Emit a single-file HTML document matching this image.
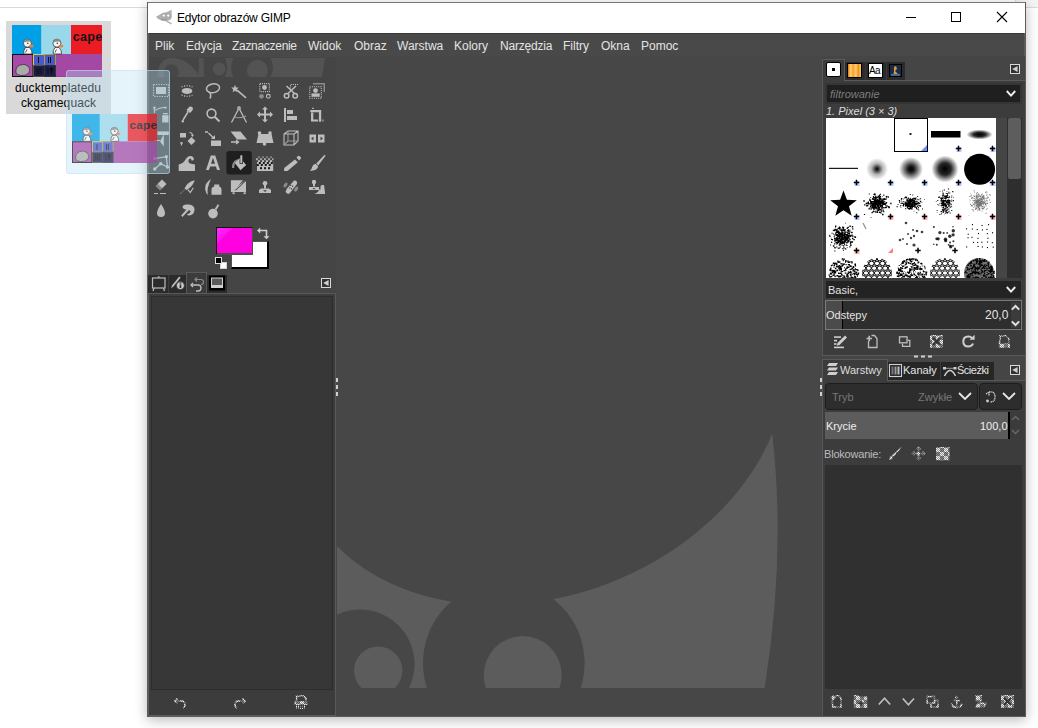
<!DOCTYPE html>
<html><head><meta charset="utf-8">
<style>
*{margin:0;padding:0;box-sizing:border-box}
html,body{width:1038px;height:728px;overflow:hidden;background:#fff;font-family:"Liberation Sans",sans-serif;position:relative}
.a{position:absolute}
.t{position:absolute;white-space:nowrap;line-height:1}
.menu{top:40px;font-size:12px;color:#e4e4e4}
</style></head><body>

<svg width="0" height="0" style="position:absolute">
<defs>
<pattern id="chk" width="8" height="8" patternUnits="userSpaceOnUse"><rect width="8" height="8" fill="#5a5a5a"/><path d="M0 0h1v1h-1zM2 0h1v1h-1zM1 1h1v1h-1zM3 1h1v1h-1zM0 2h1v1h-1zM2 2h1v1h-1zM1 3h1v1h-1zM3 3h1v1h-1zM4 4h1v1h-1zM6 4h1v1h-1zM5 5h1v1h-1zM7 5h1v1h-1zM4 6h1v1h-1zM6 6h1v1h-1zM5 7h1v1h-1zM7 7h1v1h-1z" fill="#ececec"/><path d="M1 0h1v1h-1zM3 0h1v1h-1zM0 1h1v1h-1zM2 1h1v1h-1zM1 2h1v1h-1zM3 2h1v1h-1zM0 3h1v1h-1zM2 3h1v1h-1zM5 4h1v1h-1zM7 4h1v1h-1zM4 5h1v1h-1zM6 5h1v1h-1zM5 6h1v1h-1zM7 6h1v1h-1zM4 7h1v1h-1zM6 7h1v1h-1z" fill="#9a9a9a"/><path d="M4 0h1v1h-1zM6 0h1v1h-1zM5 1h1v1h-1zM7 1h1v1h-1zM4 2h1v1h-1zM6 2h1v1h-1zM5 3h1v1h-1zM7 3h1v1h-1zM0 4h1v1h-1zM2 4h1v1h-1zM1 5h1v1h-1zM3 5h1v1h-1zM0 6h1v1h-1zM2 6h1v1h-1zM1 7h1v1h-1zM3 7h1v1h-1z" fill="#8a8a8a"/></pattern>
<symbol id="thumb" viewBox="0 0 90 52">
<rect x="0" y="0" width="29.5" height="29" fill="#00a0e6"/>
<rect x="29.5" y="0" width="29.5" height="29" fill="#99d8ea"/>
<rect x="59" y="0" width="31" height="29" fill="#ec1c24"/>
<text x="60.8" y="15.8" font-family="Liberation Sans" font-weight="bold" font-size="12.5" letter-spacing="0.3" fill="#141414">cape</text>
<rect x="0" y="29" width="90" height="23" fill="#a349a4"/>
<rect x="0.5" y="29.5" width="20.5" height="22" fill="#a84aa8" stroke="#111" stroke-width="1"/>
<path d="M4,48 Q3,42 8,40 Q12,38 16,41 Q19,44 17,48 Q14,51 9,50.5 Q5,50 4,48 Z" fill="#a9aaa9" stroke="#333" stroke-width=".8"/>
<rect x="21.5" y="29.5" width="11" height="11" fill="#4a58c8" stroke="#d8d040" stroke-width="1"/>
<rect x="32.5" y="29.5" width="11" height="11" fill="#4a58c8" stroke="#a8a040" stroke-width="1"/>
<rect x="21.5" y="40.5" width="11" height="11" fill="#1c1c48" stroke="#555530" stroke-width="1"/>
<rect x="32.5" y="40.5" width="11" height="11" fill="#1c1c48" stroke="#333" stroke-width="1"/>
<path d="M26.5,32 V38 M36.5,32 V38 M38.5,32 V38 M25,43 V49 M27,43 V49 M29,43 V49 M36,43 V49 M38.5,43 L39.5,49 L40.5,43" stroke="#111" stroke-width="1"/>
<g id="duck"><path d="M11.8,29 Q11,25.5 13.5,22.5 L17.5,22.5 Q20.5,25.5 20,29 Z" fill="#f6f6f6" stroke="#222" stroke-width=".7"/><circle cx="15.4" cy="18.2" r="4" fill="#f4f4f4" stroke="#222" stroke-width=".7"/><path d="M11.6,17.5 Q12,14.2 15.4,14.2 Q18.6,14.2 19.2,17 Q16,16 11.6,17.5 Z" fill="#8a8a8a"/><circle cx="15.8" cy="18.3" r=".8" fill="#333"/><ellipse cx="19.4" cy="21" rx="2.4" ry="1.5" fill="#e8823a"/><path d="M13.5,27.5 L15,24.5" stroke="#333" stroke-width=".8"/></g>
<use href="#duck" x="29.5"/>
</symbol>
</defs></svg>
<div class="a" style="left:6px;top:21px;width:105px;height:93px;background:#d9d9d9"></div>
<svg class="a" style="left:12px;top:25px" width="90" height="52" viewBox="0 0 90 52"><use href="#thumb"/></svg>
<div class="a" style="left:12px;top:76px;width:90px;height:1px;background:rgba(0,0,0,.08)"></div>
<div class="t" style="left:15px;top:82px;font-size:12px;color:#000;letter-spacing:0.1px">ducktemplatedu</div>
<div class="t" style="left:21px;top:97px;font-size:12px;color:#000;letter-spacing:0.1px">ckgamequack</div>

<!-- desktop -->
<div class="a" style="left:0;top:7px;width:1038px;height:1px;background:#dadada"></div>
<div class="a" style="left:1015px;top:0;width:1px;height:7px;background:#dadada"></div>
<div class="a" style="left:1016px;top:0;width:22px;height:7px;background:#f4f4f4"></div>
<!-- window -->
<div class="a" style="left:147px;top:2px;width:879px;height:715px;background:#454545;border-style:solid;border-color:#777 #5c5c5c #5c5c5c #5c5c5c;border-width:1px 2px 2px 2px;box-shadow:0 3px 12px rgba(0,0,0,.28)"></div>
<div class="a" style="left:148px;top:3px;width:877px;height:30px;background:#fff"></div>
<div class="t" style="left:177px;top:12px;font-size:12px;letter-spacing:-0.2px;color:#000">Edytor obrazów GIMP</div>
<svg class="a" style="left:150px;top:5px" width="26" height="24" viewBox="150 5 26 24"><path d="M156,16.8 L159.5,14.8 Q162.5,11.8 166.5,12.2 L171.6,9.8 L171.8,17 Q171.5,20.2 167.5,20.8 L172,23.6 L170.8,24.6 L165.8,21.3 Q159.5,21.2 156,16.8 Z" fill="#b0b0b0"/><circle cx="163.8" cy="15.6" r="1.6" fill="#fff" stroke="#888" stroke-width=".6"/><circle cx="168.2" cy="15.6" r="1.6" fill="#fff" stroke="#888" stroke-width=".6"/><path d="M161,19 Q164,20.5 167,19" stroke="#888" stroke-width=".7" fill="none"/></svg>
<div class="a" style="left:906px;top:17px;width:10px;height:1px;background:#000"></div>
<div class="a" style="left:951px;top:12px;width:10px;height:10px;border:1px solid #000"></div>
<svg class="a" style="left:996px;top:11px" width="12" height="12" viewBox="0 0 12 12"><path d="M1,1 L11,11 M11,1 L1,11" stroke="#000" stroke-width="1.1"/></svg>
<!-- menu -->
<div class="a" style="left:149px;top:33px;width:875px;height:1px;background:#3a3a3a"></div>
<div class="a" style="left:149px;top:34px;width:875px;height:23px;background:#494949"></div>
<div class="t menu" style="left:155px">Plik</div>
<div class="t menu" style="left:186px">Edycja</div>
<div class="t menu" style="left:232px;letter-spacing:-0.3px">Zaznaczenie</div>
<div class="t menu" style="left:308px">Widok</div>
<div class="t menu" style="left:354px">Obraz</div>
<div class="t menu" style="left:397px">Warstwa</div>
<div class="t menu" style="left:454px">Kolory</div>
<div class="t menu" style="left:500px;letter-spacing:-0.2px">Narzędzia</div>
<div class="t menu" style="left:563px">Filtry</div>
<div class="t menu" style="left:601px">Okna</div>
<div class="t menu" style="left:641px">Pomoc</div>

<svg class="a" style="left:150px;top:54px" width="180" height="26" viewBox="150 54 180 26">
<defs><clipPath id="cwt"><rect x="150" y="58" width="180" height="19"/></clipPath></defs>
<g clip-path="url(#cwt)" fill="#535353">
<path d="M157.5,77 C157.5,64 163,58 172,58 C182,58 191,64 197.5,73 L199,77 Z"/>
<path d="M198.8,58 L203.5,58 L204,77 L197,77 Q200,68 198.8,58 Z"/>
<path d="M225,58 L233.3,58 Q229,67.5 233.3,77 L225,77 Q229,67.5 225,58 Z"/>
<path d="M270.5,58 L325,58 L322,77 L270.5,77 Q275.5,67.5 270.5,58 Z"/>
</g>
<g clip-path="url(#cwt)">
<circle cx="171.3" cy="72" r="7.5" fill="#474747"/>
<circle cx="219.2" cy="69" r="6.4" fill="#535353"/>
<circle cx="257.4" cy="70.3" r="10.5" fill="#535353"/>
</g>
</svg>

<svg class="a" style="left:0;top:0" width="1038" height="728" viewBox="0 0 1038 728">
<g fill="#bdbdbd" stroke="none">
<!-- row1 -->
<!-- rect select col1 (161,91) -->
<g fill="none" stroke="#bdbdbd" stroke-width="1.2" stroke-dasharray="1.2 1.3"><rect x="153.5" y="84.5" width="15" height="12"/></g>
<rect x="156" y="87" width="10" height="7"/>
<!-- ellipse select 187,91 -->
<ellipse cx="187" cy="90.9" rx="5.3" ry="3"/>
<g fill="none" stroke="#bdbdbd" stroke-width="1.2" stroke-dasharray="1.2 1.4"><path d="M181.5,87 Q187,84.5 192.5,87"/><path d="M181.5,95 Q187,97.5 192.5,95"/></g>
<!-- lasso 213 -->
<g fill="none" stroke="#bdbdbd" stroke-width="1.5"><ellipse cx="213" cy="88.3" rx="6.6" ry="4.4" transform="rotate(-10 213 88.3)"/><path d="M208.5,91.5 Q212,94 210,98.5"/></g>
<!-- wand 239 -->
<polygon points="235,84.8 236,87.4 238.8,87.6 236.7,89.4 237.4,92.2 235,90.7 232.6,92.2 233.3,89.4 231.2,87.6 234,87.4"/>
<path d="M237,90.2 L246,97.8" stroke="#bdbdbd" stroke-width="1.6" fill="none"/>
<!-- by color 265 -->
<g fill="none" stroke="#bdbdbd" stroke-width="1.1" stroke-dasharray="1.1 1"><rect x="259.8" y="83.6" width="9.6" height="8"/></g>
<circle cx="264.5" cy="87.5" r="2.4"/>
<circle cx="261.5" cy="96.3" r="2.4" fill="#8a8a8a"/>
<circle cx="268.3" cy="96.3" r="1.9" fill="none" stroke="#bdbdbd" stroke-width="1.1"/>
<!-- scissors 291 -->
<g fill="none" stroke="#bdbdbd" stroke-width="1.1" stroke-dasharray="1.1 1"><path d="M290.5,88.5 V84.5 H298.8"/></g>
<g fill="none" stroke="#bdbdbd" stroke-width="1.5"><path d="M286.5,86 L294.5,93.5 M296,86 L288,93.5"/><circle cx="286.6" cy="95.8" r="2.3"/><circle cx="295.2" cy="95.8" r="2.3"/></g>
<!-- fg select 317 -->
<path d="M313,83 H325 V92 H323.5 V84.5 H313 Z" fill="#8a8a8a"/>
<g fill="none" stroke="#bdbdbd" stroke-width="1.1" stroke-dasharray="1.1 1"><rect x="309.8" y="86.8" width="11.5" height="11.5"/></g>
<circle cx="315.5" cy="90.6" r="2.4"/>
<rect x="311.5" y="93.4" width="8.2" height="3.4"/>

<!-- row2 -->
<!-- col1 row2 -->
<circle cx="154.4" cy="107.8" r="1.3"/>
<path d="M154.4,108.5 V113 M155.5,110.5 Q159,107.5 165,107.5" fill="none" stroke="#bdbdbd" stroke-width="1.1"/>
<circle cx="165.3" cy="107.6" r="1.2"/>
<rect x="162.2" y="115.2" width="6.3" height="7.3"/><rect x="163" y="113" width="4.8" height="1.3"/>
<!-- color picker 187 -->
<path d="M189.2,106.8 Q192.5,105.8 193,108.5 Q193,110 191.5,111.5 L190,113 L188.2,111.5 L187.3,112.3 L186.5,111.5 L187.5,110.5 L186.5,109.5 L188,108.5 Z"/>
<path d="M188,112 L183,120" stroke="#bdbdbd" stroke-width="1.5" fill="none"/>
<circle cx="182.8" cy="121.2" r="1.2"/>
<!-- zoom 213 -->
<circle cx="211.5" cy="113.5" r="4.4" fill="none" stroke="#bdbdbd" stroke-width="1.6"/>
<path d="M214.7,116.7 L219.5,121.5" stroke="#bdbdbd" stroke-width="2" fill="none"/>
<!-- measure 239 -->
<g fill="none" stroke="#bdbdbd" stroke-width="1.3"><circle cx="239" cy="108.2" r="1.2"/><path d="M238.3,109.5 L231.5,122.5 M239.7,109.5 L246.5,122.5"/><path d="M233.6,117 Q239.5,119 246,116" stroke-width="1.1" stroke="#9a9a9a"/></g>
<!-- move 265 -->
<path d="M265,106.5 L268,109.5 H266 V113.5 H270 V111.5 L273,114.5 L270,117.5 V115.5 H266 V119.5 H268 L265,122.5 L262,119.5 H264 V115.5 H260 V117.5 L257,114.5 L260,111.5 V113.5 H264 V109.5 H262 Z"/>
<!-- align 291 -->
<rect x="284" y="108" width="2" height="14"/>
<rect x="287" y="110" width="6" height="4"/>
<rect x="287" y="116" width="10" height="4"/>
<!-- crop 317 -->
<rect x="312" y="107.8" width="2" height="1"/>
<path d="M310.3,110 H321.2 V121.8 H318.9 V112.2 H310.3 Z"/>
<path d="M311,112.5 H313.3 V119.5 H318 V121.5 H311 Z"/>
<rect x="322.5" y="119.5" width="1" height="2"/>

<!-- row3 -->
<!-- handle transform col1 161 -->
<rect x="157.5" y="131.4" width="11.3" height="3.6"/>
<path d="M163.8,134 L163.8,146.6 L160,141.5 Z"/>
<path d="M154,140.5 H160" stroke="#bdbdbd" stroke-width="1"/>
<!-- rotate 187 -->
<path d="M180,133 L186,133 L186,137.5 L180,137.5 Z"/>
<path d="M187.5,141 L191.5,137 L195.5,141 L191.5,145 Z"/>
<path d="M189.5,132.5 Q192.5,132.5 192.5,135.5" stroke="#bdbdbd" stroke-width="1.1" fill="none"/><path d="M191,135 L192.5,137 L194,135 Z"/>
<path d="M181.5,145.5 V142 M180,143 H183" stroke="#bdbdbd" stroke-width="1.1" fill="none"/>
<!-- scale 213 -->
<path d="M205,132 H208 M206.5,132 V132 M208.5,133 L214,138.5" stroke="#bdbdbd" stroke-width="1.3" fill="none"/>
<path d="M211,139 H215 V135 Z"/>
<rect x="211" y="140.5" width="10" height="5.5"/>
<!-- shear 239 -->
<path d="M230.5,131.5 H240.5 L247,139.5 H237 Z"/>
<path d="M231,142 H238 M236,140 L238.5,142 L236,144" stroke="#bdbdbd" stroke-width="1.3" fill="none"/>
<!-- perspective 265 -->
<path d="M258.5,134 L271.5,134 L273.5,143 L256.5,143 Z"/>
<circle cx="259.5" cy="133" r="1.8"/><circle cx="270" cy="133" r="1.8"/><circle cx="264.5" cy="144" r="1.8"/>
<!-- 3d transform 291 -->
<g fill="none" stroke="#bdbdbd" stroke-width="1.1"><path d="M284,134 L288,131 H298 V141 L294,145 H284 Z M284,134 H294 V145 M294,134 L298,131"/><path d="M288,131 V141 H298 M288,141 L284,145" stroke="#9a9a9a"/></g>
<!-- flip 317 -->
<path d="M309.5,134.5 H316 V142.5 H309.5 Z M318,134.5 H324.5 V142.5 H318 Z"/>
<path d="M311,138.5 L313.5,136.5 V140.5 Z M323,138.5 L320.5,136.5 V140.5 Z" fill="#454545"/>

<!-- row4 -->
<!-- paths col1 -->
<path d="M155,158.5 L166.3,156.7 L167.5,167 L160.7,163.8 L154.8,169" fill="none" stroke="#bdbdbd" stroke-width="1.2"/>
<circle cx="155" cy="158.5" r="1.7"/><circle cx="166.3" cy="156.7" r="1.7"/><circle cx="167.5" cy="167" r="1.7"/><circle cx="160.7" cy="163.8" r="1.7"/><circle cx="154.8" cy="169" r="1.7"/>
<!-- warp 187 -->
<path d="M178.7,171 V164.5 Q183.5,163.5 185.5,159.5 Q187.5,155.8 190.8,156 Q194.2,156.5 193.8,160.2 L191.4,160.6 Q191.6,158.6 190.2,158.6 Q188.6,158.8 188.4,161 Q188.4,164.2 195,164.4 V171 Z"/>
<!-- text 213 -->
<path d="M210.8,155.5 H215.2 L220,170 H217 L215.9,166.5 H210.1 L209,170 H206 Z M211,163.8 H215 L213,157.8 Z"/>
</g>
<!-- bucket selected -->
<rect x="226.4" y="151.1" width="25.4" height="23.5" rx="3" fill="#1f1f1f"/>
<g fill="#bdbdbd">
<path d="M234,162 L240,158 L246.2,165 L240.5,170.2 Z"/>
<path d="M232,168 Q231.5,162 236.5,159.5 L238,160.5 Q234,162.5 234.2,168 Z" fill="#8a8a8a"/>
<rect x="239.6" y="154.8" width="3.4" height="9" fill="#1f1f1f"/>
<rect x="240.3" y="155.3" width="2" height="7.8"/>
<!-- gradient 265 -->
<rect x="257" y="162" width="16.2" height="9"/>
</g>
<g>
<g fill="#bdbdbd" opacity=".45"><rect x="258" y="156.2" width="2" height="2"/><rect x="262" y="156.2" width="2" height="2"/><rect x="266" y="156.2" width="2" height="2"/><rect x="270" y="156.2" width="2" height="2"/></g>
<g fill="#bdbdbd" opacity=".8"><rect x="256" y="158.2" width="2" height="2"/><rect x="260" y="158.2" width="2" height="2"/><rect x="264" y="158.2" width="2" height="2"/><rect x="268" y="158.2" width="2" height="2"/><rect x="272" y="158.2" width="1.5" height="2"/></g>
<g fill="#bdbdbd"><rect x="258" y="160.2" width="2" height="2"/><rect x="262" y="160.2" width="2" height="2"/><rect x="266" y="160.2" width="2" height="2"/><rect x="270" y="160.2" width="2" height="2"/></g>
<g fill="#1a1a1a"><rect x="256.8" y="164" width="2" height="2"/><rect x="260.8" y="164" width="2" height="2"/><rect x="264.8" y="164" width="2" height="2"/><rect x="268.8" y="164" width="2" height="2"/>
<rect x="258.8" y="162" width="2" height="2"/><rect x="262.8" y="162" width="2" height="2"/><rect x="266.8" y="162" width="2" height="2"/><rect x="270.8" y="162" width="2" height="2"/>
<rect x="260" y="167.2" width="2" height="2"/><rect x="264" y="167.2" width="2" height="2"/><rect x="268" y="167.2" width="2" height="2"/></g>
</g>
<g fill="#bdbdbd">
<!-- pencil 291 -->
<path d="M295,159.5 L297.8,162.3 L287.5,171 L284,171 L284.2,168 Z"/><path d="M296.5,157.5 L298,156 Q299,155.5 300,156.5 L300.8,157.3 Q301.3,158.3 300.6,159 L299,160.6 Z"/>
<!-- paintbrush 317 -->
<path d="M324.6,154.8 L325.6,155.8 L318.2,165.4 L316.3,163.6 Z"/>
<path d="M315.6,163.8 L318.2,166.3 Q317.5,170.8 309.8,171 Q311.8,169.3 312,167.3 Q312.6,164.3 315.6,163.8 Z"/>

<!-- row5 -->
<!-- eraser 161 -->
<path d="M162,179.5 L166.5,184 L162,188.5 L157.5,184 Z"/>
<path d="M157.5,184 L162,188.5 L160,190.5 L155.5,186 Z" fill="#8a8a8a"/>
<rect x="154" y="193" width="4" height="1"/><rect x="160" y="193" width="6" height="1"/>
<!-- airbrush 187 -->
<path d="M194.8,180.3 Q187.5,181.5 184.5,188.5 L186.5,190 Q192.5,187 194.8,180.3 Z"/>
<path d="M187.8,189.6 L190.3,192.6 L193.3,187.8" fill="none" stroke="#bdbdbd" stroke-width="1.2"/>
<path d="M184.5,190 L180,194" stroke="#9a9a9a" stroke-width="1" fill="none" stroke-dasharray="1 .6"/>
<!-- ink 213 -->
<path d="M211,179 Q204.5,183 205.2,189.5 Q205.8,193 207.8,195 Q206.5,188 211,179 Z"/>
<path d="M214.2,184.6 H219.2 V186.5 Q221.5,187 221.5,189 V194.8 H211.5 V189 Q211.5,187 214.2,186.5 Z"/>
<!-- mypaint 239 -->
<path d="M230.9,180.2 H243 L234,190.5 L236.5,190 L246,181 V192 H230.9 Z"/>
<path d="M245.5,180.5 L236.5,188.8 L233.8,190.8 L234.8,188 Z"/>
<rect x="232.5" y="192.3" width="2.2" height="1.8"/><rect x="243.6" y="192.3" width="2.2" height="1.8"/>
<!-- clone 265 -->
<circle cx="265" cy="183.2" r="2.3"/>
<rect x="264" y="184.5" width="2" height="4"/>
<path d="M261,188.5 H269 L271,190 V193 H259 V190 Z"/>
<path d="M263,190.2 H267 L265,192 Z" fill="#454545"/>
<!-- heal 291 -->
<ellipse cx="285.5" cy="185" rx="1.6" ry="2.8" fill="#8a8a8a" transform="rotate(35 285.5 185)"/>
<ellipse cx="296.2" cy="189" rx="1.6" ry="2.8" fill="#8a8a8a" transform="rotate(35 296.2 189)"/>
<path d="M294.3,180.3 Q297.8,180.8 297,184 L289.5,193.5 Q286.5,194.5 285.5,191.5 L287,188.6 Z"/>
<g fill="#454545"><rect x="290.2" y="184.8" width="1.2" height="1.2"/><rect x="292" y="185.6" width="1.2" height="1.2"/><rect x="289.2" y="187.4" width="1.2" height="1.2"/><rect x="291" y="188.2" width="1.2" height="1.2"/></g>
<!-- persp clone 317 -->
<circle cx="314" cy="182" r="2.2"/><rect x="313" y="183" width="2" height="3.5"/>
<path d="M309,187 H319 V190 H309 Z"/>
<path d="M312.5,188 H315.5 L314,189.5 Z" fill="#454545"/>
<path d="M319,189.5 H320.5 V186 L322,185 H324 L325.2,194 H314.5 Q318.8,192 319,189.5 Z"/>
<!-- row6 -->
<path d="M161,204 Q157,210 157,213 Q157,217 161,217 Q165,217 165,213 Q165,210 161,204 Z"/>
<path d="M186.5,204.5 Q194,204 194.5,209 Q194.8,214.5 189.5,215.5 Q187.5,215.8 187,214 Q190.5,213.5 190.5,211.2 Q190,209.8 188.5,210.5 L182.5,217 L181.2,215.6 L186.3,209.8 Q182.5,208.8 182.5,207 Q182.8,204.8 186.5,204.5 Z"/>
<circle cx="213" cy="213.6" r="4.8"/>
<path d="M215.5,209.5 L218.5,204.8" stroke="#bdbdbd" stroke-width="1.9"/>
</g>
</svg>

<!-- fg/bg -->
<div class="a" style="left:231px;top:241px;width:38px;height:28px;background:#fff;border-style:solid;border-color:#555 #000 #000 #555;border-width:1.5px 2px 2px 1.5px"></div>
<div class="a" style="left:216px;top:227px;width:37px;height:28px;background:linear-gradient(135deg,#ff30ff 0,#ff10f0 25%,#ff00e0 26%);border-style:solid;border-color:#111 #4d4d4d #4d4d4d #111;border-width:1.5px 1.5px 2px 1.5px"></div>
<svg class="a" style="left:256px;top:226px" width="14" height="14" viewBox="0 0 14 14"><path d="M3,4.5 H10.5 V11" fill="none" stroke="#cfcfcf" stroke-width="1.6"/><path d="M1,4.5 L4.2,1.5 V7.5 Z M7.5,10.2 H13.5 L10.5,13.2 Z" fill="#cfcfcf"/></svg>
<div class="a" style="left:220px;top:261.5px;width:7px;height:7px;background:#fff;border:1px solid #d0d0d0"></div>
<div class="a" style="left:215px;top:257px;width:7px;height:7px;background:#000;border:1px solid #e0e0e0"></div>
<!-- tabs -->
<div class="a" style="left:148px;top:275px;width:79px;height:18px;background:#2b2b2b"></div>
<div class="a" style="left:168px;top:275px;width:1px;height:18px;background:#3d3d3d"></div>
<div class="a" style="left:186px;top:272px;width:21px;height:22px;background:#3c3c3c;border:1px solid #5a5a5a;border-bottom:none"></div>
<svg class="a" style="left:148px;top:272px" width="80" height="22" viewBox="148 272 80 22">
<g fill="none" stroke="#bdbdbd" stroke-width="1.2"><rect x="152.5" y="278" width="12.5" height="10"/><path d="M154,288 L153,291 M163.5,288 L164.5,291"/></g>
<path d="M157,277.5 L158.8,276 L160.5,277.5 Z" fill="#bdbdbd"/>
<path d="M179.2,276.6 L180.6,277.8 L173.6,286.2 L171,288.4 L172.2,285.2 Z" fill="#bdbdbd"/>
<circle cx="180.4" cy="285.6" r="4" fill="#cfcfcf" stroke="#2b2b2b" stroke-width=".8"/><rect x="179.6" y="284.4" width="1.7" height="3.6" fill="#2b2b2b"/><rect x="179.6" y="282.4" width="1.7" height="1.2" fill="#2b2b2b"/>
<g fill="none" stroke="#bdbdbd" stroke-width="1.3"><path d="M191,285 H198 Q201,285 201,288 Q201,291 198,291 H196"/><path d="M193,283 L191,285 L193,287"/></g>
<g fill="none" stroke="#8a8a8a" stroke-width="1.2"><path d="M195,279.5 H201 Q203.5,279.5 203.5,282 Q203.5,284.5 201,284.5"/><path d="M197,277.5 L195,279.5 L197,281.5"/></g>
<rect x="209" y="275.5" width="16" height="15" fill="#000"/>
<rect x="211" y="277.5" width="12" height="10.5" fill="#cfcfcf"/>
<rect x="212" y="278.5" width="10" height="6.5" fill="#5a5a5a"/>
</svg>
<!-- config btn -->
<div class="a" style="left:321px;top:278px;width:10px;height:10px;border:1px solid #d9d9d9;background:#333"></div>
<svg class="a" style="left:321px;top:278px" width="10" height="10" viewBox="0 0 10 10"><path d="M2.2,5 L7.6,2 V8 Z" fill="#cfcfcf"/></svg>
<!-- frame -->
<div class="a" style="left:149px;top:293px;width:187px;height:422px;background:#3c3c3c;border-top:1px solid #595959;border-right:1px solid #595959"></div>
<div class="a" style="left:151px;top:296px;width:182px;height:394px;background:#373737;border:1px solid #2d2d2d"></div>
<svg class="a" style="left:150px;top:690px" width="180" height="24" viewBox="150 690 180 24">
<g fill="none" stroke="url(#chk)" stroke-width="1.7">
<path d="M177.5,698.5 L175,701 L177.5,703.5 M175.5,701 H181.5 Q185,701 185,704.5 Q185,707 183,708"/>
<path d="M242.5,698.5 L245,701 L242.5,703.5 M244.5,701 H238.5 Q235,701 235,704.5 Q235,707 237,708"/>
</g>
<path d="M296.5,702 V696 H303.5 L306,698.5 V702 Z" fill="none" stroke="url(#chk)" stroke-width="1.5"/>
<rect x="294.5" y="701.5" width="13" height="3.5" fill="url(#chk)"/>
<path d="M296.5,705.5 V709 M298.5,705.5 V709 M300.5,705.5 V709 M302.5,705.5 V709 M304.5,705.5 V709" stroke="url(#chk)" stroke-width="1"/>
</svg>

<svg class="a" style="left:336px;top:56px" width="486" height="660" viewBox="336 56 486 660">
<defs><clipPath id="cw"><rect x="337" y="380" width="485" height="308"/></clipPath></defs>
<rect x="336" y="56" width="486" height="660" fill="#474747"/>
<g clip-path="url(#cw)">
<path d="M337,420 L772.3,420 L772.3,434.6 Q786,555 764.6,688 L337,688 Z" fill="#5c5c5c"/>
<ellipse cx="539.6" cy="402.4" rx="253.6" ry="193.6" transform="rotate(-21.2 539.6 402.4)" fill="#474747"/>
<circle cx="360" cy="664" r="54.5" fill="#474747"/>
<circle cx="378.2" cy="670.6" r="24.2" fill="#5c5c5c"/>
<circle cx="503.8" cy="663" r="80.8" fill="#474747"/>
<circle cx="522.7" cy="675" r="39" fill="#5c5c5c"/>
</g>
<!-- left border line & grips -->

<rect x="336" y="378" width="2" height="4" fill="#cfcfcf"/>
<rect x="336" y="385" width="2" height="4" fill="#cfcfcf"/>
<rect x="336" y="392" width="2" height="4" fill="#cfcfcf"/>
</svg>

<!-- right dock -->
<div class="a" style="left:822px;top:56px;width:203px;height:660px;background:#454545"></div>
<div class="a" style="left:822px;top:380px;width:203px;height:336px;background:#3c3c3c"></div>
<!-- brushes tabs -->
<div class="a" style="left:822px;top:80px;width:203px;height:276px;background:#3c3c3c;border-top:1px solid #595959;border-bottom:1px solid #595959"></div>
<div class="a" style="left:822px;top:59px;width:1px;height:297px;background:#575757"></div>
<div class="a" style="left:822px;top:359px;width:1px;height:357px;background:#575757"></div>
<div class="a" style="left:845px;top:62px;width:60px;height:18px;background:#2b2b2b"></div>
<div class="a" style="left:865px;top:62px;width:1px;height:18px;background:#3a3a3a"></div>
<div class="a" style="left:886px;top:62px;width:1px;height:18px;background:#3a3a3a"></div>
<div class="a" style="left:822px;top:59px;width:23px;height:22px;background:#3c3c3c;border:1px solid #5a5a5a;border-bottom:none"></div>
<div class="a" style="left:826px;top:62px;width:15px;height:15px;background:#fff;border:1.5px solid #000;border-radius:2px"></div>
<div class="a" style="left:832px;top:68px;width:3px;height:3px;background:#000"></div>
<div class="a" style="left:847px;top:63px;width:15px;height:15px;border:1.5px solid #000;background:linear-gradient(90deg,#e07a10,#ffd070 20%,#f7a030 40%,#ffd070 60%,#f09020 80%,#ffd070)"></div>
<div class="a" style="left:868px;top:63px;width:15px;height:15px;background:#fff;border:1.5px solid #000"></div>
<div class="t" style="left:869px;top:66px;font-size:10px;color:#000;letter-spacing:-0.6px">Aa</div>
<div class="a" style="left:889px;top:64px;width:13px;height:13px;background:#1c2a44;border:1.5px solid #000"></div>
<svg class="a" style="left:889px;top:64px" width="13" height="13" viewBox="0 0 13 13"><path d="M5,3 L7,2 L8,5 L6,7 L9,10 L4,11 L5,8 Z" fill="#d89a40"/><rect x="2" y="10" width="9" height="2" fill="#3a6aa0"/></svg>
<div class="a" style="left:1010px;top:64px;width:10px;height:10px;border:1px solid #d9d9d9;background:#333"></div>
<svg class="a" style="left:1010px;top:64px" width="10" height="10" viewBox="0 0 10 10"><path d="M2.2,5 L7.6,2 V8 Z" fill="#cfcfcf"/></svg>
<!-- brushes frame -->
<div class="a" style="left:825px;top:83px;width:197px;height:21px;background:#1f1f1f;border:2px solid #353535"></div>
<div class="t" style="left:830px;top:89px;font-size:11px;font-style:italic;color:#7d7d7d">filtrowanie</div>
<svg class="a" style="left:1005px;top:87.5px" width="12" height="10" viewBox="0 0 12 10"><path d="M1.8,3 L6,7.6 L10.2,3" fill="none" stroke="#eeeeee" stroke-width="1.9"/></svg>
<div class="t" style="left:826px;top:106px;font-size:11px;font-style:italic;color:#dedede">1. Pixel (3 × 3)</div>
<div class="a" style="left:996px;top:118px;width:11px;height:160px;background:#454545"></div>
<div class="a" style="left:1007px;top:118px;width:15px;height:160px;background:#2e2e2e"></div>
<div class="a" style="left:1008px;top:118px;width:13px;height:61px;background:#5d5d5d;border-radius:2px"></div>
<svg class="a" style="left:826px;top:118px" width="170" height="160" viewBox="826 118 170 160">
<defs>
<radialGradient id="fzA"><stop offset="0" stop-color="#000"/><stop offset=".25" stop-color="#000" stop-opacity=".9"/><stop offset="1" stop-color="#000" stop-opacity="0"/></radialGradient>
<radialGradient id="fzB"><stop offset="0" stop-color="#000"/><stop offset=".45" stop-color="#000" stop-opacity=".85"/><stop offset="1" stop-color="#000" stop-opacity="0"/></radialGradient>
<radialGradient id="fzS"><stop offset="0" stop-color="#000"/><stop offset=".12" stop-color="#000" stop-opacity=".85"/><stop offset=".5" stop-color="#000" stop-opacity=".3"/><stop offset="1" stop-color="#000" stop-opacity="0"/></radialGradient>
<clipPath id="bgc"><rect x="826" y="118" width="170" height="160"/></clipPath>
</defs>
<rect x="826" y="118" width="170" height="160" fill="#fff"/>
<g clip-path="url(#bgc)">
<rect x="894.5" y="118.5" width="33" height="33" fill="none" stroke="#000" stroke-width="1"/>
<rect x="909.5" y="133" width="2" height="2" fill="#222"/>
<path d="M927,145 L927,151 L921,151 Z" fill="#6f8fff"/>
<rect x="931" y="131" width="29.5" height="6.5" fill="#000"/>
<rect x="956.5" y="147.0" width="5" height="5" fill="#7a9cff" opacity=".55"/><path d="M955.8,148.5 H961.2 M958.5,145.8 V151.2" stroke="#000" stroke-width="1.5"/>
<ellipse cx="979.5" cy="134.5" rx="13" ry="5" fill="url(#fzB)"/>
<rect x="990.5" y="147.0" width="5" height="5" fill="#7a9cff" opacity=".55"/><path d="M989.8,148.5 H995.2 M992.5,145.8 V151.2" stroke="#000" stroke-width="1.5"/>
<rect x="829" y="167.8" width="29" height="1.1" fill="#000"/>
<rect x="854.5" y="181.0" width="5" height="5" fill="#7a9cff" opacity=".55"/><path d="M853.8,182.5 H859.2 M856.5,179.8 V185.2" stroke="#000" stroke-width="1.5"/>
<circle cx="877" cy="169" r="11" fill="url(#fzS)"/>
<rect x="888.5" y="181.0" width="5" height="5" fill="#7a9cff" opacity=".55"/><path d="M887.8,182.5 H893.2 M890.5,179.8 V185.2" stroke="#000" stroke-width="1.5"/>
<circle cx="911" cy="169" r="12" fill="url(#fzA)"/>
<rect x="922.5" y="181.0" width="5" height="5" fill="#7a9cff" opacity=".55"/><path d="M921.8,182.5 H927.2 M924.5,179.8 V185.2" stroke="#000" stroke-width="1.5"/>
<circle cx="945" cy="169" r="13.5" fill="url(#fzB)"/>
<rect x="956.5" y="181.0" width="5" height="5" fill="#7a9cff" opacity=".55"/><path d="M955.8,182.5 H961.2 M958.5,179.8 V185.2" stroke="#000" stroke-width="1.5"/>
<circle cx="979.6" cy="169.2" r="15.5" fill="#000"/>
<rect x="990.5" y="181.0" width="5" height="5" fill="#7a9cff" opacity=".55"/><path d="M989.8,182.5 H995.2 M992.5,179.8 V185.2" stroke="#000" stroke-width="1.5"/>
<polygon points="843.5,190.5 846.9,199.8 856.8,200.2 849.0,206.3 851.7,215.8 843.5,210.3 835.3,215.8 838.0,206.3 830.2,200.2 840.1,199.8" fill="#000"/>
<rect x="854.5" y="215.0" width="5" height="5" fill="#7a9cff" opacity=".55"/><path d="M853.8,216.5 H859.2 M856.5,213.8 V219.2" stroke="#000" stroke-width="1.5"/>
<path fill="#000" opacity="1.0" d="M872.1 204.5h1.4v1.4h-1.4zM872.3 204.0h1.2v1.2h-1.2zM878.9 207.4h1.2v1.2h-1.2zM877.5 201.3h1.0v1.0h-1.0zM883.1 206.9h1.3v1.3h-1.3zM888.0 206.0h1.5v1.5h-1.5zM873.9 198.4h0.9v0.9h-0.9zM881.9 203.5h0.8v0.8h-0.8zM878.1 205.8h0.8v0.8h-0.8zM872.8 204.0h1.4v1.4h-1.4zM871.3 202.3h1.1v1.1h-1.1zM874.7 199.2h1.0v1.0h-1.0zM890.2 202.8h1.4v1.4h-1.4zM876.1 199.6h1.0v1.0h-1.0zM876.6 204.5h1.3v1.3h-1.3zM870.7 207.5h1.1v1.1h-1.1zM884.5 201.0h0.8v0.8h-0.8zM879.2 211.5h1.1v1.1h-1.1zM881.0 202.5h0.9v0.9h-0.9zM872.2 198.0h1.0v1.0h-1.0zM880.1 204.9h1.5v1.5h-1.5zM877.1 201.0h1.0v1.0h-1.0zM878.1 203.8h1.4v1.4h-1.4zM879.2 207.6h1.1v1.1h-1.1zM879.4 209.0h0.9v0.9h-0.9zM875.8 201.4h1.1v1.1h-1.1zM877.7 206.1h1.5v1.5h-1.5zM878.1 199.8h1.4v1.4h-1.4zM878.0 206.9h1.4v1.4h-1.4zM875.8 201.6h1.5v1.5h-1.5zM877.7 206.0h1.3v1.3h-1.3zM875.4 205.9h0.9v0.9h-0.9zM881.5 205.8h1.0v1.0h-1.0zM873.9 200.7h1.1v1.1h-1.1zM881.4 201.8h1.2v1.2h-1.2zM878.7 201.1h0.9v0.9h-0.9zM883.2 199.0h1.0v1.0h-1.0zM879.4 209.1h1.5v1.5h-1.5zM880.2 212.2h1.4v1.4h-1.4zM873.7 200.5h0.9v0.9h-0.9zM887.0 205.5h1.0v1.0h-1.0zM876.1 200.0h1.4v1.4h-1.4zM874.3 201.1h0.9v0.9h-0.9zM876.7 201.5h1.0v1.0h-1.0zM869.7 200.1h1.2v1.2h-1.2zM875.3 211.8h0.9v0.9h-0.9zM880.2 203.3h1.1v1.1h-1.1zM879.3 203.9h1.1v1.1h-1.1zM875.1 202.1h1.1v1.1h-1.1zM885.7 195.9h1.3v1.3h-1.3zM875.1 198.1h0.9v0.9h-0.9zM877.7 203.2h1.4v1.4h-1.4zM873.9 193.2h0.8v0.8h-0.8zM874.0 199.5h1.3v1.3h-1.3zM870.6 216.9h0.9v0.9h-0.9zM870.7 201.1h1.4v1.4h-1.4zM876.5 196.8h1.4v1.4h-1.4zM880.2 201.1h1.3v1.3h-1.3zM883.6 198.3h1.1v1.1h-1.1zM879.0 195.3h1.2v1.2h-1.2zM874.2 200.2h1.2v1.2h-1.2zM875.7 202.0h1.2v1.2h-1.2zM885.2 202.7h1.3v1.3h-1.3zM872.0 207.2h1.2v1.2h-1.2zM869.9 205.8h0.9v0.9h-0.9zM877.0 202.0h1.2v1.2h-1.2zM874.1 203.3h1.3v1.3h-1.3zM871.5 203.1h1.4v1.4h-1.4zM877.0 203.6h1.0v1.0h-1.0zM875.8 200.6h0.9v0.9h-0.9zM881.9 199.7h1.1v1.1h-1.1zM879.8 200.8h1.3v1.3h-1.3zM878.4 207.0h1.4v1.4h-1.4zM884.1 198.8h1.1v1.1h-1.1zM874.0 201.3h0.9v0.9h-0.9zM869.4 203.2h1.4v1.4h-1.4zM874.6 193.5h1.0v1.0h-1.0zM879.1 206.8h1.0v1.0h-1.0zM877.9 207.0h1.2v1.2h-1.2zM873.5 203.1h1.4v1.4h-1.4zM881.4 202.5h0.9v0.9h-0.9zM885.0 204.6h0.8v0.8h-0.8zM875.7 198.0h1.0v1.0h-1.0zM877.2 202.2h0.9v0.9h-0.9zM876.1 203.3h1.4v1.4h-1.4zM877.2 205.2h0.8v0.8h-0.8zM874.0 199.8h1.2v1.2h-1.2zM872.9 197.0h1.5v1.5h-1.5zM875.9 200.6h1.1v1.1h-1.1zM877.3 203.5h1.1v1.1h-1.1zM876.4 200.6h1.0v1.0h-1.0zM873.5 208.1h1.2v1.2h-1.2zM871.9 198.6h1.1v1.1h-1.1zM879.3 194.6h0.9v0.9h-0.9zM882.8 200.4h0.9v0.9h-0.9zM871.6 204.6h1.4v1.4h-1.4zM873.3 206.6h1.4v1.4h-1.4zM879.8 193.8h1.1v1.1h-1.1zM875.4 200.8h1.3v1.3h-1.3zM879.4 197.8h1.3v1.3h-1.3zM879.0 211.4h1.5v1.5h-1.5zM881.9 202.3h1.4v1.4h-1.4zM873.2 210.9h1.4v1.4h-1.4zM876.0 204.4h1.1v1.1h-1.1zM870.5 200.9h1.1v1.1h-1.1zM884.2 204.3h0.8v0.8h-0.8zM877.8 200.7h1.0v1.0h-1.0zM877.5 200.9h0.9v0.9h-0.9zM870.6 202.3h1.4v1.4h-1.4zM873.4 194.0h1.1v1.1h-1.1zM878.6 202.5h1.0v1.0h-1.0zM873.7 202.4h1.3v1.3h-1.3zM873.9 199.3h1.4v1.4h-1.4zM873.8 201.7h1.1v1.1h-1.1zM881.8 195.9h0.9v0.9h-0.9zM883.2 194.5h1.2v1.2h-1.2zM874.6 201.8h1.2v1.2h-1.2zM871.5 202.9h0.8v0.8h-0.8zM881.7 202.1h1.1v1.1h-1.1zM878.6 198.1h1.1v1.1h-1.1zM876.5 201.6h1.2v1.2h-1.2zM868.4 208.2h1.4v1.4h-1.4zM876.5 207.5h0.9v0.9h-0.9zM870.3 206.0h1.4v1.4h-1.4zM873.5 203.5h0.9v0.9h-0.9zM870.3 196.9h0.9v0.9h-0.9zM877.2 202.2h0.9v0.9h-0.9zM877.9 209.0h1.0v1.0h-1.0zM873.6 207.4h0.9v0.9h-0.9zM876.8 201.0h1.2v1.2h-1.2zM877.0 205.7h1.2v1.2h-1.2zM873.4 204.5h1.1v1.1h-1.1zM874.7 202.6h0.9v0.9h-0.9zM873.1 198.8h1.2v1.2h-1.2zM880.3 198.6h1.4v1.4h-1.4zM877.7 209.5h1.4v1.4h-1.4zM879.9 201.0h1.0v1.0h-1.0zM879.5 201.7h1.5v1.5h-1.5zM878.6 201.6h1.0v1.0h-1.0zM876.5 199.9h0.9v0.9h-0.9zM879.1 199.4h1.4v1.4h-1.4zM879.9 205.9h1.3v1.3h-1.3zM879.7 203.3h1.3v1.3h-1.3zM885.9 197.4h0.9v0.9h-0.9zM870.3 202.8h1.2v1.2h-1.2zM876.0 200.6h0.8v0.8h-0.8zM877.9 203.7h1.2v1.2h-1.2zM871.8 202.5h0.9v0.9h-0.9zM878.1 205.5h1.4v1.4h-1.4zM886.1 202.4h0.9v0.9h-0.9zM886.1 206.7h1.1v1.1h-1.1zM877.3 199.5h1.1v1.1h-1.1zM872.8 202.6h1.2v1.2h-1.2zM883.2 203.5h1.4v1.4h-1.4zM878.8 207.0h1.3v1.3h-1.3zM874.8 204.5h0.9v0.9h-0.9zM876.3 202.9h1.4v1.4h-1.4zM879.0 197.1h1.4v1.4h-1.4zM874.2 200.0h1.2v1.2h-1.2zM865.6 202.7h1.4v1.4h-1.4zM876.5 211.8h1.3v1.3h-1.3zM878.3 195.8h1.1v1.1h-1.1zM883.6 198.0h1.3v1.3h-1.3zM877.7 196.2h1.1v1.1h-1.1zM876.7 201.5h1.0v1.0h-1.0zM876.4 203.1h1.0v1.0h-1.0zM873.4 198.7h1.0v1.0h-1.0zM882.6 201.0h1.0v1.0h-1.0zM874.2 198.6h1.2v1.2h-1.2zM863.9 213.9h1.2v1.2h-1.2zM875.0 196.5h1.5v1.5h-1.5zM882.5 203.8h1.3v1.3h-1.3zM876.8 207.0h0.8v0.8h-0.8zM878.3 206.7h0.9v0.9h-0.9zM877.0 211.7h1.2v1.2h-1.2zM866.6 202.5h1.2v1.2h-1.2zM882.7 202.8h1.4v1.4h-1.4zM881.8 205.5h1.3v1.3h-1.3zM885.9 205.6h0.9v0.9h-0.9zM874.6 203.4h1.1v1.1h-1.1zM875.9 202.1h1.5v1.5h-1.5zM872.7 205.3h1.2v1.2h-1.2zM874.8 205.5h1.3v1.3h-1.3zM874.0 201.8h1.3v1.3h-1.3zM876.8 203.6h1.0v1.0h-1.0zM879.3 203.6h1.3v1.3h-1.3zM870.4 208.4h1.3v1.3h-1.3zM888.4 206.7h1.5v1.5h-1.5zM884.8 206.9h1.1v1.1h-1.1zM866.3 204.5h1.0v1.0h-1.0zM867.7 201.6h1.3v1.3h-1.3zM866.1 205.2h1.4v1.4h-1.4zM875.4 201.8h1.2v1.2h-1.2zM874.4 203.7h0.8v0.8h-0.8zM875.0 202.6h1.1v1.1h-1.1zM874.8 199.2h1.0v1.0h-1.0zM873.4 200.9h1.3v1.3h-1.3zM863.3 200.3h1.5v1.5h-1.5zM876.7 200.1h0.9v0.9h-0.9zM882.5 198.6h1.2v1.2h-1.2zM875.0 205.5h1.3v1.3h-1.3zM872.1 200.9h1.2v1.2h-1.2zM877.1 200.4h1.0v1.0h-1.0zM885.8 201.9h1.4v1.4h-1.4zM878.4 203.3h1.0v1.0h-1.0zM872.0 205.5h0.9v0.9h-0.9zM875.5 202.6h0.9v0.9h-0.9zM874.7 198.5h1.2v1.2h-1.2zM873.8 206.3h0.9v0.9h-0.9zM873.3 208.5h1.4v1.4h-1.4zM878.8 203.9h1.4v1.4h-1.4zM872.1 198.2h0.9v0.9h-0.9zM874.3 204.4h1.4v1.4h-1.4zM873.0 207.3h1.5v1.5h-1.5zM874.7 207.5h1.3v1.3h-1.3zM880.7 201.0h1.1v1.1h-1.1zM883.7 207.7h0.9v0.9h-0.9zM881.5 205.6h1.1v1.1h-1.1zM875.7 199.9h1.3v1.3h-1.3zM879.5 204.3h1.3v1.3h-1.3zM880.0 204.7h1.3v1.3h-1.3zM875.9 199.9h0.9v0.9h-0.9zM873.0 208.0h1.1v1.1h-1.1zM881.7 207.2h1.2v1.2h-1.2zM885.3 198.4h1.4v1.4h-1.4zM870.3 205.7h1.0v1.0h-1.0zM875.3 206.7h1.5v1.5h-1.5zM879.4 201.1h1.1v1.1h-1.1zM874.5 205.8h1.1v1.1h-1.1zM875.0 204.7h1.2v1.2h-1.2zM878.5 198.2h1.4v1.4h-1.4zM874.7 202.0h1.3v1.3h-1.3zM879.4 200.8h0.8v0.8h-0.8zM872.0 202.5h1.2v1.2h-1.2zM882.7 201.8h1.4v1.4h-1.4zM881.6 205.0h1.4v1.4h-1.4zM878.4 203.8h1.3v1.3h-1.3zM878.4 202.0h1.2v1.2h-1.2zM881.1 208.2h1.3v1.3h-1.3zM877.1 205.8h1.3v1.3h-1.3zM870.3 202.1h1.1v1.1h-1.1zM871.5 211.9h1.3v1.3h-1.3zM872.0 203.2h1.3v1.3h-1.3zM874.7 194.4h1.1v1.1h-1.1zM879.7 197.7h1.4v1.4h-1.4zM879.6 195.9h1.4v1.4h-1.4zM882.5 201.5h1.2v1.2h-1.2zM875.2 196.0h1.1v1.1h-1.1zM875.0 204.1h1.3v1.3h-1.3zM880.9 202.8h0.9v0.9h-0.9zM878.2 207.0h1.0v1.0h-1.0zM878.4 202.7h1.0v1.0h-1.0zM881.3 206.8h1.3v1.3h-1.3zM877.6 204.3h1.1v1.1h-1.1zM869.4 198.6h0.8v0.8h-0.8zM879.0 204.6h1.0v1.0h-1.0zM877.6 209.3h1.2v1.2h-1.2zM877.4 205.5h1.0v1.0h-1.0zM880.2 209.0h1.0v1.0h-1.0zM870.0 200.8h1.1v1.1h-1.1zM876.5 211.3h1.4v1.4h-1.4zM874.2 207.2h1.5v1.5h-1.5zM874.2 203.3h0.8v0.8h-0.8zM883.8 200.7h1.1v1.1h-1.1zM872.3 202.2h1.0v1.0h-1.0zM882.8 202.6h1.0v1.0h-1.0zM881.5 203.3h1.1v1.1h-1.1zM878.8 196.9h1.2v1.2h-1.2zM878.3 205.0h1.0v1.0h-1.0zM876.5 211.1h1.2v1.2h-1.2zM868.8 193.4h1.0v1.0h-1.0zM874.8 202.5h1.3v1.3h-1.3zM884.4 203.1h1.4v1.4h-1.4zM877.7 201.5h1.0v1.0h-1.0zM876.6 201.2h1.1v1.1h-1.1zM867.2 205.0h1.2v1.2h-1.2zM879.1 200.3h1.4v1.4h-1.4zM869.3 207.4h0.9v0.9h-0.9zM878.3 200.6h1.2v1.2h-1.2zM874.7 202.6h1.4v1.4h-1.4zM875.7 206.2h0.9v0.9h-0.9zM875.5 207.2h1.3v1.3h-1.3zM873.1 207.7h0.9v0.9h-0.9zM873.5 205.7h1.5v1.5h-1.5zM879.8 197.9h0.8v0.8h-0.8zM872.5 207.4h1.0v1.0h-1.0zM872.9 201.3h0.8v0.8h-0.8zM884.2 202.6h0.9v0.9h-0.9zM874.5 200.8h1.1v1.1h-1.1zM873.7 202.2h1.0v1.0h-1.0zM872.4 206.7h1.0v1.0h-1.0zM879.0 209.2h1.0v1.0h-1.0zM881.8 201.3h1.3v1.3h-1.3zM873.3 209.5h0.9v0.9h-0.9zM878.1 204.4h1.3v1.3h-1.3zM876.3 200.6h1.1v1.1h-1.1zM879.8 198.4h0.9v0.9h-0.9zM877.3 205.3h0.9v0.9h-0.9zM875.7 203.9h1.4v1.4h-1.4zM872.7 205.1h1.3v1.3h-1.3zM877.8 195.6h1.1v1.1h-1.1zM875.0 206.6h0.8v0.8h-0.8zM872.0 206.6h1.5v1.5h-1.5zM878.4 197.3h1.2v1.2h-1.2zM880.6 203.4h1.0v1.0h-1.0zM875.9 201.5h1.1v1.1h-1.1zM870.0 202.6h1.4v1.4h-1.4zM875.2 201.5h1.3v1.3h-1.3zM881.1 200.1h1.0v1.0h-1.0zM874.8 203.0h1.3v1.3h-1.3zM881.8 202.6h1.3v1.3h-1.3zM878.4 200.7h1.5v1.5h-1.5zM875.1 201.1h0.9v0.9h-0.9zM877.2 208.2h1.3v1.3h-1.3zM872.6 211.1h1.1v1.1h-1.1zM875.0 203.5h1.5v1.5h-1.5zM882.7 209.5h1.2v1.2h-1.2zM872.2 201.1h1.0v1.0h-1.0zM887.5 196.3h1.4v1.4h-1.4zM875.4 201.8h1.4v1.4h-1.4zM875.0 211.3h1.0v1.0h-1.0zM870.3 199.6h0.9v0.9h-0.9zM875.5 202.5h0.8v0.8h-0.8zM882.0 213.7h1.5v1.5h-1.5zM875.1 200.1h1.3v1.3h-1.3zM876.7 199.1h1.2v1.2h-1.2zM877.2 202.3h0.9v0.9h-0.9zM874.8 203.4h1.1v1.1h-1.1zM874.8 202.0h1.2v1.2h-1.2zM876.6 208.2h1.0v1.0h-1.0zM876.3 202.1h1.3v1.3h-1.3zM883.2 211.0h1.2v1.2h-1.2zM873.0 203.8h1.2v1.2h-1.2zM874.5 196.7h1.3v1.3h-1.3zM864.1 204.2h1.4v1.4h-1.4zM879.5 199.8h1.1v1.1h-1.1zM869.1 199.5h1.2v1.2h-1.2zM872.8 202.3h1.4v1.4h-1.4zM876.4 204.2h1.3v1.3h-1.3zM882.3 199.2h1.2v1.2h-1.2zM877.0 199.6h1.2v1.2h-1.2zM878.9 203.9h1.1v1.1h-1.1zM873.0 202.9h0.8v0.8h-0.8zM875.3 198.4h1.0v1.0h-1.0zM875.6 206.8h1.0v1.0h-1.0zM885.0 206.7h1.5v1.5h-1.5zM872.9 196.1h1.1v1.1h-1.1zM878.0 200.3h1.3v1.3h-1.3zM869.1 199.5h0.9v0.9h-0.9zM877.5 201.0h1.2v1.2h-1.2zM877.1 203.0h1.0v1.0h-1.0zM875.9 206.4h0.8v0.8h-0.8zM882.8 198.5h1.1v1.1h-1.1zM873.7 207.2h0.8v0.8h-0.8zM885.4 204.7h1.0v1.0h-1.0zM867.7 203.1h1.5v1.5h-1.5zM874.3 203.5h1.0v1.0h-1.0zM884.5 199.0h0.9v0.9h-0.9zM879.0 199.8h1.1v1.1h-1.1zM880.9 210.3h1.5v1.5h-1.5zM878.7 208.4h0.9v0.9h-0.9zM877.9 202.1h0.9v0.9h-0.9zM876.5 199.6h1.4v1.4h-1.4zM881.3 198.4h0.9v0.9h-0.9zM873.9 194.1h1.1v1.1h-1.1zM879.5 204.4h1.0v1.0h-1.0zM876.4 200.4h0.9v0.9h-0.9zM877.5 208.9h1.4v1.4h-1.4zM872.9 207.2h1.4v1.4h-1.4zM874.6 201.5h1.0v1.0h-1.0zM882.3 200.4h1.0v1.0h-1.0zM875.9 201.7h1.5v1.5h-1.5zM872.4 204.8h1.2v1.2h-1.2zM882.2 204.5h1.0v1.0h-1.0zM877.0 210.2h0.9v0.9h-0.9zM875.5 209.6h1.0v1.0h-1.0zM876.1 208.0h0.9v0.9h-0.9zM886.5 195.8h0.8v0.8h-0.8zM870.5 204.6h1.1v1.1h-1.1zM881.3 201.0h0.9v0.9h-0.9z"/>
<rect x="888.5" y="215.0" width="5" height="5" fill="#ff7a7a" opacity=".55"/><path d="M887.8,216.5 H893.2 M890.5,213.8 V219.2" stroke="#000" stroke-width="1.5"/>
<path fill="#000" opacity="1.0" d="M904.5 201.5h0.9v0.9h-0.9zM906.4 198.6h1.0v1.0h-1.0zM901.7 202.8h1.1v1.1h-1.1zM899.3 202.1h0.8v0.8h-0.8zM911.5 201.2h1.1v1.1h-1.1zM911.5 206.2h1.2v1.2h-1.2zM912.9 197.8h0.8v0.8h-0.8zM907.6 203.1h1.0v1.0h-1.0zM909.7 203.0h1.1v1.1h-1.1zM909.6 199.2h1.2v1.2h-1.2zM912.2 204.6h0.7v0.7h-0.7zM905.9 203.1h1.0v1.0h-1.0zM910.3 208.4h0.7v0.7h-0.7zM916.2 200.9h1.0v1.0h-1.0zM911.9 200.9h0.8v0.8h-0.8zM910.5 203.8h0.9v0.9h-0.9zM906.8 200.5h0.9v0.9h-0.9zM909.2 202.3h1.2v1.2h-1.2zM912.7 205.0h0.8v0.8h-0.8zM907.7 197.7h1.2v1.2h-1.2zM915.6 204.2h0.9v0.9h-0.9zM913.7 210.8h0.7v0.7h-0.7zM902.9 203.3h1.3v1.3h-1.3zM914.3 205.6h1.1v1.1h-1.1zM914.5 203.5h1.2v1.2h-1.2zM914.0 205.3h0.9v0.9h-0.9zM909.3 203.5h0.7v0.7h-0.7zM919.1 202.9h1.1v1.1h-1.1zM911.5 205.3h1.0v1.0h-1.0zM911.3 206.3h1.3v1.3h-1.3zM908.1 205.1h1.3v1.3h-1.3zM910.0 202.5h0.9v0.9h-0.9zM910.0 202.2h0.9v0.9h-0.9zM907.7 197.4h1.1v1.1h-1.1zM915.0 200.8h0.9v0.9h-0.9zM913.6 200.5h1.2v1.2h-1.2zM912.0 205.7h0.8v0.8h-0.8zM908.3 202.5h0.8v0.8h-0.8zM912.2 206.3h0.9v0.9h-0.9zM896.6 206.1h1.1v1.1h-1.1zM913.1 201.5h0.9v0.9h-0.9zM917.6 205.0h0.9v0.9h-0.9zM910.9 203.6h0.8v0.8h-0.8zM910.6 206.0h1.3v1.3h-1.3zM910.2 200.7h0.9v0.9h-0.9zM917.4 208.8h0.9v0.9h-0.9zM911.8 198.2h1.2v1.2h-1.2zM915.2 203.3h0.9v0.9h-0.9zM919.6 206.1h0.9v0.9h-0.9zM911.8 199.4h0.7v0.7h-0.7zM908.2 204.4h0.7v0.7h-0.7zM914.8 206.3h0.7v0.7h-0.7zM909.1 205.9h1.0v1.0h-1.0zM915.9 206.5h0.9v0.9h-0.9zM909.9 198.6h0.8v0.8h-0.8zM912.1 205.3h1.1v1.1h-1.1zM907.1 204.7h1.2v1.2h-1.2zM911.6 205.5h0.9v0.9h-0.9zM911.3 203.8h0.7v0.7h-0.7zM906.8 200.2h1.2v1.2h-1.2zM915.0 202.6h1.1v1.1h-1.1zM913.9 202.0h1.1v1.1h-1.1zM905.0 196.5h1.2v1.2h-1.2zM911.7 207.2h0.8v0.8h-0.8zM906.7 204.3h0.7v0.7h-0.7zM907.8 204.8h1.0v1.0h-1.0zM910.5 204.7h0.9v0.9h-0.9zM908.1 203.3h1.1v1.1h-1.1zM911.1 204.3h0.9v0.9h-0.9zM908.6 203.8h1.0v1.0h-1.0zM909.2 199.4h1.1v1.1h-1.1zM915.7 203.4h0.9v0.9h-0.9zM915.5 204.2h0.7v0.7h-0.7zM904.6 203.1h1.0v1.0h-1.0zM909.3 205.0h0.7v0.7h-0.7zM905.2 208.2h1.0v1.0h-1.0zM910.5 207.4h0.8v0.8h-0.8zM904.5 203.8h1.3v1.3h-1.3zM906.9 206.0h1.3v1.3h-1.3zM911.9 198.8h1.1v1.1h-1.1zM906.8 204.7h0.9v0.9h-0.9zM915.7 197.6h0.9v0.9h-0.9zM912.1 202.6h0.8v0.8h-0.8zM906.9 202.9h0.9v0.9h-0.9zM913.7 202.8h0.8v0.8h-0.8zM912.0 207.5h0.8v0.8h-0.8zM917.0 203.0h0.9v0.9h-0.9zM911.4 206.5h1.1v1.1h-1.1zM904.6 201.7h1.0v1.0h-1.0zM917.2 196.1h0.9v0.9h-0.9zM905.3 208.1h0.9v0.9h-0.9zM909.4 198.5h1.1v1.1h-1.1zM919.7 201.7h0.8v0.8h-0.8zM907.0 200.6h1.0v1.0h-1.0zM908.3 204.8h1.1v1.1h-1.1zM907.5 202.5h0.8v0.8h-0.8zM909.6 204.7h1.0v1.0h-1.0zM912.2 203.8h0.7v0.7h-0.7zM917.0 205.8h0.8v0.8h-0.8zM903.1 204.5h1.0v1.0h-1.0zM916.0 208.1h1.2v1.2h-1.2zM914.5 203.8h1.0v1.0h-1.0zM912.4 200.1h1.1v1.1h-1.1zM910.9 207.8h0.9v0.9h-0.9zM906.9 207.4h1.2v1.2h-1.2zM913.9 199.6h1.0v1.0h-1.0zM909.2 199.0h1.2v1.2h-1.2zM911.8 201.5h0.9v0.9h-0.9zM909.3 201.1h0.8v0.8h-0.8zM917.3 203.3h1.3v1.3h-1.3zM913.5 202.7h1.1v1.1h-1.1zM905.1 205.1h0.9v0.9h-0.9zM924.1 199.3h0.7v0.7h-0.7zM910.4 201.5h0.7v0.7h-0.7zM909.3 207.7h1.3v1.3h-1.3zM914.1 204.8h0.7v0.7h-0.7zM905.7 202.1h0.9v0.9h-0.9zM907.9 208.0h1.2v1.2h-1.2zM910.0 205.9h1.1v1.1h-1.1zM912.3 194.6h0.9v0.9h-0.9zM908.9 199.5h1.2v1.2h-1.2zM912.8 204.5h0.8v0.8h-0.8zM914.3 202.1h1.0v1.0h-1.0zM914.1 204.8h0.7v0.7h-0.7zM908.6 202.3h1.1v1.1h-1.1zM910.5 205.1h1.0v1.0h-1.0zM908.5 204.7h0.7v0.7h-0.7zM920.3 205.5h0.9v0.9h-0.9zM913.7 203.9h1.0v1.0h-1.0zM914.2 203.0h1.2v1.2h-1.2zM906.1 203.3h1.2v1.2h-1.2zM909.7 203.6h1.0v1.0h-1.0zM907.3 199.5h0.9v0.9h-0.9zM919.9 200.8h1.3v1.3h-1.3zM902.5 205.0h1.1v1.1h-1.1zM911.5 203.6h0.8v0.8h-0.8zM912.4 203.8h0.9v0.9h-0.9zM911.1 200.4h1.0v1.0h-1.0zM914.3 203.1h1.3v1.3h-1.3zM916.9 203.3h1.2v1.2h-1.2zM913.1 198.3h0.9v0.9h-0.9zM913.9 197.7h1.2v1.2h-1.2zM913.2 202.9h1.3v1.3h-1.3zM904.9 205.7h0.9v0.9h-0.9zM911.9 202.6h1.0v1.0h-1.0zM911.7 205.9h0.9v0.9h-0.9zM906.2 198.4h0.9v0.9h-0.9zM908.1 200.9h0.9v0.9h-0.9zM914.5 201.5h0.8v0.8h-0.8zM907.0 207.3h0.8v0.8h-0.8zM910.7 199.2h1.1v1.1h-1.1zM912.0 204.3h0.8v0.8h-0.8zM908.0 205.6h0.7v0.7h-0.7zM906.1 203.0h0.9v0.9h-0.9zM899.5 201.3h0.8v0.8h-0.8zM914.1 201.2h1.2v1.2h-1.2zM922.0 208.6h1.0v1.0h-1.0zM914.3 202.5h0.9v0.9h-0.9zM910.2 201.2h0.9v0.9h-0.9zM905.9 196.5h0.9v0.9h-0.9zM912.8 205.6h1.3v1.3h-1.3zM915.1 206.4h0.9v0.9h-0.9zM908.9 201.4h1.1v1.1h-1.1zM918.2 199.2h1.1v1.1h-1.1zM904.8 202.9h0.8v0.8h-0.8zM914.8 199.1h1.0v1.0h-1.0zM908.5 200.3h0.9v0.9h-0.9zM911.8 207.0h1.0v1.0h-1.0zM909.8 202.9h1.1v1.1h-1.1zM904.9 204.3h1.1v1.1h-1.1zM913.5 202.3h1.0v1.0h-1.0zM918.8 202.8h0.9v0.9h-0.9zM909.8 194.0h0.9v0.9h-0.9zM912.7 201.8h1.3v1.3h-1.3zM907.5 203.1h1.2v1.2h-1.2zM904.3 197.3h1.2v1.2h-1.2zM912.7 199.6h1.3v1.3h-1.3zM919.9 205.4h1.1v1.1h-1.1zM911.0 208.4h1.0v1.0h-1.0zM901.6 201.6h0.8v0.8h-0.8zM909.7 207.2h0.7v0.7h-0.7zM903.1 201.2h1.0v1.0h-1.0zM911.4 208.4h1.2v1.2h-1.2zM911.8 199.2h1.2v1.2h-1.2zM911.8 201.4h0.9v0.9h-0.9zM912.1 203.5h0.9v0.9h-0.9zM917.0 198.7h0.8v0.8h-0.8zM913.0 205.7h1.2v1.2h-1.2zM903.3 198.7h0.7v0.7h-0.7zM914.3 202.8h1.1v1.1h-1.1zM916.5 199.6h0.8v0.8h-0.8zM908.5 200.2h0.7v0.7h-0.7zM908.8 205.2h1.1v1.1h-1.1zM909.8 207.0h1.1v1.1h-1.1zM912.1 204.4h1.1v1.1h-1.1zM908.5 203.3h0.8v0.8h-0.8zM917.1 201.5h0.9v0.9h-0.9zM916.2 212.2h1.1v1.1h-1.1zM910.6 200.2h0.9v0.9h-0.9zM908.7 203.9h1.1v1.1h-1.1zM903.1 205.5h0.9v0.9h-0.9zM905.5 204.0h1.3v1.3h-1.3zM906.7 206.8h0.8v0.8h-0.8zM907.5 201.8h1.2v1.2h-1.2zM908.9 208.7h1.1v1.1h-1.1zM900.3 205.0h0.9v0.9h-0.9zM910.7 198.9h1.0v1.0h-1.0zM915.6 204.2h0.9v0.9h-0.9zM899.9 205.7h0.9v0.9h-0.9zM908.6 198.8h0.8v0.8h-0.8zM908.8 203.8h1.2v1.2h-1.2zM910.9 206.1h0.9v0.9h-0.9zM915.0 197.7h1.1v1.1h-1.1zM908.9 202.6h1.2v1.2h-1.2zM914.9 204.5h0.9v0.9h-0.9zM909.8 198.6h0.9v0.9h-0.9zM920.4 198.6h0.7v0.7h-0.7zM907.4 200.5h0.9v0.9h-0.9zM906.9 203.6h1.1v1.1h-1.1zM901.0 198.1h1.3v1.3h-1.3zM915.8 202.9h1.2v1.2h-1.2zM906.6 199.2h1.3v1.3h-1.3zM915.9 204.4h0.9v0.9h-0.9zM909.1 201.3h1.3v1.3h-1.3zM912.2 205.8h0.8v0.8h-0.8zM904.8 206.0h0.8v0.8h-0.8zM914.5 206.8h1.1v1.1h-1.1zM910.8 200.7h1.2v1.2h-1.2zM910.0 197.8h0.8v0.8h-0.8zM910.2 203.1h1.2v1.2h-1.2zM920.6 200.8h0.7v0.7h-0.7zM907.5 206.0h1.0v1.0h-1.0zM917.5 206.4h0.9v0.9h-0.9zM908.5 202.9h1.0v1.0h-1.0zM912.4 203.9h1.0v1.0h-1.0zM908.7 208.0h0.8v0.8h-0.8zM909.6 203.5h0.8v0.8h-0.8zM905.1 204.1h1.0v1.0h-1.0zM912.3 201.9h1.2v1.2h-1.2zM918.2 209.6h1.0v1.0h-1.0zM905.5 205.3h1.2v1.2h-1.2zM915.8 202.3h0.7v0.7h-0.7zM916.0 207.6h1.1v1.1h-1.1zM910.3 201.3h1.0v1.0h-1.0zM913.3 203.3h0.9v0.9h-0.9zM917.7 202.1h1.2v1.2h-1.2zM915.8 203.9h0.7v0.7h-0.7zM910.8 204.5h1.3v1.3h-1.3zM908.4 206.1h1.1v1.1h-1.1zM919.8 198.3h1.0v1.0h-1.0zM900.6 203.0h0.9v0.9h-0.9zM908.6 207.7h0.9v0.9h-0.9zM907.6 205.3h1.0v1.0h-1.0zM907.8 205.5h1.0v1.0h-1.0zM919.7 204.7h0.7v0.7h-0.7zM905.0 202.3h0.9v0.9h-0.9zM911.4 204.4h0.9v0.9h-0.9zM908.8 206.2h0.8v0.8h-0.8zM911.0 199.5h0.7v0.7h-0.7zM900.6 207.3h0.7v0.7h-0.7zM900.8 198.8h0.9v0.9h-0.9zM907.2 201.3h0.9v0.9h-0.9zM906.0 200.5h0.9v0.9h-0.9zM905.2 203.1h1.2v1.2h-1.2zM913.0 203.4h0.9v0.9h-0.9zM909.9 208.3h1.0v1.0h-1.0zM914.1 200.7h0.9v0.9h-0.9zM910.1 201.9h1.3v1.3h-1.3zM913.1 200.7h0.9v0.9h-0.9zM914.6 198.2h1.1v1.1h-1.1zM918.6 204.8h0.7v0.7h-0.7zM906.7 200.3h1.3v1.3h-1.3zM910.3 202.5h1.3v1.3h-1.3zM911.1 199.0h0.7v0.7h-0.7zM910.6 199.9h1.1v1.1h-1.1zM921.6 202.3h0.7v0.7h-0.7zM912.0 199.8h1.2v1.2h-1.2zM907.2 205.3h1.0v1.0h-1.0zM914.1 204.8h1.1v1.1h-1.1zM913.1 203.6h1.2v1.2h-1.2zM908.0 199.7h0.8v0.8h-0.8zM914.0 204.8h1.3v1.3h-1.3zM900.9 200.5h0.8v0.8h-0.8zM905.9 204.9h1.2v1.2h-1.2zM918.0 207.3h1.0v1.0h-1.0zM916.0 203.6h0.9v0.9h-0.9zM906.0 196.9h1.0v1.0h-1.0zM909.2 200.2h1.2v1.2h-1.2zM917.2 206.0h0.8v0.8h-0.8zM908.2 202.0h0.9v0.9h-0.9zM913.3 205.4h1.1v1.1h-1.1zM906.3 202.6h1.0v1.0h-1.0zM913.5 200.6h1.1v1.1h-1.1zM897.6 204.0h0.9v0.9h-0.9zM909.9 200.9h0.9v0.9h-0.9zM910.2 199.1h0.9v0.9h-0.9zM919.2 205.2h0.9v0.9h-0.9zM909.9 199.9h1.1v1.1h-1.1zM898.8 200.0h1.2v1.2h-1.2zM905.7 204.0h0.8v0.8h-0.8z"/>
<rect x="922.5" y="215.0" width="5" height="5" fill="#ff7a7a" opacity=".55"/><path d="M921.8,216.5 H927.2 M924.5,213.8 V219.2" stroke="#000" stroke-width="1.5"/>
<path fill="#000" opacity="1.0" d="M945.0 199.6h0.8v0.8h-0.8zM945.5 200.9h1.0v1.0h-1.0zM941.3 199.3h0.8v0.8h-0.8zM949.6 212.4h1.1v1.1h-1.1zM945.5 199.8h1.1v1.1h-1.1zM945.4 205.4h0.9v0.9h-0.9zM943.7 200.3h1.1v1.1h-1.1zM939.0 196.5h1.2v1.2h-1.2zM943.9 197.4h1.2v1.2h-1.2zM944.5 197.8h1.1v1.1h-1.1zM944.6 198.0h0.7v0.7h-0.7zM948.9 202.8h0.8v0.8h-0.8zM944.3 205.8h0.7v0.7h-0.7zM942.5 202.4h0.8v0.8h-0.8zM944.3 208.1h1.1v1.1h-1.1zM948.4 210.7h1.1v1.1h-1.1zM941.9 197.9h1.0v1.0h-1.0zM940.4 200.4h1.2v1.2h-1.2zM945.4 198.0h0.6v0.6h-0.6zM947.8 200.1h1.1v1.1h-1.1zM945.4 207.7h0.8v0.8h-0.8zM944.0 189.6h0.9v0.9h-0.9zM942.3 200.1h0.7v0.7h-0.7zM946.5 201.2h1.2v1.2h-1.2zM944.3 200.3h1.1v1.1h-1.1zM948.3 206.0h0.7v0.7h-0.7zM947.7 201.7h1.1v1.1h-1.1zM949.4 204.9h0.6v0.6h-0.6zM949.1 203.3h1.2v1.2h-1.2zM942.5 192.6h1.1v1.1h-1.1zM943.7 201.7h0.9v0.9h-0.9zM946.6 207.8h0.8v0.8h-0.8zM942.9 202.0h1.0v1.0h-1.0zM941.8 205.0h0.6v0.6h-0.6zM940.9 202.5h1.2v1.2h-1.2zM943.4 200.9h0.8v0.8h-0.8zM942.4 208.9h1.2v1.2h-1.2zM952.7 200.1h1.2v1.2h-1.2zM949.7 192.6h0.6v0.6h-0.6zM940.7 202.4h1.0v1.0h-1.0zM941.7 197.3h1.2v1.2h-1.2zM948.3 205.3h1.2v1.2h-1.2zM946.5 202.5h1.1v1.1h-1.1zM945.7 201.7h0.6v0.6h-0.6zM947.3 195.0h0.9v0.9h-0.9zM940.3 197.8h1.1v1.1h-1.1zM946.2 202.0h1.1v1.1h-1.1zM951.0 200.5h0.8v0.8h-0.8zM943.5 206.1h0.6v0.6h-0.6zM945.3 198.0h1.0v1.0h-1.0zM942.1 201.2h1.0v1.0h-1.0zM942.8 203.1h1.1v1.1h-1.1zM945.8 204.6h0.8v0.8h-0.8zM939.4 203.2h0.8v0.8h-0.8zM945.3 209.6h0.8v0.8h-0.8zM942.6 201.4h1.1v1.1h-1.1zM945.9 205.5h0.8v0.8h-0.8zM942.5 209.3h1.0v1.0h-1.0zM946.0 195.7h0.6v0.6h-0.6zM945.2 198.1h0.7v0.7h-0.7zM936.7 210.1h0.8v0.8h-0.8zM940.6 211.0h1.2v1.2h-1.2zM943.7 203.8h1.1v1.1h-1.1zM945.6 197.4h1.1v1.1h-1.1zM943.1 204.9h1.0v1.0h-1.0zM944.8 196.1h1.1v1.1h-1.1zM948.7 202.5h0.8v0.8h-0.8zM951.5 206.6h0.7v0.7h-0.7zM946.8 212.3h1.2v1.2h-1.2zM947.7 200.0h1.2v1.2h-1.2zM948.2 208.4h1.2v1.2h-1.2zM945.6 204.6h1.0v1.0h-1.0zM948.8 196.4h1.2v1.2h-1.2zM942.0 203.4h0.7v0.7h-0.7zM943.9 214.2h0.6v0.6h-0.6zM946.2 206.4h0.6v0.6h-0.6zM944.3 205.1h0.7v0.7h-0.7zM941.1 200.9h0.9v0.9h-0.9zM945.3 195.7h1.2v1.2h-1.2zM947.0 203.8h0.6v0.6h-0.6zM943.0 210.2h1.2v1.2h-1.2zM943.1 201.9h0.8v0.8h-0.8zM942.6 200.2h1.1v1.1h-1.1zM948.5 201.0h1.0v1.0h-1.0zM947.0 197.2h0.7v0.7h-0.7zM953.3 197.1h0.6v0.6h-0.6zM945.3 196.8h0.6v0.6h-0.6zM946.0 204.7h1.0v1.0h-1.0zM945.2 203.0h0.7v0.7h-0.7zM946.1 196.2h1.0v1.0h-1.0zM943.0 202.7h0.6v0.6h-0.6zM944.7 203.4h0.8v0.8h-0.8zM942.7 198.6h0.9v0.9h-0.9zM943.0 198.8h0.8v0.8h-0.8zM948.1 197.4h0.9v0.9h-0.9zM941.6 200.6h0.8v0.8h-0.8zM947.0 200.0h1.2v1.2h-1.2zM949.0 193.4h0.7v0.7h-0.7zM935.8 201.2h0.8v0.8h-0.8zM947.4 209.3h0.7v0.7h-0.7zM943.4 200.5h1.2v1.2h-1.2zM944.7 204.3h1.0v1.0h-1.0zM942.7 207.5h0.9v0.9h-0.9zM948.4 199.1h0.8v0.8h-0.8zM948.7 202.1h0.8v0.8h-0.8zM941.0 198.7h0.9v0.9h-0.9zM948.2 205.3h0.9v0.9h-0.9zM939.6 191.3h0.8v0.8h-0.8zM943.7 202.8h1.1v1.1h-1.1zM945.6 211.7h1.1v1.1h-1.1zM944.8 213.2h0.9v0.9h-0.9zM941.4 205.0h1.2v1.2h-1.2zM941.3 202.4h0.8v0.8h-0.8zM947.1 196.8h0.8v0.8h-0.8zM945.7 205.4h1.1v1.1h-1.1zM947.9 188.4h1.2v1.2h-1.2zM942.7 193.5h1.0v1.0h-1.0zM947.1 193.3h0.7v0.7h-0.7zM946.1 197.9h0.7v0.7h-0.7zM945.6 201.5h0.9v0.9h-0.9zM941.9 209.7h1.0v1.0h-1.0zM951.3 195.6h1.0v1.0h-1.0zM949.4 205.0h0.7v0.7h-0.7zM951.4 200.8h0.8v0.8h-0.8zM946.9 209.4h1.1v1.1h-1.1zM949.4 201.3h0.7v0.7h-0.7zM944.8 200.2h1.1v1.1h-1.1zM945.7 192.9h1.1v1.1h-1.1zM938.0 196.8h1.0v1.0h-1.0zM941.9 202.3h0.8v0.8h-0.8zM946.9 202.4h1.1v1.1h-1.1zM945.6 209.5h1.1v1.1h-1.1zM943.7 196.1h0.8v0.8h-0.8zM944.7 205.3h1.0v1.0h-1.0zM942.0 190.6h0.8v0.8h-0.8zM951.3 196.9h0.8v0.8h-0.8zM949.2 199.9h1.2v1.2h-1.2zM945.4 197.4h0.8v0.8h-0.8zM941.3 201.2h0.6v0.6h-0.6zM947.6 197.1h0.9v0.9h-0.9zM944.9 198.1h0.7v0.7h-0.7zM942.9 200.1h0.8v0.8h-0.8zM945.9 202.7h0.8v0.8h-0.8zM937.3 199.9h1.0v1.0h-1.0zM942.2 204.7h0.7v0.7h-0.7zM937.0 204.1h0.7v0.7h-0.7zM940.6 205.2h1.1v1.1h-1.1zM940.7 199.5h1.2v1.2h-1.2zM947.0 199.7h0.9v0.9h-0.9zM948.9 201.9h0.7v0.7h-0.7zM945.1 200.2h0.7v0.7h-0.7zM942.6 200.7h1.0v1.0h-1.0zM944.6 197.5h1.1v1.1h-1.1zM942.0 195.5h0.9v0.9h-0.9zM943.6 203.0h0.9v0.9h-0.9zM951.4 198.9h0.6v0.6h-0.6zM947.3 203.8h1.0v1.0h-1.0zM943.5 203.0h0.9v0.9h-0.9zM940.3 198.2h0.8v0.8h-0.8zM942.1 195.6h1.0v1.0h-1.0zM949.8 204.4h0.7v0.7h-0.7zM948.4 204.0h0.6v0.6h-0.6zM947.9 204.3h0.9v0.9h-0.9zM951.2 209.9h1.1v1.1h-1.1zM940.8 202.6h0.8v0.8h-0.8zM946.6 201.7h0.8v0.8h-0.8zM946.2 212.2h0.9v0.9h-0.9zM942.3 204.8h1.1v1.1h-1.1zM944.7 211.2h1.0v1.0h-1.0zM942.1 203.6h0.9v0.9h-0.9zM942.3 203.3h1.0v1.0h-1.0zM942.7 204.3h1.1v1.1h-1.1zM941.5 203.6h1.1v1.1h-1.1zM942.0 203.4h1.1v1.1h-1.1zM950.6 200.7h0.8v0.8h-0.8zM942.5 194.5h0.8v0.8h-0.8zM943.7 189.5h1.0v1.0h-1.0zM943.3 197.2h1.0v1.0h-1.0zM945.8 210.8h0.9v0.9h-0.9zM947.9 201.4h1.0v1.0h-1.0zM948.3 202.6h1.1v1.1h-1.1zM944.7 209.2h0.7v0.7h-0.7zM936.8 211.9h0.7v0.7h-0.7zM946.0 201.0h0.9v0.9h-0.9zM947.6 193.1h0.8v0.8h-0.8zM940.7 197.6h1.1v1.1h-1.1zM944.9 195.2h0.8v0.8h-0.8zM943.9 195.6h0.9v0.9h-0.9zM946.7 201.8h1.1v1.1h-1.1zM942.7 209.5h1.2v1.2h-1.2zM944.4 208.7h0.9v0.9h-0.9zM943.1 202.1h1.0v1.0h-1.0zM948.7 197.2h0.8v0.8h-0.8zM946.2 196.9h0.7v0.7h-0.7zM942.2 198.4h0.9v0.9h-0.9zM949.1 201.6h1.2v1.2h-1.2zM941.8 209.0h0.6v0.6h-0.6zM943.5 209.6h1.0v1.0h-1.0zM946.5 197.5h0.8v0.8h-0.8zM942.5 207.0h0.6v0.6h-0.6zM941.7 207.4h0.7v0.7h-0.7zM942.6 211.8h1.2v1.2h-1.2zM945.0 205.3h0.7v0.7h-0.7zM949.9 206.7h1.0v1.0h-1.0zM944.7 208.0h1.0v1.0h-1.0zM950.8 203.7h1.1v1.1h-1.1zM946.2 209.9h1.0v1.0h-1.0zM941.6 211.1h0.7v0.7h-0.7zM942.3 202.7h0.9v0.9h-0.9zM946.6 195.8h1.0v1.0h-1.0zM947.3 201.7h0.7v0.7h-0.7zM943.7 200.0h1.2v1.2h-1.2zM943.1 206.7h0.9v0.9h-0.9zM948.3 191.8h1.0v1.0h-1.0zM946.4 206.3h1.0v1.0h-1.0zM946.4 212.5h1.1v1.1h-1.1zM945.4 206.9h0.7v0.7h-0.7zM944.8 200.4h1.0v1.0h-1.0zM950.7 205.8h0.9v0.9h-0.9zM943.8 200.8h0.6v0.6h-0.6zM939.4 214.0h1.0v1.0h-1.0zM945.7 200.6h0.7v0.7h-0.7zM949.9 203.1h0.7v0.7h-0.7zM944.3 209.6h1.0v1.0h-1.0zM943.4 207.2h0.8v0.8h-0.8zM942.2 200.2h0.8v0.8h-0.8zM945.0 206.3h0.8v0.8h-0.8zM947.7 202.5h1.0v1.0h-1.0zM944.8 204.5h1.1v1.1h-1.1zM941.2 203.2h0.8v0.8h-0.8zM949.1 196.3h1.0v1.0h-1.0zM942.4 195.3h0.9v0.9h-0.9zM942.3 204.7h0.9v0.9h-0.9zM941.1 203.3h0.9v0.9h-0.9zM946.6 191.3h0.7v0.7h-0.7zM947.7 202.6h0.6v0.6h-0.6zM946.3 195.1h0.8v0.8h-0.8zM947.3 211.8h1.1v1.1h-1.1zM943.0 194.7h1.0v1.0h-1.0zM941.9 203.5h0.9v0.9h-0.9zM952.2 191.1h1.2v1.2h-1.2zM945.6 200.2h0.7v0.7h-0.7zM948.9 200.8h0.9v0.9h-0.9zM942.7 211.6h0.9v0.9h-0.9zM946.3 201.9h1.2v1.2h-1.2zM946.8 202.2h0.8v0.8h-0.8zM944.0 200.1h0.9v0.9h-0.9zM948.2 199.9h1.1v1.1h-1.1zM941.5 198.2h0.7v0.7h-0.7zM938.3 204.5h1.0v1.0h-1.0zM945.7 207.5h0.9v0.9h-0.9zM942.8 207.8h1.0v1.0h-1.0zM947.2 202.4h1.0v1.0h-1.0zM945.3 204.0h1.1v1.1h-1.1zM941.0 213.3h0.9v0.9h-0.9zM948.7 206.4h0.8v0.8h-0.8zM947.0 194.3h1.1v1.1h-1.1zM945.8 202.5h1.1v1.1h-1.1zM946.4 204.7h0.6v0.6h-0.6zM946.9 207.0h1.2v1.2h-1.2z"/>
<rect x="956.5" y="215.0" width="5" height="5" fill="#ff7a7a" opacity=".55"/><path d="M955.8,216.5 H961.2 M958.5,213.8 V219.2" stroke="#000" stroke-width="1.5"/>
<path fill="#000" opacity="0.55" d="M977.6 204.9h0.9v0.9h-0.9zM981.4 207.5h0.8v0.8h-0.8zM980.2 201.5h0.8v0.8h-0.8zM973.2 207.3h0.7v0.7h-0.7zM978.4 199.4h0.8v0.8h-0.8zM982.0 201.4h0.7v0.7h-0.7zM984.5 198.9h0.6v0.6h-0.6zM980.2 204.8h0.7v0.7h-0.7zM982.7 196.6h1.0v1.0h-1.0zM976.1 196.8h0.8v0.8h-0.8zM978.0 197.2h0.6v0.6h-0.6zM974.9 202.2h0.8v0.8h-0.8zM980.0 202.3h1.0v1.0h-1.0zM976.4 204.7h0.7v0.7h-0.7zM971.2 196.9h0.7v0.7h-0.7zM974.1 202.0h0.9v0.9h-0.9zM976.2 200.8h0.7v0.7h-0.7zM978.7 200.3h0.9v0.9h-0.9zM981.7 202.6h0.8v0.8h-0.8zM982.3 197.1h0.9v0.9h-0.9zM979.5 195.3h0.6v0.6h-0.6zM980.1 199.9h0.7v0.7h-0.7zM980.0 202.2h1.0v1.0h-1.0zM977.7 203.2h0.6v0.6h-0.6zM982.2 197.3h1.0v1.0h-1.0zM981.0 202.5h0.7v0.7h-0.7zM979.7 203.9h0.7v0.7h-0.7zM977.4 200.0h0.7v0.7h-0.7zM975.0 201.1h0.7v0.7h-0.7zM974.4 199.9h0.8v0.8h-0.8zM977.8 202.2h0.8v0.8h-0.8zM980.3 205.6h0.6v0.6h-0.6zM983.3 198.4h0.8v0.8h-0.8zM969.4 199.4h0.7v0.7h-0.7zM974.1 206.4h0.7v0.7h-0.7zM976.5 193.2h0.6v0.6h-0.6zM978.2 205.4h0.9v0.9h-0.9zM980.4 195.6h1.0v1.0h-1.0zM980.7 205.9h0.9v0.9h-0.9zM979.2 200.0h1.0v1.0h-1.0zM978.5 193.6h0.7v0.7h-0.7zM970.6 195.5h1.0v1.0h-1.0zM971.2 197.9h1.0v1.0h-1.0zM982.3 196.8h1.0v1.0h-1.0zM981.6 205.4h0.8v0.8h-0.8zM984.0 207.4h0.6v0.6h-0.6zM976.7 199.5h0.7v0.7h-0.7zM976.9 200.3h0.8v0.8h-0.8zM986.7 192.3h0.7v0.7h-0.7zM974.7 206.8h0.7v0.7h-0.7zM980.6 199.7h0.8v0.8h-0.8zM978.9 202.2h0.6v0.6h-0.6zM982.7 202.0h0.7v0.7h-0.7zM985.0 201.7h0.6v0.6h-0.6zM978.4 199.0h0.8v0.8h-0.8zM977.6 193.8h1.0v1.0h-1.0zM975.8 203.8h0.8v0.8h-0.8zM976.3 208.4h0.8v0.8h-0.8zM978.0 199.8h0.9v0.9h-0.9zM981.8 201.4h0.8v0.8h-0.8zM979.6 203.0h0.8v0.8h-0.8zM981.8 208.2h0.8v0.8h-0.8zM974.0 192.2h0.6v0.6h-0.6zM979.9 202.7h0.8v0.8h-0.8zM981.9 196.3h0.8v0.8h-0.8zM981.5 198.8h0.6v0.6h-0.6zM978.4 201.3h0.7v0.7h-0.7zM981.5 202.5h0.6v0.6h-0.6zM976.8 201.6h0.8v0.8h-0.8zM980.7 198.6h0.6v0.6h-0.6zM975.8 196.0h1.0v1.0h-1.0zM973.8 200.2h0.9v0.9h-0.9zM974.0 191.8h0.7v0.7h-0.7zM979.9 196.1h0.8v0.8h-0.8zM983.8 202.3h0.7v0.7h-0.7zM975.0 199.0h0.8v0.8h-0.8zM981.1 202.8h0.8v0.8h-0.8zM973.7 190.3h0.9v0.9h-0.9zM977.8 206.5h0.8v0.8h-0.8zM980.4 198.0h1.0v1.0h-1.0zM974.8 202.4h0.8v0.8h-0.8zM968.6 215.0h0.6v0.6h-0.6zM977.6 203.0h0.9v0.9h-0.9zM980.4 203.9h0.8v0.8h-0.8zM973.3 197.7h0.8v0.8h-0.8zM977.9 205.9h1.0v1.0h-1.0zM979.1 202.6h1.0v1.0h-1.0zM976.8 202.2h0.7v0.7h-0.7zM984.4 197.6h0.6v0.6h-0.6zM977.7 199.4h0.8v0.8h-0.8zM977.9 201.2h1.0v1.0h-1.0zM977.8 204.0h0.9v0.9h-0.9zM979.9 202.7h0.9v0.9h-0.9zM970.1 203.7h0.9v0.9h-0.9zM979.3 203.2h0.8v0.8h-0.8zM975.5 202.7h1.0v1.0h-1.0zM980.6 207.8h0.6v0.6h-0.6zM988.1 197.3h0.8v0.8h-0.8zM976.1 208.1h1.0v1.0h-1.0zM979.3 200.8h0.8v0.8h-0.8zM982.4 206.1h1.0v1.0h-1.0zM981.1 199.6h0.8v0.8h-0.8zM978.0 204.3h0.9v0.9h-0.9zM979.2 198.2h0.8v0.8h-0.8zM976.8 195.6h0.8v0.8h-0.8zM980.4 203.3h0.7v0.7h-0.7zM981.3 197.6h0.9v0.9h-0.9zM976.3 205.0h0.7v0.7h-0.7zM984.7 201.1h0.7v0.7h-0.7zM977.3 196.6h0.8v0.8h-0.8zM979.7 196.3h1.0v1.0h-1.0zM983.2 201.2h0.9v0.9h-0.9zM976.0 205.1h0.7v0.7h-0.7zM976.6 198.9h0.7v0.7h-0.7zM983.3 195.8h0.9v0.9h-0.9zM981.3 198.5h0.9v0.9h-0.9zM979.0 205.7h0.6v0.6h-0.6zM981.8 193.0h0.7v0.7h-0.7zM977.5 203.5h0.7v0.7h-0.7zM973.3 195.2h0.6v0.6h-0.6zM978.8 209.1h0.7v0.7h-0.7zM981.8 199.3h0.8v0.8h-0.8zM980.0 205.3h0.8v0.8h-0.8zM977.8 208.7h0.6v0.6h-0.6zM974.1 196.2h0.7v0.7h-0.7zM979.8 204.0h0.6v0.6h-0.6zM980.5 196.5h0.6v0.6h-0.6zM973.6 203.6h0.7v0.7h-0.7zM983.3 203.0h0.7v0.7h-0.7zM982.9 201.3h1.0v1.0h-1.0zM982.7 198.0h0.7v0.7h-0.7zM979.6 200.3h0.8v0.8h-0.8zM980.5 203.1h0.8v0.8h-0.8zM986.2 212.8h0.8v0.8h-0.8zM987.4 195.7h0.9v0.9h-0.9zM976.1 198.2h0.9v0.9h-0.9zM977.8 199.8h0.8v0.8h-0.8zM974.7 204.6h0.9v0.9h-0.9zM977.0 196.9h0.9v0.9h-0.9zM979.8 200.4h0.7v0.7h-0.7zM981.4 202.7h1.0v1.0h-1.0zM977.3 206.2h0.8v0.8h-0.8zM975.9 200.7h0.9v0.9h-0.9zM975.0 209.1h0.9v0.9h-0.9zM984.3 202.0h0.6v0.6h-0.6zM980.2 200.9h0.7v0.7h-0.7zM979.7 196.4h0.9v0.9h-0.9zM974.6 204.6h0.7v0.7h-0.7zM975.9 202.8h0.9v0.9h-0.9zM980.8 203.4h0.7v0.7h-0.7zM973.6 200.9h0.6v0.6h-0.6zM987.0 201.4h0.8v0.8h-0.8zM983.3 208.6h1.0v1.0h-1.0zM982.1 208.3h0.9v0.9h-0.9zM981.7 200.9h0.6v0.6h-0.6zM980.6 204.6h1.0v1.0h-1.0zM983.0 199.4h0.7v0.7h-0.7zM977.1 204.5h0.9v0.9h-0.9zM977.6 194.9h0.8v0.8h-0.8zM974.5 203.3h0.7v0.7h-0.7zM972.9 203.8h0.9v0.9h-0.9zM976.5 206.8h0.7v0.7h-0.7zM983.0 203.2h0.7v0.7h-0.7zM980.7 202.3h0.8v0.8h-0.8zM986.5 199.2h0.6v0.6h-0.6zM977.4 205.7h0.7v0.7h-0.7zM982.7 206.3h0.9v0.9h-0.9zM977.1 203.8h0.6v0.6h-0.6zM986.1 202.7h0.7v0.7h-0.7zM977.8 194.7h0.6v0.6h-0.6zM980.4 205.4h0.9v0.9h-0.9zM978.7 198.4h0.8v0.8h-0.8zM976.1 205.7h0.9v0.9h-0.9zM978.4 209.6h1.0v1.0h-1.0zM970.4 195.7h1.0v1.0h-1.0zM985.2 213.4h0.7v0.7h-0.7zM979.7 200.0h0.7v0.7h-0.7zM971.5 204.9h0.9v0.9h-0.9zM981.6 210.6h0.9v0.9h-0.9zM977.6 201.9h0.7v0.7h-0.7zM977.8 206.2h1.0v1.0h-1.0zM972.6 197.6h0.6v0.6h-0.6zM979.2 208.8h0.7v0.7h-0.7zM979.2 203.5h0.6v0.6h-0.6zM974.5 204.8h0.8v0.8h-0.8zM975.8 200.6h0.6v0.6h-0.6zM977.3 198.6h0.8v0.8h-0.8zM976.6 204.3h0.6v0.6h-0.6zM978.0 205.4h0.6v0.6h-0.6zM983.7 202.9h0.6v0.6h-0.6zM981.9 199.3h0.8v0.8h-0.8zM978.1 201.9h0.6v0.6h-0.6zM980.2 196.8h0.8v0.8h-0.8zM975.1 207.8h0.8v0.8h-0.8zM981.1 194.3h1.0v1.0h-1.0zM978.1 195.8h0.8v0.8h-0.8zM973.6 200.8h0.8v0.8h-0.8zM982.5 194.5h0.6v0.6h-0.6zM979.1 196.2h0.8v0.8h-0.8zM980.1 201.3h0.8v0.8h-0.8zM971.8 209.2h0.7v0.7h-0.7zM976.8 201.1h0.9v0.9h-0.9zM972.2 202.5h0.7v0.7h-0.7zM979.4 201.7h0.7v0.7h-0.7zM978.1 193.4h0.9v0.9h-0.9zM978.7 203.7h0.9v0.9h-0.9zM978.8 200.5h1.0v1.0h-1.0zM977.9 201.8h0.8v0.8h-0.8zM978.0 203.7h1.0v1.0h-1.0zM981.0 201.1h0.8v0.8h-0.8zM978.1 208.2h0.6v0.6h-0.6zM976.8 205.7h0.8v0.8h-0.8zM973.8 204.2h1.0v1.0h-1.0zM987.3 198.2h0.9v0.9h-0.9zM979.4 205.1h0.8v0.8h-0.8zM975.4 197.5h0.7v0.7h-0.7zM982.6 201.8h0.6v0.6h-0.6zM981.4 203.6h0.9v0.9h-0.9zM979.7 201.0h0.7v0.7h-0.7zM979.4 209.4h1.0v1.0h-1.0zM978.8 203.9h1.0v1.0h-1.0zM985.6 200.8h0.8v0.8h-0.8zM978.9 194.8h0.8v0.8h-0.8zM978.3 207.1h0.9v0.9h-0.9zM976.3 207.4h0.7v0.7h-0.7zM981.8 201.5h0.7v0.7h-0.7zM989.0 199.5h1.0v1.0h-1.0zM983.4 195.1h0.9v0.9h-0.9zM977.5 201.3h0.9v0.9h-0.9zM983.1 195.1h0.6v0.6h-0.6zM985.3 204.6h0.8v0.8h-0.8zM989.1 194.0h0.8v0.8h-0.8zM976.2 196.5h0.9v0.9h-0.9zM975.0 206.4h0.6v0.6h-0.6zM984.5 198.0h0.9v0.9h-0.9zM976.2 202.7h0.8v0.8h-0.8zM976.8 197.2h0.6v0.6h-0.6zM983.2 202.1h0.7v0.7h-0.7zM979.4 204.9h0.8v0.8h-0.8zM975.9 193.3h0.9v0.9h-0.9zM987.4 203.1h0.8v0.8h-0.8zM978.3 196.2h0.7v0.7h-0.7zM978.1 203.4h0.9v0.9h-0.9zM985.0 204.1h1.0v1.0h-1.0zM976.2 197.0h0.9v0.9h-0.9zM986.4 200.1h1.0v1.0h-1.0zM978.3 202.2h0.8v0.8h-0.8zM973.6 195.6h0.8v0.8h-0.8zM978.7 202.3h0.9v0.9h-0.9zM970.4 193.4h0.8v0.8h-0.8zM983.3 196.2h1.0v1.0h-1.0zM970.3 204.1h0.8v0.8h-0.8zM982.7 202.3h0.7v0.7h-0.7zM983.2 201.8h0.7v0.7h-0.7zM978.3 200.2h0.7v0.7h-0.7zM977.3 203.3h0.8v0.8h-0.8zM972.3 205.5h0.7v0.7h-0.7zM981.7 201.6h0.8v0.8h-0.8zM979.1 202.7h0.7v0.7h-0.7zM981.8 199.9h0.8v0.8h-0.8zM975.7 201.5h0.8v0.8h-0.8zM982.6 203.6h0.7v0.7h-0.7zM981.9 195.4h0.9v0.9h-0.9zM972.0 197.3h0.9v0.9h-0.9zM981.1 202.8h0.9v0.9h-0.9zM985.8 191.3h0.9v0.9h-0.9zM982.0 206.5h0.8v0.8h-0.8zM977.2 200.6h1.0v1.0h-1.0zM975.7 201.8h1.0v1.0h-1.0zM977.8 203.1h0.9v0.9h-0.9zM978.8 204.9h0.7v0.7h-0.7zM976.1 199.7h0.9v0.9h-0.9zM989.7 194.8h1.0v1.0h-1.0zM981.8 200.5h0.9v0.9h-0.9zM983.7 205.0h0.6v0.6h-0.6zM987.3 208.0h0.7v0.7h-0.7zM977.9 197.0h0.6v0.6h-0.6zM979.4 200.6h1.0v1.0h-1.0zM981.1 197.5h0.8v0.8h-0.8zM985.4 203.1h0.6v0.6h-0.6zM969.6 200.4h0.9v0.9h-0.9zM984.0 206.5h0.9v0.9h-0.9zM975.6 208.3h0.8v0.8h-0.8zM974.6 204.7h0.7v0.7h-0.7zM977.0 210.6h0.7v0.7h-0.7zM979.5 198.0h0.7v0.7h-0.7zM989.8 202.1h0.9v0.9h-0.9zM984.6 201.4h0.6v0.6h-0.6zM979.7 203.1h0.8v0.8h-0.8zM971.5 194.7h0.7v0.7h-0.7zM979.3 205.0h0.7v0.7h-0.7zM983.8 202.9h0.8v0.8h-0.8zM972.0 209.6h0.7v0.7h-0.7zM981.4 197.4h0.6v0.6h-0.6zM984.7 203.1h0.9v0.9h-0.9zM985.2 204.0h0.7v0.7h-0.7zM975.9 194.7h0.9v0.9h-0.9zM979.1 204.4h1.0v1.0h-1.0zM987.2 197.2h0.8v0.8h-0.8zM982.8 203.3h1.0v1.0h-1.0zM982.2 203.4h0.6v0.6h-0.6zM981.9 199.3h0.6v0.6h-0.6zM977.2 204.2h0.8v0.8h-0.8zM974.4 197.9h0.6v0.6h-0.6zM977.6 201.7h0.8v0.8h-0.8zM980.2 198.9h0.9v0.9h-0.9zM979.2 206.2h0.9v0.9h-0.9zM984.3 202.1h0.8v0.8h-0.8zM976.8 192.0h0.9v0.9h-0.9zM979.5 204.8h0.8v0.8h-0.8zM978.0 207.2h0.6v0.6h-0.6zM977.5 197.9h0.6v0.6h-0.6zM986.1 208.8h0.9v0.9h-0.9zM982.1 199.2h1.0v1.0h-1.0zM982.3 207.9h1.0v1.0h-1.0zM979.1 202.4h0.7v0.7h-0.7zM985.6 205.8h0.8v0.8h-0.8zM977.0 202.3h0.9v0.9h-0.9zM980.5 203.7h0.8v0.8h-0.8zM974.3 196.1h0.9v0.9h-0.9zM981.3 204.7h0.7v0.7h-0.7zM978.0 202.1h0.9v0.9h-0.9zM975.8 195.1h0.8v0.8h-0.8zM985.8 197.8h0.9v0.9h-0.9zM980.0 199.2h0.7v0.7h-0.7zM985.7 204.5h0.8v0.8h-0.8zM982.5 201.7h0.8v0.8h-0.8zM986.4 193.8h0.9v0.9h-0.9zM986.0 195.6h0.7v0.7h-0.7zM977.9 201.0h0.9v0.9h-0.9zM983.8 200.5h0.7v0.7h-0.7zM977.6 201.3h0.8v0.8h-0.8zM982.8 204.1h0.9v0.9h-0.9zM978.5 193.8h0.8v0.8h-0.8zM977.7 202.5h0.9v0.9h-0.9zM975.1 200.2h0.7v0.7h-0.7zM977.5 202.4h0.6v0.6h-0.6zM982.9 204.1h0.7v0.7h-0.7zM981.7 196.9h0.9v0.9h-0.9zM976.7 201.2h0.7v0.7h-0.7zM982.0 197.3h0.9v0.9h-0.9zM978.1 201.0h0.7v0.7h-0.7zM971.6 205.4h1.0v1.0h-1.0zM976.3 200.2h0.6v0.6h-0.6zM975.0 200.4h1.0v1.0h-1.0zM979.8 204.7h0.6v0.6h-0.6zM986.5 203.4h0.9v0.9h-0.9zM979.4 202.6h0.8v0.8h-0.8zM979.1 207.8h1.0v1.0h-1.0zM978.9 198.6h0.8v0.8h-0.8zM977.3 208.9h0.7v0.7h-0.7zM983.3 197.4h1.0v1.0h-1.0zM973.1 210.6h0.8v0.8h-0.8zM978.7 208.1h0.7v0.7h-0.7zM979.9 202.8h0.8v0.8h-0.8zM979.1 203.9h0.9v0.9h-0.9zM983.4 207.5h0.7v0.7h-0.7zM972.6 209.4h0.9v0.9h-0.9zM985.0 191.9h0.8v0.8h-0.8zM984.4 199.7h0.8v0.8h-0.8zM977.2 205.7h0.8v0.8h-0.8zM979.1 208.0h0.9v0.9h-0.9zM978.4 199.1h0.6v0.6h-0.6zM976.0 205.3h0.9v0.9h-0.9zM974.1 200.5h0.8v0.8h-0.8zM973.0 199.9h0.8v0.8h-0.8zM976.1 201.0h0.6v0.6h-0.6zM970.9 205.2h1.0v1.0h-1.0zM977.5 207.3h0.8v0.8h-0.8zM976.5 202.7h0.9v0.9h-0.9zM981.6 203.5h0.7v0.7h-0.7zM979.8 204.6h0.6v0.6h-0.6zM976.4 201.6h0.9v0.9h-0.9zM974.2 198.5h0.8v0.8h-0.8zM976.3 199.7h0.8v0.8h-0.8zM977.9 199.3h0.9v0.9h-0.9zM969.2 196.2h0.8v0.8h-0.8zM972.2 199.8h0.7v0.7h-0.7zM975.9 205.2h0.9v0.9h-0.9zM978.5 199.4h1.0v1.0h-1.0z"/>
<rect x="990.5" y="215.0" width="5" height="5" fill="#ff7a7a" opacity=".55"/><path d="M989.8,216.5 H995.2 M992.5,213.8 V219.2" stroke="#000" stroke-width="1.5"/>
<path fill="#000" opacity="1.0" d="M847.3 235.3h1.5v1.5h-1.5zM838.7 232.6h0.8v0.8h-0.8zM848.1 236.7h1.3v1.3h-1.3zM836.0 230.2h1.0v1.0h-1.0zM841.7 229.2h1.2v1.2h-1.2zM835.5 233.8h1.1v1.1h-1.1zM847.8 240.0h1.3v1.3h-1.3zM831.1 241.8h1.1v1.1h-1.1zM844.8 241.2h1.0v1.0h-1.0zM846.9 245.0h0.8v0.8h-0.8zM841.3 233.0h1.1v1.1h-1.1zM844.0 236.0h1.4v1.4h-1.4zM854.7 236.5h1.4v1.4h-1.4zM835.8 238.3h1.1v1.1h-1.1zM844.2 240.0h1.1v1.1h-1.1zM843.5 234.2h1.1v1.1h-1.1zM836.3 237.1h1.3v1.3h-1.3zM838.7 233.4h1.5v1.5h-1.5zM839.0 233.7h1.1v1.1h-1.1zM843.0 234.9h1.2v1.2h-1.2zM838.2 236.3h0.8v0.8h-0.8zM842.6 241.3h1.0v1.0h-1.0zM839.1 233.6h1.2v1.2h-1.2zM833.9 237.5h1.3v1.3h-1.3zM843.0 249.7h1.1v1.1h-1.1zM840.2 239.3h1.3v1.3h-1.3zM835.6 238.9h0.9v0.9h-0.9zM844.3 233.0h1.4v1.4h-1.4zM837.7 237.9h1.2v1.2h-1.2zM836.3 235.1h1.1v1.1h-1.1zM849.2 233.5h0.8v0.8h-0.8zM842.8 235.9h0.7v0.7h-0.7zM843.5 232.4h0.7v0.7h-0.7zM844.4 241.2h1.4v1.4h-1.4zM844.7 236.4h0.7v0.7h-0.7zM845.8 237.4h1.1v1.1h-1.1zM848.5 234.6h1.4v1.4h-1.4zM833.5 230.1h1.2v1.2h-1.2zM842.3 240.8h1.1v1.1h-1.1zM850.1 243.2h1.1v1.1h-1.1zM843.6 241.5h1.3v1.3h-1.3zM841.1 242.6h0.8v0.8h-0.8zM842.2 239.2h1.1v1.1h-1.1zM840.7 232.7h1.3v1.3h-1.3zM835.4 231.7h1.5v1.5h-1.5zM834.3 250.5h1.1v1.1h-1.1zM839.1 235.8h0.8v0.8h-0.8zM840.7 234.2h0.7v0.7h-0.7zM847.0 239.2h0.9v0.9h-0.9zM841.3 244.5h1.1v1.1h-1.1zM846.2 242.0h1.5v1.5h-1.5zM838.4 232.2h1.1v1.1h-1.1zM839.4 226.9h1.3v1.3h-1.3zM842.1 244.7h0.8v0.8h-0.8zM845.8 240.3h0.8v0.8h-0.8zM838.5 234.5h1.5v1.5h-1.5zM834.3 239.7h1.5v1.5h-1.5zM834.5 238.5h1.1v1.1h-1.1zM840.1 237.5h1.2v1.2h-1.2zM848.2 232.4h1.0v1.0h-1.0zM837.7 235.3h1.0v1.0h-1.0zM842.1 235.4h1.1v1.1h-1.1zM839.4 235.8h1.3v1.3h-1.3zM841.9 241.1h0.9v0.9h-0.9zM838.0 233.0h1.2v1.2h-1.2zM834.8 240.0h1.1v1.1h-1.1zM846.2 239.6h0.9v0.9h-0.9zM838.7 247.6h1.1v1.1h-1.1zM841.8 233.1h1.2v1.2h-1.2zM844.4 238.4h0.8v0.8h-0.8zM851.9 237.7h1.5v1.5h-1.5zM841.5 236.6h1.3v1.3h-1.3zM841.3 234.7h1.3v1.3h-1.3zM845.1 237.5h1.3v1.3h-1.3zM842.4 232.4h1.1v1.1h-1.1zM843.9 229.5h1.1v1.1h-1.1zM842.7 237.7h0.9v0.9h-0.9zM835.9 235.0h1.1v1.1h-1.1zM838.1 231.1h1.2v1.2h-1.2zM834.5 241.1h1.1v1.1h-1.1zM851.8 226.0h1.4v1.4h-1.4zM843.0 228.4h1.1v1.1h-1.1zM842.0 238.3h1.2v1.2h-1.2zM842.1 242.9h1.1v1.1h-1.1zM838.2 232.7h0.9v0.9h-0.9zM839.6 243.3h1.4v1.4h-1.4zM840.3 239.9h1.1v1.1h-1.1zM836.1 239.0h1.3v1.3h-1.3zM842.9 227.0h1.3v1.3h-1.3zM846.9 235.0h1.1v1.1h-1.1zM839.7 232.5h1.4v1.4h-1.4zM836.9 239.1h1.1v1.1h-1.1zM841.6 236.5h0.9v0.9h-0.9zM830.8 237.8h0.8v0.8h-0.8zM852.1 228.3h1.3v1.3h-1.3zM841.8 237.0h1.4v1.4h-1.4zM845.5 237.8h1.5v1.5h-1.5zM838.0 227.7h1.4v1.4h-1.4zM844.4 241.3h0.8v0.8h-0.8zM838.1 240.0h1.4v1.4h-1.4zM840.3 243.2h0.8v0.8h-0.8zM841.9 237.7h1.2v1.2h-1.2zM835.8 231.9h1.0v1.0h-1.0zM848.8 232.9h1.2v1.2h-1.2zM844.0 233.8h0.9v0.9h-0.9zM836.1 233.9h1.5v1.5h-1.5zM841.4 234.6h1.5v1.5h-1.5zM838.9 236.7h1.3v1.3h-1.3zM835.7 228.9h1.1v1.1h-1.1zM841.8 241.6h1.1v1.1h-1.1zM838.4 241.3h0.8v0.8h-0.8zM842.0 238.5h0.7v0.7h-0.7zM834.6 234.7h1.0v1.0h-1.0zM847.1 232.1h1.2v1.2h-1.2zM839.8 246.4h1.0v1.0h-1.0zM843.9 232.9h1.5v1.5h-1.5zM840.8 233.1h1.3v1.3h-1.3zM844.5 240.1h1.0v1.0h-1.0zM839.8 240.1h0.8v0.8h-0.8zM840.4 237.3h1.3v1.3h-1.3zM837.6 242.3h1.0v1.0h-1.0zM851.3 234.4h1.3v1.3h-1.3zM847.5 226.7h1.4v1.4h-1.4zM836.7 239.5h0.8v0.8h-0.8zM839.3 239.4h1.2v1.2h-1.2zM849.7 236.4h0.8v0.8h-0.8zM837.3 238.7h1.4v1.4h-1.4zM840.2 233.9h1.2v1.2h-1.2zM842.6 242.9h1.0v1.0h-1.0zM846.8 234.5h0.9v0.9h-0.9zM837.7 247.7h1.0v1.0h-1.0zM842.3 242.2h1.2v1.2h-1.2zM843.7 235.3h1.0v1.0h-1.0zM841.1 230.2h1.3v1.3h-1.3zM841.1 234.0h0.7v0.7h-0.7zM843.7 239.8h0.8v0.8h-0.8zM841.5 238.4h0.7v0.7h-0.7zM834.3 234.7h0.8v0.8h-0.8zM848.2 240.5h0.8v0.8h-0.8zM845.4 240.5h0.9v0.9h-0.9zM843.2 230.2h1.1v1.1h-1.1zM841.2 236.8h1.4v1.4h-1.4zM835.4 242.0h0.8v0.8h-0.8zM836.8 238.6h0.8v0.8h-0.8zM851.6 241.3h1.5v1.5h-1.5zM847.8 236.0h1.3v1.3h-1.3zM837.8 232.6h0.8v0.8h-0.8zM838.9 231.8h1.2v1.2h-1.2zM845.7 237.1h0.8v0.8h-0.8zM842.4 230.3h0.9v0.9h-0.9zM843.1 230.1h0.9v0.9h-0.9zM841.8 236.2h0.7v0.7h-0.7zM853.4 238.9h1.4v1.4h-1.4zM831.5 232.7h1.1v1.1h-1.1zM841.1 233.9h1.0v1.0h-1.0zM838.4 232.7h1.2v1.2h-1.2zM838.3 242.1h0.9v0.9h-0.9zM837.1 236.3h1.1v1.1h-1.1zM845.2 237.3h1.3v1.3h-1.3zM844.6 240.9h1.5v1.5h-1.5zM836.2 230.8h1.3v1.3h-1.3zM846.5 235.0h1.0v1.0h-1.0zM842.0 234.9h1.1v1.1h-1.1zM841.2 242.3h1.3v1.3h-1.3zM845.5 231.4h1.3v1.3h-1.3zM847.9 239.5h1.4v1.4h-1.4zM838.0 232.2h1.1v1.1h-1.1zM839.5 237.7h0.9v0.9h-0.9zM843.5 230.2h0.7v0.7h-0.7zM835.5 229.8h1.2v1.2h-1.2zM846.8 247.2h0.8v0.8h-0.8zM836.9 235.7h0.8v0.8h-0.8zM841.7 239.2h0.8v0.8h-0.8zM848.4 237.8h1.2v1.2h-1.2zM841.9 248.3h1.0v1.0h-1.0zM831.9 239.1h1.2v1.2h-1.2zM834.5 237.8h1.3v1.3h-1.3zM841.4 237.8h1.3v1.3h-1.3zM841.9 229.2h0.8v0.8h-0.8zM841.9 232.9h1.3v1.3h-1.3zM837.3 231.1h0.8v0.8h-0.8zM837.1 242.1h0.8v0.8h-0.8zM846.6 237.2h1.4v1.4h-1.4zM839.7 233.4h0.8v0.8h-0.8zM846.6 227.8h1.3v1.3h-1.3zM844.1 244.0h0.7v0.7h-0.7zM843.9 239.9h1.5v1.5h-1.5zM844.7 236.7h1.3v1.3h-1.3zM842.3 232.1h0.8v0.8h-0.8zM849.4 225.5h1.4v1.4h-1.4zM840.2 235.2h1.3v1.3h-1.3zM836.9 228.4h1.3v1.3h-1.3zM829.4 235.8h1.1v1.1h-1.1zM835.8 238.4h1.3v1.3h-1.3zM832.7 229.8h0.9v0.9h-0.9zM849.5 229.8h1.0v1.0h-1.0zM848.1 237.2h1.2v1.2h-1.2zM847.7 234.4h1.3v1.3h-1.3zM842.2 233.0h1.2v1.2h-1.2zM839.0 237.3h0.9v0.9h-0.9zM837.1 242.2h1.1v1.1h-1.1zM841.3 237.5h1.3v1.3h-1.3zM842.2 226.5h1.3v1.3h-1.3zM845.4 237.6h1.1v1.1h-1.1zM839.5 244.9h0.9v0.9h-0.9zM847.0 236.5h0.7v0.7h-0.7zM848.2 237.2h1.2v1.2h-1.2zM840.3 235.5h1.1v1.1h-1.1zM838.1 235.4h0.9v0.9h-0.9zM844.9 240.8h1.0v1.0h-1.0zM836.1 232.2h0.9v0.9h-0.9zM839.2 233.6h1.3v1.3h-1.3zM843.8 242.4h1.3v1.3h-1.3zM843.7 230.1h1.4v1.4h-1.4zM850.1 235.2h1.0v1.0h-1.0zM841.3 243.0h0.8v0.8h-0.8zM842.9 238.0h1.2v1.2h-1.2zM834.1 243.3h1.3v1.3h-1.3zM837.9 235.1h1.0v1.0h-1.0zM844.1 236.8h1.4v1.4h-1.4zM841.8 236.6h1.5v1.5h-1.5zM836.2 241.9h1.1v1.1h-1.1zM843.8 235.6h1.1v1.1h-1.1zM841.4 235.1h1.4v1.4h-1.4zM838.4 242.4h0.8v0.8h-0.8zM843.7 237.0h1.3v1.3h-1.3zM851.6 232.0h1.1v1.1h-1.1zM848.7 240.7h1.1v1.1h-1.1zM843.3 229.1h1.2v1.2h-1.2zM843.2 238.4h0.8v0.8h-0.8zM838.5 237.7h1.5v1.5h-1.5zM849.4 238.5h0.8v0.8h-0.8zM850.3 242.8h0.9v0.9h-0.9zM837.0 232.3h1.0v1.0h-1.0zM840.5 238.2h1.3v1.3h-1.3zM837.7 240.9h1.4v1.4h-1.4zM846.3 238.4h1.0v1.0h-1.0zM847.8 233.1h0.9v0.9h-0.9zM841.2 236.2h1.1v1.1h-1.1zM844.3 237.2h1.1v1.1h-1.1zM838.9 235.2h1.2v1.2h-1.2zM839.3 243.2h0.7v0.7h-0.7zM844.7 231.4h0.8v0.8h-0.8zM840.4 242.8h0.8v0.8h-0.8zM844.8 234.1h1.0v1.0h-1.0zM846.6 238.4h1.5v1.5h-1.5zM843.1 238.9h1.1v1.1h-1.1zM840.4 233.9h0.9v0.9h-0.9zM839.3 233.7h0.7v0.7h-0.7zM838.8 226.5h1.3v1.3h-1.3zM844.0 233.3h0.9v0.9h-0.9zM836.9 231.9h1.2v1.2h-1.2zM838.8 234.8h0.9v0.9h-0.9zM843.4 236.9h1.2v1.2h-1.2zM850.1 241.3h1.5v1.5h-1.5zM849.3 246.3h1.2v1.2h-1.2zM846.5 236.2h1.0v1.0h-1.0zM841.4 237.7h0.9v0.9h-0.9zM847.0 236.6h1.1v1.1h-1.1zM843.2 247.3h1.4v1.4h-1.4zM833.7 236.0h1.0v1.0h-1.0zM842.1 227.3h1.0v1.0h-1.0zM841.7 231.4h0.8v0.8h-0.8zM840.0 237.2h1.3v1.3h-1.3zM841.9 241.9h1.3v1.3h-1.3zM833.8 229.7h1.3v1.3h-1.3zM839.3 228.3h1.3v1.3h-1.3zM847.4 232.7h1.2v1.2h-1.2zM836.6 234.1h1.5v1.5h-1.5zM841.1 239.1h1.1v1.1h-1.1zM839.2 243.3h1.2v1.2h-1.2zM845.1 236.0h1.2v1.2h-1.2zM836.5 240.6h1.1v1.1h-1.1zM847.4 240.9h1.5v1.5h-1.5zM847.3 239.8h1.2v1.2h-1.2zM837.9 232.1h1.1v1.1h-1.1zM851.3 235.3h1.0v1.0h-1.0zM844.6 229.2h1.3v1.3h-1.3zM843.8 236.0h0.9v0.9h-0.9zM843.0 245.2h1.4v1.4h-1.4zM842.8 241.7h1.4v1.4h-1.4zM840.9 229.5h1.4v1.4h-1.4zM843.8 235.0h1.5v1.5h-1.5zM840.4 242.7h1.3v1.3h-1.3zM840.9 240.1h1.4v1.4h-1.4zM845.2 222.8h0.8v0.8h-0.8zM836.7 230.2h1.5v1.5h-1.5zM841.4 232.0h0.8v0.8h-0.8zM843.7 239.4h1.2v1.2h-1.2zM840.8 238.5h0.8v0.8h-0.8zM838.7 227.6h0.8v0.8h-0.8zM829.2 234.8h1.0v1.0h-1.0zM833.8 234.0h0.7v0.7h-0.7zM847.5 229.8h1.3v1.3h-1.3zM839.0 240.9h1.5v1.5h-1.5zM843.8 236.8h1.2v1.2h-1.2zM844.5 235.2h0.9v0.9h-0.9zM834.1 238.2h1.2v1.2h-1.2zM841.2 234.6h0.9v0.9h-0.9zM835.7 231.9h0.8v0.8h-0.8zM845.4 238.3h1.0v1.0h-1.0zM840.6 238.6h0.8v0.8h-0.8zM835.0 226.2h1.2v1.2h-1.2zM844.1 234.7h1.2v1.2h-1.2zM836.1 243.3h1.2v1.2h-1.2zM834.3 228.7h1.5v1.5h-1.5zM845.2 240.1h0.8v0.8h-0.8zM839.0 234.7h1.3v1.3h-1.3zM841.6 236.5h1.4v1.4h-1.4zM844.6 238.8h1.1v1.1h-1.1zM849.4 239.0h1.3v1.3h-1.3zM846.7 240.7h0.8v0.8h-0.8zM840.0 235.6h0.9v0.9h-0.9zM836.5 237.9h1.2v1.2h-1.2zM845.7 234.0h1.0v1.0h-1.0zM843.9 243.9h1.0v1.0h-1.0zM842.7 239.2h1.0v1.0h-1.0zM844.6 231.4h1.4v1.4h-1.4zM836.0 237.2h0.9v0.9h-0.9zM835.8 240.3h0.8v0.8h-0.8zM838.6 237.1h0.9v0.9h-0.9zM840.4 238.8h1.2v1.2h-1.2zM845.3 236.9h0.9v0.9h-0.9zM845.7 244.6h1.2v1.2h-1.2zM843.9 234.3h0.9v0.9h-0.9zM839.9 241.5h1.4v1.4h-1.4zM846.6 227.5h0.7v0.7h-0.7zM846.1 236.8h1.0v1.0h-1.0zM846.3 236.2h0.8v0.8h-0.8zM844.2 233.6h1.0v1.0h-1.0zM846.1 244.6h0.8v0.8h-0.8zM839.0 237.3h0.9v0.9h-0.9zM849.3 235.7h1.3v1.3h-1.3zM834.2 246.9h1.5v1.5h-1.5zM839.8 233.3h0.7v0.7h-0.7zM836.9 234.4h1.4v1.4h-1.4zM850.5 235.9h0.9v0.9h-0.9zM848.3 235.3h0.7v0.7h-0.7zM845.0 248.2h1.3v1.3h-1.3zM841.6 228.6h0.7v0.7h-0.7zM845.6 234.4h1.3v1.3h-1.3zM836.8 234.6h1.1v1.1h-1.1zM849.6 231.4h1.0v1.0h-1.0zM843.7 233.5h1.0v1.0h-1.0zM841.4 237.4h1.0v1.0h-1.0zM854.1 236.2h1.4v1.4h-1.4zM840.4 236.2h0.9v0.9h-0.9zM842.5 231.9h0.8v0.8h-0.8zM836.6 238.9h0.8v0.8h-0.8zM837.8 240.5h1.3v1.3h-1.3zM830.2 244.5h0.9v0.9h-0.9zM842.0 234.0h1.4v1.4h-1.4zM839.3 235.1h1.4v1.4h-1.4zM843.8 234.2h1.4v1.4h-1.4zM846.2 234.8h1.3v1.3h-1.3zM840.9 229.6h1.0v1.0h-1.0zM838.7 244.5h1.3v1.3h-1.3zM843.6 235.4h1.2v1.2h-1.2zM841.1 232.6h0.7v0.7h-0.7zM848.3 230.6h1.3v1.3h-1.3zM839.5 240.7h1.4v1.4h-1.4zM848.1 240.4h1.3v1.3h-1.3zM830.9 238.9h1.2v1.2h-1.2zM844.3 233.8h1.0v1.0h-1.0zM840.6 241.7h1.3v1.3h-1.3zM852.1 235.4h1.4v1.4h-1.4zM849.4 234.8h1.3v1.3h-1.3zM846.0 238.8h1.1v1.1h-1.1zM849.8 242.6h1.0v1.0h-1.0zM842.1 238.1h1.1v1.1h-1.1zM836.2 246.4h1.2v1.2h-1.2zM839.6 237.2h0.7v0.7h-0.7zM839.6 229.6h1.1v1.1h-1.1zM837.3 235.8h1.4v1.4h-1.4zM845.1 237.2h1.3v1.3h-1.3zM840.4 240.1h1.0v1.0h-1.0zM839.8 244.1h0.8v0.8h-0.8zM835.2 233.3h1.0v1.0h-1.0zM841.4 231.4h1.2v1.2h-1.2zM845.2 238.6h1.1v1.1h-1.1zM838.1 232.4h0.7v0.7h-0.7zM833.1 233.6h0.9v0.9h-0.9zM843.7 242.7h0.9v0.9h-0.9zM843.4 237.2h1.2v1.2h-1.2zM847.8 230.2h1.2v1.2h-1.2zM848.3 229.1h0.9v0.9h-0.9zM832.9 245.2h1.5v1.5h-1.5zM837.9 230.5h1.0v1.0h-1.0zM845.5 238.4h0.9v0.9h-0.9zM837.5 230.6h1.2v1.2h-1.2zM842.1 235.9h0.9v0.9h-0.9zM845.6 238.8h1.4v1.4h-1.4zM833.9 237.8h0.8v0.8h-0.8zM837.0 243.1h0.9v0.9h-0.9zM841.2 229.3h1.2v1.2h-1.2zM846.3 236.9h1.5v1.5h-1.5zM839.4 238.9h1.5v1.5h-1.5zM836.0 231.9h1.1v1.1h-1.1zM838.7 232.5h0.9v0.9h-0.9zM841.2 239.5h1.3v1.3h-1.3zM844.0 237.3h1.1v1.1h-1.1zM850.0 235.4h1.2v1.2h-1.2zM841.8 232.6h1.1v1.1h-1.1zM847.5 236.7h0.7v0.7h-0.7zM843.7 237.7h1.0v1.0h-1.0zM838.8 236.5h0.8v0.8h-0.8zM850.1 244.5h1.5v1.5h-1.5zM844.1 234.6h0.9v0.9h-0.9zM842.6 235.4h0.8v0.8h-0.8zM835.0 225.6h1.4v1.4h-1.4zM844.2 232.4h1.3v1.3h-1.3zM851.1 231.8h1.5v1.5h-1.5zM842.6 227.2h1.3v1.3h-1.3zM836.7 239.0h1.4v1.4h-1.4zM841.1 235.5h1.1v1.1h-1.1zM847.0 230.3h1.1v1.1h-1.1zM849.1 232.6h0.9v0.9h-0.9zM839.2 226.4h0.7v0.7h-0.7zM846.5 234.0h1.4v1.4h-1.4zM846.0 236.3h0.9v0.9h-0.9z"/>
<rect x="854.5" y="249.0" width="5" height="5" fill="#ff7a7a" opacity=".55"/><path d="M853.8,250.5 H859.2 M856.5,247.8 V253.2" stroke="#000" stroke-width="1.5"/>
<path d="M863,223 L866,229" stroke="#999" stroke-width="1.4"/>
<path d="M893,248 L893,253 L888,253 Z" fill="#ff8080"/>
<circle cx="906" cy="223" r="1.3" fill="#000" opacity=".75"/>
<circle cx="913" cy="230" r="1" fill="#000" opacity=".75"/>
<circle cx="917" cy="231" r="1.3" fill="#000" opacity=".75"/>
<circle cx="908" cy="234" r="1" fill="#000" opacity=".75"/>
<circle cx="900" cy="240" r="1.3" fill="#000" opacity=".75"/>
<circle cx="914" cy="236" r="1.2" fill="#000" opacity=".75"/>
<circle cx="922" cy="232" r="1.3" fill="#000" opacity=".75"/>
<circle cx="907" cy="244" r="1" fill="#000" opacity=".75"/>
<circle cx="914" cy="245" r="1.6" fill="#000" opacity=".75"/>
<circle cx="903" cy="239" r="0.9" fill="#000" opacity=".75"/>
<circle cx="911" cy="238" r="1.2" fill="#000" opacity=".75"/>
<path d="M915.3,250.5 H920.7 M918,247.8 V253.2" stroke="#000" stroke-width="1.5"/>
<circle cx="938.2" cy="238.8" r="1.6" fill="#000" opacity=".8"/>
<circle cx="948.6" cy="244.8" r="0.9" fill="#000" opacity=".8"/>
<circle cx="939.9" cy="232.6" r="1.6" fill="#000" opacity=".8"/>
<circle cx="950.7" cy="246.8" r="1.7" fill="#000" opacity=".8"/>
<circle cx="945.7" cy="240.7" r="1.6" fill="#000" opacity=".8"/>
<circle cx="945.5" cy="239.3" r="1.7" fill="#000" opacity=".8"/>
<circle cx="953.0" cy="226.8" r="0.8" fill="#000" opacity=".8"/>
<circle cx="950.0" cy="242.6" r="1.0" fill="#000" opacity=".8"/>
<circle cx="953.4" cy="241.2" r="1.0" fill="#000" opacity=".8"/>
<circle cx="936.7" cy="238.8" r="1.4" fill="#000" opacity=".8"/>
<circle cx="936.8" cy="244.8" r="1.0" fill="#000" opacity=".8"/>
<circle cx="953.0" cy="245.7" r="0.9" fill="#000" opacity=".8"/>
<circle cx="949.8" cy="236.2" r="1.7" fill="#000" opacity=".8"/>
<circle cx="943.7" cy="232.9" r="1.0" fill="#000" opacity=".8"/>
<circle cx="953.3" cy="230.7" r="1.7" fill="#000" opacity=".8"/>
<circle cx="933.8" cy="244.3" r="0.8" fill="#000" opacity=".8"/>
<circle cx="950.4" cy="245.8" r="1.1" fill="#000" opacity=".8"/>
<circle cx="947.2" cy="232.9" r="0.9" fill="#000" opacity=".8"/>
<circle cx="953.1" cy="234.8" r="1.6" fill="#000" opacity=".8"/>
<circle cx="933.9" cy="226.9" r="1.0" fill="#000" opacity=".8"/>
<path d="M952.3,250.5 H957.7 M955,247.8 V253.2" stroke="#000" stroke-width="1.5"/>
<rect x="966.0" y="228.3" width="1.1" height="1.1" fill="#000"/>
<rect x="967.7" y="233.7" width="1.1" height="1.1" fill="#000"/>
<rect x="967.5" y="237.2" width="1.1" height="1.1" fill="#000"/>
<rect x="966.1" y="246.4" width="1.1" height="1.1" fill="#000"/>
<rect x="971.9" y="224.1" width="1.1" height="1.1" fill="#000"/>
<rect x="971.8" y="228.5" width="1.1" height="1.1" fill="#000"/>
<rect x="971.4" y="236.8" width="1.1" height="1.1" fill="#000"/>
<rect x="972.9" y="241.8" width="1.1" height="1.1" fill="#000"/>
<rect x="976.7" y="229.0" width="1.1" height="1.1" fill="#000"/>
<rect x="977.9" y="233.0" width="1.1" height="1.1" fill="#000"/>
<rect x="977.4" y="237.8" width="1.1" height="1.1" fill="#000"/>
<rect x="977.1" y="241.9" width="1.1" height="1.1" fill="#000"/>
<rect x="977.5" y="245.9" width="1.1" height="1.1" fill="#000"/>
<rect x="981.5" y="224.9" width="1.1" height="1.1" fill="#000"/>
<rect x="981.9" y="229.4" width="1.1" height="1.1" fill="#000"/>
<rect x="981.3" y="241.7" width="1.1" height="1.1" fill="#000"/>
<rect x="981.8" y="246.4" width="1.1" height="1.1" fill="#000"/>
<rect x="988.0" y="224.1" width="1.1" height="1.1" fill="#000"/>
<rect x="986.4" y="228.9" width="1.1" height="1.1" fill="#000"/>
<rect x="986.8" y="233.0" width="1.1" height="1.1" fill="#000"/>
<rect x="987.4" y="237.7" width="1.1" height="1.1" fill="#000"/>
<rect x="987.0" y="241.5" width="1.1" height="1.1" fill="#000"/>
<rect x="986.9" y="247.0" width="1.1" height="1.1" fill="#000"/>
<rect x="992.0" y="232.2" width="1.1" height="1.1" fill="#000"/>
<rect x="991.8" y="242.2" width="1.1" height="1.1" fill="#000"/>
<rect x="992.7" y="246.6" width="1.1" height="1.1" fill="#000"/>
<clipPath id="rc0"><circle cx="843" cy="273" r="15"/></clipPath>
<path fill="#000" d="M845.2 272.6h1.2v1.2h-1.2zM838.0 283.2h1.3v1.3h-1.3zM830.8 265.1h1.2v1.2h-1.2zM834.1 282.4h1.2v1.2h-1.2zM841.3 287.3h1.0v1.0h-1.0zM852.8 278.0h1.5v1.5h-1.5zM851.3 262.3h1.3v1.3h-1.3zM834.9 272.4h0.9v0.9h-0.9zM830.2 277.8h1.2v1.2h-1.2zM856.3 271.4h1.2v1.2h-1.2zM834.9 267.7h1.5v1.5h-1.5zM846.2 267.5h1.5v1.5h-1.5zM839.0 264.9h1.4v1.4h-1.4zM832.0 278.9h1.2v1.2h-1.2zM833.2 262.5h1.5v1.5h-1.5zM833.7 274.2h1.4v1.4h-1.4zM840.7 269.0h1.2v1.2h-1.2zM840.8 284.9h0.9v0.9h-0.9zM840.8 280.2h1.0v1.0h-1.0zM830.2 267.4h1.3v1.3h-1.3zM835.1 262.6h1.1v1.1h-1.1zM832.1 278.3h1.0v1.0h-1.0zM843.3 258.6h1.5v1.5h-1.5zM856.2 278.7h1.0v1.0h-1.0zM851.1 281.6h1.1v1.1h-1.1zM848.0 283.6h1.2v1.2h-1.2zM832.6 270.6h1.3v1.3h-1.3zM845.2 260.5h1.4v1.4h-1.4zM847.8 263.9h1.3v1.3h-1.3zM846.3 275.8h1.2v1.2h-1.2zM839.9 266.4h1.6v1.6h-1.6zM840.4 283.2h1.2v1.2h-1.2zM848.8 271.9h1.0v1.0h-1.0zM837.0 266.3h1.1v1.1h-1.1zM852.7 283.6h1.2v1.2h-1.2zM836.5 269.5h1.5v1.5h-1.5zM852.9 280.7h0.9v0.9h-0.9zM834.6 271.3h1.6v1.6h-1.6zM830.3 278.1h0.8v0.8h-0.8zM844.3 287.8h1.1v1.1h-1.1zM850.4 274.8h1.1v1.1h-1.1zM833.9 271.4h1.0v1.0h-1.0zM832.9 274.6h0.9v0.9h-0.9zM831.7 271.7h1.3v1.3h-1.3zM842.4 262.9h1.0v1.0h-1.0zM847.8 271.2h1.0v1.0h-1.0zM834.6 277.8h1.0v1.0h-1.0zM848.3 266.7h1.2v1.2h-1.2zM838.8 269.6h1.1v1.1h-1.1zM850.4 281.2h1.4v1.4h-1.4zM851.9 261.5h0.9v0.9h-0.9zM831.2 276.1h1.1v1.1h-1.1zM852.9 269.4h1.5v1.5h-1.5zM851.5 276.8h1.4v1.4h-1.4zM848.5 264.0h1.5v1.5h-1.5zM843.6 263.4h1.4v1.4h-1.4zM838.0 272.5h1.5v1.5h-1.5zM850.9 261.3h1.0v1.0h-1.0zM843.5 270.1h1.2v1.2h-1.2zM839.5 283.1h1.1v1.1h-1.1zM833.6 269.9h1.4v1.4h-1.4zM838.7 266.4h1.0v1.0h-1.0zM843.7 281.5h1.1v1.1h-1.1zM829.9 272.7h1.6v1.6h-1.6zM842.4 281.1h1.2v1.2h-1.2zM854.9 273.5h0.8v0.8h-0.8zM833.5 266.6h1.1v1.1h-1.1zM851.4 272.5h0.8v0.8h-0.8zM848.8 277.6h1.4v1.4h-1.4zM842.4 264.1h1.5v1.5h-1.5zM846.7 279.1h1.3v1.3h-1.3zM829.9 270.3h1.0v1.0h-1.0zM852.7 266.1h1.4v1.4h-1.4zM836.8 269.9h1.3v1.3h-1.3zM844.7 272.4h1.1v1.1h-1.1zM840.3 280.1h1.4v1.4h-1.4zM839.7 268.6h1.4v1.4h-1.4zM845.8 270.3h0.8v0.8h-0.8zM831.7 264.6h1.2v1.2h-1.2zM833.4 272.6h1.3v1.3h-1.3zM852.9 266.9h1.4v1.4h-1.4zM829.2 276.0h1.4v1.4h-1.4zM834.8 272.5h1.0v1.0h-1.0zM854.9 271.4h0.9v0.9h-0.9zM833.3 271.7h1.3v1.3h-1.3zM840.0 287.0h1.2v1.2h-1.2zM846.6 266.3h1.5v1.5h-1.5zM832.4 269.8h1.1v1.1h-1.1zM853.5 269.0h1.2v1.2h-1.2zM836.4 280.7h1.0v1.0h-1.0zM835.8 275.6h0.9v0.9h-0.9zM841.4 274.9h1.3v1.3h-1.3zM854.8 281.0h1.1v1.1h-1.1zM841.5 284.0h1.0v1.0h-1.0zM841.6 264.8h1.5v1.5h-1.5zM846.4 273.9h1.5v1.5h-1.5zM840.1 265.9h1.3v1.3h-1.3zM836.2 281.2h1.0v1.0h-1.0zM831.3 270.0h1.5v1.5h-1.5zM842.6 284.3h1.3v1.3h-1.3zM850.3 265.6h1.5v1.5h-1.5zM851.5 268.6h1.1v1.1h-1.1zM854.2 270.8h1.2v1.2h-1.2zM845.0 261.5h1.2v1.2h-1.2zM838.8 266.6h1.1v1.1h-1.1zM855.7 273.7h1.5v1.5h-1.5zM841.7 258.3h1.4v1.4h-1.4zM849.6 278.3h1.5v1.5h-1.5zM854.0 281.8h1.4v1.4h-1.4zM847.1 278.5h1.4v1.4h-1.4zM841.5 270.9h1.2v1.2h-1.2zM848.2 285.9h1.2v1.2h-1.2zM852.4 273.8h0.8v0.8h-0.8zM854.7 265.1h1.4v1.4h-1.4zM857.5 273.2h1.0v1.0h-1.0zM835.3 262.4h1.2v1.2h-1.2zM848.5 277.9h1.4v1.4h-1.4zM849.6 279.5h1.5v1.5h-1.5zM838.1 276.2h1.3v1.3h-1.3zM835.2 283.8h1.1v1.1h-1.1zM849.5 261.0h0.9v0.9h-0.9zM833.4 270.1h0.9v0.9h-0.9zM850.5 268.4h1.3v1.3h-1.3zM856.6 278.4h1.6v1.6h-1.6zM840.8 268.0h1.3v1.3h-1.3zM832.9 275.0h1.0v1.0h-1.0zM851.0 284.2h1.3v1.3h-1.3zM842.7 260.1h1.1v1.1h-1.1zM835.1 270.5h1.3v1.3h-1.3zM831.0 278.6h1.0v1.0h-1.0zM839.8 275.9h0.8v0.8h-0.8zM843.4 274.9h1.1v1.1h-1.1zM832.8 282.7h0.8v0.8h-0.8zM847.6 272.6h1.5v1.5h-1.5zM838.3 278.8h1.3v1.3h-1.3zM841.8 274.5h0.9v0.9h-0.9zM837.5 261.5h1.6v1.6h-1.6zM842.7 286.2h1.1v1.1h-1.1zM835.1 272.2h1.1v1.1h-1.1zM849.5 269.1h1.1v1.1h-1.1zM851.5 267.5h1.5v1.5h-1.5zM834.3 271.1h1.4v1.4h-1.4zM837.7 265.4h1.6v1.6h-1.6zM854.6 280.5h1.4v1.4h-1.4zM840.4 263.0h1.4v1.4h-1.4zM854.8 276.4h1.5v1.5h-1.5zM832.2 280.0h1.4v1.4h-1.4zM829.8 272.9h1.2v1.2h-1.2zM850.9 280.4h1.4v1.4h-1.4zM848.2 281.7h1.5v1.5h-1.5zM856.9 274.2h1.1v1.1h-1.1zM834.8 282.5h1.3v1.3h-1.3zM841.6 278.8h1.1v1.1h-1.1zM854.5 263.4h1.4v1.4h-1.4zM838.9 261.3h1.5v1.5h-1.5zM846.0 277.8h1.5v1.5h-1.5zM853.8 274.3h1.1v1.1h-1.1zM853.3 267.2h1.0v1.0h-1.0zM852.5 277.1h1.2v1.2h-1.2zM831.8 275.3h0.8v0.8h-0.8zM834.3 283.6h1.0v1.0h-1.0zM845.4 278.9h1.6v1.6h-1.6zM849.5 266.0h1.1v1.1h-1.1zM833.5 283.4h1.5v1.5h-1.5zM856.3 268.9h1.3v1.3h-1.3zM853.8 282.8h0.9v0.9h-0.9zM842.4 264.1h0.8v0.8h-0.8zM838.9 266.7h1.5v1.5h-1.5zM848.2 284.1h1.1v1.1h-1.1zM850.6 275.3h1.0v1.0h-1.0zM845.1 260.0h1.5v1.5h-1.5zM846.5 278.9h1.1v1.1h-1.1zM840.1 279.2h1.4v1.4h-1.4zM854.0 273.4h0.9v0.9h-0.9zM839.9 280.5h1.2v1.2h-1.2zM854.9 268.2h1.1v1.1h-1.1zM850.5 272.5h1.0v1.0h-1.0zM834.4 263.1h1.4v1.4h-1.4zM830.3 272.4h1.1v1.1h-1.1zM855.2 268.9h1.4v1.4h-1.4zM829.1 269.4h1.2v1.2h-1.2zM852.5 270.0h1.6v1.6h-1.6zM838.6 282.8h1.2v1.2h-1.2zM829.9 268.8h1.5v1.5h-1.5zM848.2 284.5h1.2v1.2h-1.2zM838.8 275.9h1.5v1.5h-1.5zM855.7 272.1h1.3v1.3h-1.3zM850.4 277.2h1.1v1.1h-1.1zM850.9 277.8h1.1v1.1h-1.1zM839.6 275.0h0.9v0.9h-0.9zM853.7 269.6h1.0v1.0h-1.0zM834.4 275.8h1.2v1.2h-1.2zM848.7 284.6h1.5v1.5h-1.5zM832.8 262.4h1.5v1.5h-1.5zM832.5 270.5h1.4v1.4h-1.4zM840.2 276.1h1.2v1.2h-1.2zM848.0 261.8h0.8v0.8h-0.8zM844.5 270.1h1.2v1.2h-1.2zM846.6 280.4h1.0v1.0h-1.0zM833.5 264.6h1.5v1.5h-1.5zM839.3 272.9h0.8v0.8h-0.8zM847.6 275.7h0.9v0.9h-0.9zM841.3 278.6h1.5v1.5h-1.5zM836.4 281.0h1.4v1.4h-1.4zM847.5 282.6h0.8v0.8h-0.8zM828.6 274.4h1.3v1.3h-1.3zM839.1 284.3h1.2v1.2h-1.2zM831.0 273.2h1.4v1.4h-1.4zM854.4 263.6h1.6v1.6h-1.6zM847.6 261.5h1.4v1.4h-1.4zM845.3 279.3h1.5v1.5h-1.5zM841.0 273.8h1.4v1.4h-1.4zM848.2 278.8h1.5v1.5h-1.5zM848.1 285.7h1.0v1.0h-1.0zM845.5 264.1h1.2v1.2h-1.2zM837.9 261.4h1.0v1.0h-1.0zM840.1 267.6h1.0v1.0h-1.0zM844.0 267.2h1.1v1.1h-1.1zM851.6 280.5h0.9v0.9h-0.9zM833.5 284.4h1.2v1.2h-1.2zM840.3 273.0h1.0v1.0h-1.0zM852.3 280.3h0.9v0.9h-0.9zM845.5 278.1h1.4v1.4h-1.4zM838.3 266.4h1.1v1.1h-1.1zM841.2 284.0h1.3v1.3h-1.3zM846.9 277.3h1.3v1.3h-1.3zM840.7 285.0h0.9v0.9h-0.9zM846.2 275.3h1.5v1.5h-1.5zM841.0 272.5h1.1v1.1h-1.1zM838.2 267.8h1.5v1.5h-1.5zM853.9 273.3h1.3v1.3h-1.3zM848.6 286.8h1.2v1.2h-1.2zM851.9 282.5h0.8v0.8h-0.8zM837.3 260.5h1.3v1.3h-1.3zM846.8 273.5h1.5v1.5h-1.5zM847.5 266.6h1.5v1.5h-1.5zM844.9 268.5h1.5v1.5h-1.5zM851.5 273.7h1.0v1.0h-1.0zM845.6 283.3h0.8v0.8h-0.8zM849.7 271.5h1.3v1.3h-1.3zM834.4 284.5h1.2v1.2h-1.2zM829.9 273.3h1.2v1.2h-1.2zM837.1 274.9h1.4v1.4h-1.4zM835.9 265.6h1.6v1.6h-1.6zM830.4 275.9h0.9v0.9h-0.9zM835.4 282.2h1.0v1.0h-1.0zM857.9 272.6h1.3v1.3h-1.3zM841.5 265.3h1.4v1.4h-1.4zM849.5 265.2h1.3v1.3h-1.3zM838.8 266.8h0.8v0.8h-0.8zM847.5 282.9h1.3v1.3h-1.3zM847.8 266.9h0.9v0.9h-0.9zM837.7 275.9h1.0v1.0h-1.0zM830.6 273.9h0.9v0.9h-0.9zM847.7 282.1h1.2v1.2h-1.2zM848.5 283.9h1.3v1.3h-1.3zM857.3 269.6h1.3v1.3h-1.3zM852.2 278.7h1.0v1.0h-1.0zM842.3 277.1h1.4v1.4h-1.4zM838.6 266.5h1.0v1.0h-1.0zM854.1 272.5h1.4v1.4h-1.4zM843.4 287.6h1.4v1.4h-1.4zM838.0 272.7h1.1v1.1h-1.1zM849.8 274.1h1.4v1.4h-1.4zM848.2 277.4h1.1v1.1h-1.1zM849.0 271.8h1.1v1.1h-1.1zM839.9 272.4h1.3v1.3h-1.3zM850.7 276.6h1.1v1.1h-1.1zM852.9 272.8h1.0v1.0h-1.0zM839.1 280.2h0.9v0.9h-0.9zM838.0 284.4h1.1v1.1h-1.1zM843.4 275.9h1.4v1.4h-1.4zM840.7 280.4h1.5v1.5h-1.5zM853.9 270.9h0.9v0.9h-0.9zM849.7 261.8h0.8v0.8h-0.8zM839.8 286.3h1.2v1.2h-1.2zM849.6 286.3h1.0v1.0h-1.0zM848.3 284.3h1.6v1.6h-1.6zM842.4 271.0h0.8v0.8h-0.8zM845.7 284.9h1.6v1.6h-1.6zM852.2 281.1h1.3v1.3h-1.3zM857.0 275.6h1.1v1.1h-1.1zM833.6 282.5h1.2v1.2h-1.2zM840.5 270.4h1.3v1.3h-1.3zM851.1 284.0h1.4v1.4h-1.4zM835.9 263.3h1.6v1.6h-1.6zM849.1 261.8h1.1v1.1h-1.1zM858.0 274.2h0.9v0.9h-0.9zM854.1 276.1h1.6v1.6h-1.6zM836.5 275.3h0.8v0.8h-0.8zM847.8 280.7h1.1v1.1h-1.1zM841.3 287.0h1.6v1.6h-1.6zM849.6 272.1h1.4v1.4h-1.4zM848.2 281.7h1.2v1.2h-1.2zM837.7 285.2h1.0v1.0h-1.0zM847.3 260.6h1.3v1.3h-1.3zM847.6 275.4h1.4v1.4h-1.4zM850.1 271.1h1.3v1.3h-1.3zM843.7 259.0h0.9v0.9h-0.9zM844.1 276.6h1.4v1.4h-1.4z"/>
<clipPath id="rc1"><circle cx="877" cy="273" r="15"/></clipPath>
<g clip-path="url(#rc1)"><ellipse cx="863.2" cy="268.2" rx="2.6" ry="2.2" fill="none" stroke="#000" stroke-width="1.0"/><ellipse cx="860.5" cy="273.0" rx="2.6" ry="2.2" fill="none" stroke="#000" stroke-width="1.0"/><ellipse cx="863.2" cy="277.8" rx="2.6" ry="2.2" fill="none" stroke="#000" stroke-width="1.0"/><ellipse cx="868.7" cy="258.6" rx="2.6" ry="2.2" fill="none" stroke="#000" stroke-width="1.0"/><ellipse cx="866.0" cy="263.4" rx="2.6" ry="2.2" fill="none" stroke="#000" stroke-width="1.0"/><ellipse cx="868.7" cy="268.2" rx="2.6" ry="2.2" fill="none" stroke="#000" stroke-width="1.0"/><ellipse cx="866.0" cy="273.0" rx="2.6" ry="2.2" fill="none" stroke="#000" stroke-width="1.0"/><ellipse cx="868.7" cy="277.8" rx="2.6" ry="2.2" fill="none" stroke="#000" stroke-width="1.0"/><ellipse cx="866.0" cy="282.6" rx="2.6" ry="2.2" fill="none" stroke="#000" stroke-width="1.0"/><ellipse cx="868.7" cy="287.4" rx="2.6" ry="2.2" fill="none" stroke="#000" stroke-width="1.0"/><ellipse cx="874.2" cy="258.6" rx="2.6" ry="2.2" fill="none" stroke="#000" stroke-width="1.0"/><ellipse cx="871.5" cy="263.4" rx="2.6" ry="2.2" fill="none" stroke="#000" stroke-width="1.0"/><ellipse cx="874.2" cy="268.2" rx="2.6" ry="2.2" fill="none" stroke="#000" stroke-width="1.0"/><ellipse cx="871.5" cy="273.0" rx="2.6" ry="2.2" fill="none" stroke="#000" stroke-width="1.0"/><ellipse cx="874.2" cy="277.8" rx="2.6" ry="2.2" fill="none" stroke="#000" stroke-width="1.0"/><ellipse cx="871.5" cy="282.6" rx="2.6" ry="2.2" fill="none" stroke="#000" stroke-width="1.0"/><ellipse cx="874.2" cy="287.4" rx="2.6" ry="2.2" fill="none" stroke="#000" stroke-width="1.0"/><ellipse cx="879.7" cy="258.6" rx="2.6" ry="2.2" fill="none" stroke="#000" stroke-width="1.0"/><ellipse cx="877.0" cy="263.4" rx="2.6" ry="2.2" fill="none" stroke="#000" stroke-width="1.0"/><ellipse cx="879.7" cy="268.2" rx="2.6" ry="2.2" fill="none" stroke="#000" stroke-width="1.0"/><ellipse cx="877.0" cy="273.0" rx="2.6" ry="2.2" fill="none" stroke="#000" stroke-width="1.0"/><ellipse cx="879.7" cy="277.8" rx="2.6" ry="2.2" fill="none" stroke="#000" stroke-width="1.0"/><ellipse cx="877.0" cy="282.6" rx="2.6" ry="2.2" fill="none" stroke="#000" stroke-width="1.0"/><ellipse cx="879.7" cy="287.4" rx="2.6" ry="2.2" fill="none" stroke="#000" stroke-width="1.0"/><ellipse cx="885.2" cy="258.6" rx="2.6" ry="2.2" fill="none" stroke="#000" stroke-width="1.0"/><ellipse cx="882.5" cy="263.4" rx="2.6" ry="2.2" fill="none" stroke="#000" stroke-width="1.0"/><ellipse cx="885.2" cy="268.2" rx="2.6" ry="2.2" fill="none" stroke="#000" stroke-width="1.0"/><ellipse cx="882.5" cy="273.0" rx="2.6" ry="2.2" fill="none" stroke="#000" stroke-width="1.0"/><ellipse cx="885.2" cy="277.8" rx="2.6" ry="2.2" fill="none" stroke="#000" stroke-width="1.0"/><ellipse cx="882.5" cy="282.6" rx="2.6" ry="2.2" fill="none" stroke="#000" stroke-width="1.0"/><ellipse cx="885.2" cy="287.4" rx="2.6" ry="2.2" fill="none" stroke="#000" stroke-width="1.0"/><ellipse cx="888.0" cy="263.4" rx="2.6" ry="2.2" fill="none" stroke="#000" stroke-width="1.0"/><ellipse cx="890.7" cy="268.2" rx="2.6" ry="2.2" fill="none" stroke="#000" stroke-width="1.0"/><ellipse cx="888.0" cy="273.0" rx="2.6" ry="2.2" fill="none" stroke="#000" stroke-width="1.0"/><ellipse cx="890.7" cy="277.8" rx="2.6" ry="2.2" fill="none" stroke="#000" stroke-width="1.0"/><ellipse cx="888.0" cy="282.6" rx="2.6" ry="2.2" fill="none" stroke="#000" stroke-width="1.0"/><ellipse cx="893.5" cy="273.0" rx="2.6" ry="2.2" fill="none" stroke="#000" stroke-width="1.0"/></g>
<clipPath id="rc2"><circle cx="911" cy="273" r="15"/></clipPath>
<path fill="#000" d="M903.1 282.8h0.9v0.9h-0.9zM905.9 267.0h1.2v1.2h-1.2zM898.7 265.1h1.0v1.0h-1.0zM911.7 269.7h0.9v0.9h-0.9zM909.6 268.9h1.5v1.5h-1.5zM916.4 268.5h1.4v1.4h-1.4zM902.2 261.1h1.2v1.2h-1.2zM901.5 283.4h1.0v1.0h-1.0zM918.7 268.3h1.1v1.1h-1.1zM917.7 261.8h0.9v0.9h-0.9zM902.9 260.5h1.1v1.1h-1.1zM899.6 268.7h1.4v1.4h-1.4zM903.9 278.9h0.9v0.9h-0.9zM904.9 266.9h1.4v1.4h-1.4zM923.6 276.6h0.9v0.9h-0.9zM920.2 263.0h1.1v1.1h-1.1zM916.6 277.0h1.0v1.0h-1.0zM924.4 271.2h0.8v0.8h-0.8zM922.2 273.6h1.2v1.2h-1.2zM898.0 268.6h1.5v1.5h-1.5zM920.8 284.1h1.2v1.2h-1.2zM905.3 274.1h1.0v1.0h-1.0zM914.1 280.3h1.2v1.2h-1.2zM910.6 280.8h0.9v0.9h-0.9zM924.0 279.0h1.2v1.2h-1.2zM905.8 274.6h1.6v1.6h-1.6zM924.2 274.1h0.8v0.8h-0.8zM908.5 283.2h1.2v1.2h-1.2zM907.8 262.1h1.4v1.4h-1.4zM918.4 276.3h1.0v1.0h-1.0zM901.4 274.1h0.9v0.9h-0.9zM913.6 275.7h0.8v0.8h-0.8zM902.1 261.2h1.3v1.3h-1.3zM914.8 284.1h1.2v1.2h-1.2zM908.2 286.2h1.0v1.0h-1.0zM909.9 276.0h1.0v1.0h-1.0zM920.2 268.1h1.4v1.4h-1.4zM903.3 273.5h1.1v1.1h-1.1zM902.7 272.5h1.2v1.2h-1.2zM920.2 274.5h0.9v0.9h-0.9zM900.2 274.5h1.5v1.5h-1.5zM920.9 262.8h1.2v1.2h-1.2zM907.2 286.3h0.9v0.9h-0.9zM908.3 275.6h1.5v1.5h-1.5zM910.6 258.6h0.9v0.9h-0.9zM917.5 262.3h1.2v1.2h-1.2zM898.4 277.7h1.2v1.2h-1.2zM924.6 268.2h1.1v1.1h-1.1zM901.5 270.6h1.5v1.5h-1.5zM916.8 265.5h1.1v1.1h-1.1zM906.0 284.2h1.3v1.3h-1.3zM903.1 265.5h1.3v1.3h-1.3zM921.4 273.4h1.4v1.4h-1.4zM909.3 259.6h1.0v1.0h-1.0zM924.2 266.4h1.3v1.3h-1.3zM913.9 267.0h1.0v1.0h-1.0zM913.2 283.7h1.5v1.5h-1.5zM902.5 284.7h1.5v1.5h-1.5zM913.5 273.7h1.6v1.6h-1.6zM897.8 273.0h1.5v1.5h-1.5zM910.4 274.7h1.5v1.5h-1.5zM919.6 269.0h1.3v1.3h-1.3zM925.5 274.1h1.3v1.3h-1.3zM923.3 271.3h1.1v1.1h-1.1zM915.6 282.7h1.5v1.5h-1.5zM900.2 270.7h1.0v1.0h-1.0zM915.4 278.8h1.0v1.0h-1.0zM896.7 275.6h1.0v1.0h-1.0zM912.8 285.8h1.6v1.6h-1.6zM911.7 281.2h1.1v1.1h-1.1zM915.2 274.7h1.2v1.2h-1.2zM911.2 280.2h1.4v1.4h-1.4zM899.8 274.3h1.3v1.3h-1.3zM910.3 258.6h1.6v1.6h-1.6zM920.8 281.4h0.8v0.8h-0.8zM916.6 278.2h0.9v0.9h-0.9zM915.2 278.9h1.4v1.4h-1.4zM913.4 262.7h1.2v1.2h-1.2zM910.8 261.5h0.9v0.9h-0.9zM904.5 274.7h1.2v1.2h-1.2zM917.6 272.1h1.1v1.1h-1.1zM900.4 267.0h1.0v1.0h-1.0zM902.6 279.5h1.5v1.5h-1.5zM924.5 277.3h1.2v1.2h-1.2zM919.1 268.3h1.3v1.3h-1.3zM918.0 274.0h1.3v1.3h-1.3zM905.8 282.5h1.6v1.6h-1.6zM899.6 268.5h1.3v1.3h-1.3zM910.8 287.9h1.1v1.1h-1.1zM920.7 274.5h1.1v1.1h-1.1zM913.7 282.4h0.9v0.9h-0.9zM921.1 269.1h1.0v1.0h-1.0zM900.0 269.6h1.1v1.1h-1.1zM914.7 263.6h1.5v1.5h-1.5zM912.3 260.6h0.9v0.9h-0.9zM906.8 258.8h1.5v1.5h-1.5zM918.7 275.2h0.8v0.8h-0.8zM903.8 260.8h1.3v1.3h-1.3zM905.3 263.5h1.4v1.4h-1.4zM898.2 269.1h0.9v0.9h-0.9zM899.3 275.2h0.9v0.9h-0.9zM897.7 267.5h0.9v0.9h-0.9zM909.7 260.3h1.5v1.5h-1.5zM922.7 270.5h1.3v1.3h-1.3zM901.2 274.6h1.3v1.3h-1.3zM904.0 284.4h1.2v1.2h-1.2zM901.1 277.3h1.4v1.4h-1.4zM918.0 261.4h1.4v1.4h-1.4zM911.0 273.3h0.9v0.9h-0.9zM920.2 278.4h0.9v0.9h-0.9zM898.1 275.2h1.2v1.2h-1.2zM917.3 266.6h1.2v1.2h-1.2zM910.5 278.4h1.3v1.3h-1.3zM915.1 277.0h1.0v1.0h-1.0zM909.0 258.3h1.0v1.0h-1.0zM911.9 287.7h1.3v1.3h-1.3zM915.3 258.6h1.3v1.3h-1.3zM911.2 287.9h1.5v1.5h-1.5zM925.8 273.3h1.3v1.3h-1.3zM912.2 283.3h1.0v1.0h-1.0zM912.5 263.6h0.9v0.9h-0.9zM917.6 267.5h0.9v0.9h-0.9zM909.3 267.9h1.3v1.3h-1.3zM906.1 274.8h1.6v1.6h-1.6zM909.8 269.7h1.5v1.5h-1.5zM902.7 262.3h1.4v1.4h-1.4zM915.0 280.4h0.9v0.9h-0.9zM916.5 259.5h1.3v1.3h-1.3zM903.5 260.2h1.2v1.2h-1.2zM903.6 275.9h1.6v1.6h-1.6zM915.7 277.5h1.5v1.5h-1.5zM917.6 274.1h1.2v1.2h-1.2zM911.8 282.3h0.8v0.8h-0.8zM909.0 269.4h1.0v1.0h-1.0zM921.0 280.5h1.0v1.0h-1.0zM908.4 272.1h1.3v1.3h-1.3zM903.2 285.0h1.0v1.0h-1.0zM907.0 286.4h0.8v0.8h-0.8zM900.6 273.6h1.0v1.0h-1.0zM916.2 282.2h0.8v0.8h-0.8zM919.0 273.5h1.1v1.1h-1.1zM910.4 285.6h1.1v1.1h-1.1zM902.1 265.7h1.4v1.4h-1.4zM921.2 268.3h1.4v1.4h-1.4zM907.1 271.6h1.5v1.5h-1.5zM908.1 272.5h1.4v1.4h-1.4zM896.4 272.9h1.1v1.1h-1.1zM897.0 275.6h1.5v1.5h-1.5zM912.3 263.1h1.1v1.1h-1.1zM909.7 258.8h1.2v1.2h-1.2zM907.7 262.3h1.2v1.2h-1.2zM912.8 280.8h1.0v1.0h-1.0zM913.4 272.8h1.0v1.0h-1.0zM914.9 286.0h1.3v1.3h-1.3zM909.2 277.6h1.3v1.3h-1.3zM910.7 261.0h1.4v1.4h-1.4zM908.9 271.5h1.4v1.4h-1.4zM915.2 268.6h1.1v1.1h-1.1zM925.7 271.5h1.5v1.5h-1.5zM914.3 268.0h1.5v1.5h-1.5zM914.0 267.0h1.5v1.5h-1.5zM916.6 259.8h1.5v1.5h-1.5zM916.2 276.4h1.4v1.4h-1.4zM915.1 280.8h1.4v1.4h-1.4zM915.6 264.7h1.1v1.1h-1.1zM906.0 258.9h1.3v1.3h-1.3zM906.8 279.0h0.9v0.9h-0.9zM901.3 264.8h1.0v1.0h-1.0zM910.6 261.3h1.3v1.3h-1.3zM901.5 271.4h0.8v0.8h-0.8zM899.1 270.1h1.5v1.5h-1.5zM922.9 271.0h0.9v0.9h-0.9zM917.1 265.5h1.6v1.6h-1.6zM915.2 271.5h0.8v0.8h-0.8zM922.7 276.8h1.2v1.2h-1.2zM904.9 267.0h1.3v1.3h-1.3zM916.6 276.8h1.4v1.4h-1.4zM911.7 278.0h1.3v1.3h-1.3zM925.4 271.5h1.5v1.5h-1.5zM910.7 271.7h0.9v0.9h-0.9zM901.5 267.6h1.5v1.5h-1.5zM922.6 275.3h0.9v0.9h-0.9zM911.1 268.5h1.2v1.2h-1.2zM913.1 258.3h1.4v1.4h-1.4zM912.6 265.0h1.3v1.3h-1.3zM900.8 270.3h1.3v1.3h-1.3zM902.3 276.1h1.4v1.4h-1.4zM902.1 261.2h1.5v1.5h-1.5zM912.6 268.3h1.2v1.2h-1.2zM897.7 273.3h1.5v1.5h-1.5zM911.5 274.5h1.5v1.5h-1.5zM919.6 271.7h1.3v1.3h-1.3zM904.0 279.1h1.3v1.3h-1.3zM905.9 259.7h1.1v1.1h-1.1zM900.9 273.4h1.6v1.6h-1.6zM896.7 271.5h1.6v1.6h-1.6zM924.0 275.4h0.9v0.9h-0.9zM899.1 273.2h0.9v0.9h-0.9zM900.0 267.1h1.1v1.1h-1.1zM901.8 270.7h0.9v0.9h-0.9zM910.5 287.5h1.3v1.3h-1.3zM898.0 269.6h1.5v1.5h-1.5zM911.4 263.5h1.2v1.2h-1.2zM909.3 276.4h1.5v1.5h-1.5zM919.0 277.4h1.5v1.5h-1.5zM905.7 286.3h0.8v0.8h-0.8zM916.9 281.1h1.3v1.3h-1.3zM914.8 259.3h1.5v1.5h-1.5zM916.9 286.7h0.8v0.8h-0.8zM902.3 274.8h0.8v0.8h-0.8zM915.3 287.3h1.6v1.6h-1.6zM902.6 285.4h1.4v1.4h-1.4zM922.4 275.4h1.0v1.0h-1.0zM908.8 285.5h1.0v1.0h-1.0zM910.3 273.9h1.1v1.1h-1.1zM909.3 277.8h0.9v0.9h-0.9zM907.4 275.4h1.5v1.5h-1.5zM910.5 282.1h0.9v0.9h-0.9zM913.5 267.0h0.9v0.9h-0.9zM901.1 283.4h1.5v1.5h-1.5zM899.8 275.4h0.9v0.9h-0.9zM921.7 265.5h1.0v1.0h-1.0zM914.2 267.9h1.2v1.2h-1.2zM908.4 284.0h1.0v1.0h-1.0zM903.7 271.0h0.8v0.8h-0.8zM921.1 281.7h1.2v1.2h-1.2zM898.9 272.1h1.0v1.0h-1.0zM914.6 281.9h1.4v1.4h-1.4zM909.8 262.9h1.3v1.3h-1.3zM910.6 287.6h1.3v1.3h-1.3zM914.0 264.4h1.3v1.3h-1.3zM908.3 262.4h1.4v1.4h-1.4zM909.2 286.2h1.1v1.1h-1.1zM905.3 272.5h1.1v1.1h-1.1zM913.0 271.3h1.0v1.0h-1.0zM899.3 269.8h1.3v1.3h-1.3zM906.1 261.3h1.3v1.3h-1.3zM917.3 282.1h1.0v1.0h-1.0zM921.7 273.4h1.6v1.6h-1.6zM898.2 275.7h1.3v1.3h-1.3zM921.8 275.6h1.6v1.6h-1.6zM906.3 266.3h1.5v1.5h-1.5zM904.0 260.3h1.5v1.5h-1.5zM902.1 267.9h1.2v1.2h-1.2zM905.1 285.6h0.9v0.9h-0.9zM919.7 272.4h1.2v1.2h-1.2zM904.5 267.7h1.3v1.3h-1.3zM924.2 277.7h0.9v0.9h-0.9zM920.7 263.1h1.4v1.4h-1.4zM911.0 266.5h1.3v1.3h-1.3zM923.0 277.9h1.4v1.4h-1.4zM913.4 282.7h0.9v0.9h-0.9zM904.8 262.1h0.8v0.8h-0.8zM900.3 263.9h0.9v0.9h-0.9zM917.6 268.7h0.8v0.8h-0.8zM922.3 279.6h1.0v1.0h-1.0zM917.3 265.4h0.9v0.9h-0.9zM914.5 265.2h0.9v0.9h-0.9zM919.2 273.2h1.2v1.2h-1.2zM899.6 273.3h0.9v0.9h-0.9zM925.1 273.2h1.1v1.1h-1.1zM908.6 259.0h1.3v1.3h-1.3zM910.6 266.0h1.0v1.0h-1.0zM896.2 271.8h1.6v1.6h-1.6zM912.4 284.9h1.0v1.0h-1.0zM906.0 279.2h1.6v1.6h-1.6zM903.4 279.8h0.9v0.9h-0.9zM913.5 269.4h1.5v1.5h-1.5zM911.5 280.3h0.8v0.8h-0.8zM902.1 284.7h1.1v1.1h-1.1zM904.6 284.3h1.0v1.0h-1.0zM911.7 258.3h1.5v1.5h-1.5zM923.8 276.3h1.4v1.4h-1.4zM914.1 262.0h0.9v0.9h-0.9zM905.9 262.8h1.2v1.2h-1.2zM911.7 266.6h1.1v1.1h-1.1zM901.4 262.5h1.6v1.6h-1.6zM916.8 268.0h1.1v1.1h-1.1zM900.9 271.4h0.9v0.9h-0.9zM901.4 283.8h1.1v1.1h-1.1zM921.3 263.3h1.2v1.2h-1.2zM923.8 265.6h0.8v0.8h-0.8zM898.7 265.1h1.0v1.0h-1.0zM907.2 277.4h1.5v1.5h-1.5zM900.4 268.5h1.3v1.3h-1.3zM919.6 266.5h1.2v1.2h-1.2zM902.8 275.8h1.6v1.6h-1.6zM904.6 264.6h0.9v0.9h-0.9zM909.0 270.6h1.2v1.2h-1.2zM913.3 282.1h1.0v1.0h-1.0zM912.6 282.8h0.9v0.9h-0.9zM910.9 285.7h0.9v0.9h-0.9zM916.5 265.1h1.0v1.0h-1.0zM912.3 263.9h1.1v1.1h-1.1zM917.3 273.0h1.5v1.5h-1.5zM901.1 273.4h1.3v1.3h-1.3zM915.9 276.1h1.5v1.5h-1.5zM905.2 266.8h1.5v1.5h-1.5zM908.4 282.7h1.4v1.4h-1.4zM915.8 266.6h1.6v1.6h-1.6z"/>
<clipPath id="rc3"><circle cx="945" cy="273" r="15"/></clipPath>
<g clip-path="url(#rc3)"><ellipse cx="931.2" cy="268.2" rx="2.6" ry="2.2" fill="none" stroke="#000" stroke-width="0.9"/><ellipse cx="928.5" cy="273.0" rx="2.6" ry="2.2" fill="none" stroke="#000" stroke-width="0.9"/><ellipse cx="931.2" cy="277.8" rx="2.6" ry="2.2" fill="none" stroke="#000" stroke-width="0.9"/><ellipse cx="936.7" cy="258.6" rx="2.6" ry="2.2" fill="none" stroke="#000" stroke-width="0.9"/><ellipse cx="934.0" cy="263.4" rx="2.6" ry="2.2" fill="none" stroke="#000" stroke-width="0.9"/><ellipse cx="936.7" cy="268.2" rx="2.6" ry="2.2" fill="none" stroke="#000" stroke-width="0.9"/><ellipse cx="934.0" cy="273.0" rx="2.6" ry="2.2" fill="none" stroke="#000" stroke-width="0.9"/><ellipse cx="936.7" cy="277.8" rx="2.6" ry="2.2" fill="none" stroke="#000" stroke-width="0.9"/><ellipse cx="934.0" cy="282.6" rx="2.6" ry="2.2" fill="none" stroke="#000" stroke-width="0.9"/><ellipse cx="936.7" cy="287.4" rx="2.6" ry="2.2" fill="none" stroke="#000" stroke-width="0.9"/><ellipse cx="942.2" cy="258.6" rx="2.6" ry="2.2" fill="none" stroke="#000" stroke-width="0.9"/><ellipse cx="939.5" cy="263.4" rx="2.6" ry="2.2" fill="none" stroke="#000" stroke-width="0.9"/><ellipse cx="942.2" cy="268.2" rx="2.6" ry="2.2" fill="none" stroke="#000" stroke-width="0.9"/><ellipse cx="939.5" cy="273.0" rx="2.6" ry="2.2" fill="none" stroke="#000" stroke-width="0.9"/><ellipse cx="942.2" cy="277.8" rx="2.6" ry="2.2" fill="none" stroke="#000" stroke-width="0.9"/><ellipse cx="939.5" cy="282.6" rx="2.6" ry="2.2" fill="none" stroke="#000" stroke-width="0.9"/><ellipse cx="942.2" cy="287.4" rx="2.6" ry="2.2" fill="none" stroke="#000" stroke-width="0.9"/><ellipse cx="947.7" cy="258.6" rx="2.6" ry="2.2" fill="none" stroke="#000" stroke-width="0.9"/><ellipse cx="945.0" cy="263.4" rx="2.6" ry="2.2" fill="none" stroke="#000" stroke-width="0.9"/><ellipse cx="947.7" cy="268.2" rx="2.6" ry="2.2" fill="none" stroke="#000" stroke-width="0.9"/><ellipse cx="945.0" cy="273.0" rx="2.6" ry="2.2" fill="none" stroke="#000" stroke-width="0.9"/><ellipse cx="947.7" cy="277.8" rx="2.6" ry="2.2" fill="none" stroke="#000" stroke-width="0.9"/><ellipse cx="945.0" cy="282.6" rx="2.6" ry="2.2" fill="none" stroke="#000" stroke-width="0.9"/><ellipse cx="947.7" cy="287.4" rx="2.6" ry="2.2" fill="none" stroke="#000" stroke-width="0.9"/><ellipse cx="953.2" cy="258.6" rx="2.6" ry="2.2" fill="none" stroke="#000" stroke-width="0.9"/><ellipse cx="950.5" cy="263.4" rx="2.6" ry="2.2" fill="none" stroke="#000" stroke-width="0.9"/><ellipse cx="953.2" cy="268.2" rx="2.6" ry="2.2" fill="none" stroke="#000" stroke-width="0.9"/><ellipse cx="950.5" cy="273.0" rx="2.6" ry="2.2" fill="none" stroke="#000" stroke-width="0.9"/><ellipse cx="953.2" cy="277.8" rx="2.6" ry="2.2" fill="none" stroke="#000" stroke-width="0.9"/><ellipse cx="950.5" cy="282.6" rx="2.6" ry="2.2" fill="none" stroke="#000" stroke-width="0.9"/><ellipse cx="953.2" cy="287.4" rx="2.6" ry="2.2" fill="none" stroke="#000" stroke-width="0.9"/><ellipse cx="956.0" cy="263.4" rx="2.6" ry="2.2" fill="none" stroke="#000" stroke-width="0.9"/><ellipse cx="958.7" cy="268.2" rx="2.6" ry="2.2" fill="none" stroke="#000" stroke-width="0.9"/><ellipse cx="956.0" cy="273.0" rx="2.6" ry="2.2" fill="none" stroke="#000" stroke-width="0.9"/><ellipse cx="958.7" cy="277.8" rx="2.6" ry="2.2" fill="none" stroke="#000" stroke-width="0.9"/><ellipse cx="956.0" cy="282.6" rx="2.6" ry="2.2" fill="none" stroke="#000" stroke-width="0.9"/><ellipse cx="961.5" cy="273.0" rx="2.6" ry="2.2" fill="none" stroke="#000" stroke-width="0.9"/></g>
<clipPath id="rc4"><circle cx="979" cy="273" r="15"/></clipPath>
<path fill="#000" d="M980.9 280.5h1.2v1.2h-1.2zM968.8 268.8h1.2v1.2h-1.2zM980.4 265.6h1.1v1.1h-1.1zM972.6 260.4h1.0v1.0h-1.0zM972.7 281.1h1.0v1.0h-1.0zM964.5 271.9h1.0v1.0h-1.0zM985.9 260.6h1.2v1.2h-1.2zM975.9 277.1h1.2v1.2h-1.2zM984.2 265.3h1.0v1.0h-1.0zM981.8 267.8h1.3v1.3h-1.3zM980.1 262.3h1.0v1.0h-1.0zM971.9 268.0h1.3v1.3h-1.3zM982.8 260.1h1.4v1.4h-1.4zM984.5 278.5h1.3v1.3h-1.3zM969.7 262.3h1.2v1.2h-1.2zM982.8 274.5h0.8v0.8h-0.8zM970.7 271.0h0.8v0.8h-0.8zM982.2 270.9h1.1v1.1h-1.1zM980.9 260.7h1.0v1.0h-1.0zM988.8 270.6h1.5v1.5h-1.5zM968.4 278.7h1.6v1.6h-1.6zM989.5 277.1h1.3v1.3h-1.3zM990.4 270.6h1.0v1.0h-1.0zM986.2 281.5h0.9v0.9h-0.9zM970.3 284.8h0.9v0.9h-0.9zM982.4 284.8h1.2v1.2h-1.2zM986.2 268.3h1.4v1.4h-1.4zM966.1 280.7h1.5v1.5h-1.5zM982.2 281.6h1.2v1.2h-1.2zM967.7 275.1h1.4v1.4h-1.4zM986.1 282.7h1.5v1.5h-1.5zM972.4 277.1h1.0v1.0h-1.0zM974.9 269.7h1.0v1.0h-1.0zM975.1 284.8h1.4v1.4h-1.4zM973.4 271.4h1.1v1.1h-1.1zM992.9 278.6h1.2v1.2h-1.2zM982.9 266.7h1.0v1.0h-1.0zM984.8 280.3h1.3v1.3h-1.3zM970.9 270.3h0.9v0.9h-0.9zM977.2 286.0h0.9v0.9h-0.9zM992.7 272.3h0.9v0.9h-0.9zM992.6 273.2h0.8v0.8h-0.8zM973.8 263.7h1.1v1.1h-1.1zM977.3 272.0h1.4v1.4h-1.4zM980.6 270.6h1.0v1.0h-1.0zM982.6 267.4h0.9v0.9h-0.9zM984.0 258.9h1.6v1.6h-1.6zM980.9 278.1h0.8v0.8h-0.8zM985.3 278.8h1.6v1.6h-1.6zM979.2 266.6h1.1v1.1h-1.1zM973.3 271.2h0.8v0.8h-0.8zM982.0 280.7h0.8v0.8h-0.8zM993.6 270.7h1.2v1.2h-1.2zM968.8 277.5h1.5v1.5h-1.5zM966.8 280.7h1.6v1.6h-1.6zM977.1 284.2h1.6v1.6h-1.6zM974.0 287.1h1.2v1.2h-1.2zM976.8 268.9h1.1v1.1h-1.1zM975.2 267.3h1.6v1.6h-1.6zM970.0 279.8h1.4v1.4h-1.4zM974.2 284.6h1.4v1.4h-1.4zM980.4 264.7h1.1v1.1h-1.1zM970.3 268.0h1.2v1.2h-1.2zM967.1 267.7h0.9v0.9h-0.9zM980.3 278.2h1.2v1.2h-1.2zM982.9 286.9h1.0v1.0h-1.0zM966.6 277.3h1.0v1.0h-1.0zM985.3 276.5h1.4v1.4h-1.4zM970.5 284.8h0.9v0.9h-0.9zM975.5 283.0h1.1v1.1h-1.1zM977.6 277.6h1.2v1.2h-1.2zM978.9 263.9h1.6v1.6h-1.6zM972.5 266.7h1.1v1.1h-1.1zM978.2 277.6h1.2v1.2h-1.2zM965.9 270.1h0.9v0.9h-0.9zM993.0 275.7h1.1v1.1h-1.1zM976.8 259.1h1.0v1.0h-1.0zM984.8 284.9h1.0v1.0h-1.0zM978.5 273.0h1.3v1.3h-1.3zM972.6 275.5h1.0v1.0h-1.0zM991.7 266.7h1.0v1.0h-1.0zM975.4 281.0h1.1v1.1h-1.1zM968.1 282.8h0.8v0.8h-0.8zM971.7 281.4h1.3v1.3h-1.3zM972.6 284.0h1.1v1.1h-1.1zM987.4 284.6h1.0v1.0h-1.0zM974.9 259.1h0.9v0.9h-0.9zM979.5 259.8h1.1v1.1h-1.1zM983.8 270.2h1.2v1.2h-1.2zM989.8 271.6h1.5v1.5h-1.5zM969.2 280.0h1.2v1.2h-1.2zM975.8 260.5h1.4v1.4h-1.4zM979.4 266.1h1.3v1.3h-1.3zM982.6 260.5h0.9v0.9h-0.9zM977.3 272.4h1.6v1.6h-1.6zM974.6 267.0h1.3v1.3h-1.3zM974.7 283.3h1.4v1.4h-1.4zM988.3 261.4h1.3v1.3h-1.3zM968.5 270.5h0.9v0.9h-0.9zM992.8 276.0h1.6v1.6h-1.6zM982.1 267.3h1.3v1.3h-1.3zM981.9 281.0h1.4v1.4h-1.4zM980.5 272.3h1.4v1.4h-1.4zM975.9 260.9h0.9v0.9h-0.9zM971.4 283.4h1.0v1.0h-1.0zM984.0 282.1h0.9v0.9h-0.9zM978.5 278.9h1.0v1.0h-1.0zM986.7 278.8h1.1v1.1h-1.1zM983.0 277.9h1.1v1.1h-1.1zM986.4 276.5h0.8v0.8h-0.8zM978.6 267.8h1.2v1.2h-1.2zM987.1 282.4h1.6v1.6h-1.6zM977.8 268.8h1.0v1.0h-1.0zM986.2 285.2h0.9v0.9h-0.9zM980.1 259.9h1.5v1.5h-1.5zM970.3 277.4h1.1v1.1h-1.1zM973.0 264.5h1.4v1.4h-1.4zM966.3 278.3h1.3v1.3h-1.3zM977.8 282.7h1.0v1.0h-1.0zM981.8 271.4h1.1v1.1h-1.1zM968.5 278.0h0.9v0.9h-0.9zM976.4 268.2h1.0v1.0h-1.0zM977.4 276.8h1.6v1.6h-1.6zM992.2 278.3h1.3v1.3h-1.3zM989.4 268.1h1.2v1.2h-1.2zM968.5 276.7h1.1v1.1h-1.1zM984.1 283.3h1.4v1.4h-1.4zM993.1 271.0h1.3v1.3h-1.3zM982.2 283.8h0.9v0.9h-0.9zM987.3 262.9h1.1v1.1h-1.1zM972.7 285.7h1.1v1.1h-1.1zM989.8 278.8h1.1v1.1h-1.1zM989.3 282.3h1.0v1.0h-1.0zM982.9 283.2h1.0v1.0h-1.0zM974.0 281.7h1.5v1.5h-1.5zM970.7 267.7h1.5v1.5h-1.5zM991.9 266.6h0.8v0.8h-0.8zM983.5 260.6h1.4v1.4h-1.4zM977.3 261.0h1.0v1.0h-1.0zM991.1 267.4h1.0v1.0h-1.0zM972.6 271.7h1.0v1.0h-1.0zM975.1 269.0h0.8v0.8h-0.8zM970.3 265.1h1.5v1.5h-1.5zM987.2 274.4h0.9v0.9h-0.9zM990.6 266.1h0.9v0.9h-0.9zM966.7 275.2h1.3v1.3h-1.3zM968.0 274.2h1.0v1.0h-1.0zM984.5 275.3h1.2v1.2h-1.2zM987.8 284.1h1.0v1.0h-1.0zM991.0 274.0h1.3v1.3h-1.3zM978.6 263.0h1.5v1.5h-1.5zM972.5 260.0h1.4v1.4h-1.4zM977.5 282.7h1.0v1.0h-1.0zM972.7 266.1h1.2v1.2h-1.2zM974.8 277.7h1.3v1.3h-1.3zM977.7 264.2h0.9v0.9h-0.9zM970.1 265.2h1.2v1.2h-1.2zM985.9 260.2h1.4v1.4h-1.4zM967.2 264.5h1.3v1.3h-1.3zM972.2 272.2h1.1v1.1h-1.1zM973.9 278.8h1.0v1.0h-1.0zM981.0 277.4h1.2v1.2h-1.2zM966.6 278.3h1.4v1.4h-1.4zM991.9 266.9h0.9v0.9h-0.9zM971.1 260.9h0.9v0.9h-0.9zM980.4 274.6h0.9v0.9h-0.9zM992.3 268.4h0.9v0.9h-0.9zM983.9 273.1h1.5v1.5h-1.5zM974.0 283.2h1.1v1.1h-1.1zM968.5 278.7h1.6v1.6h-1.6zM987.9 276.8h1.4v1.4h-1.4zM981.7 261.4h1.0v1.0h-1.0zM986.1 274.2h1.2v1.2h-1.2zM988.1 265.9h1.3v1.3h-1.3zM969.4 281.7h1.6v1.6h-1.6zM967.1 274.9h1.2v1.2h-1.2zM978.7 287.3h0.9v0.9h-0.9zM966.3 279.9h1.3v1.3h-1.3zM973.7 277.4h1.1v1.1h-1.1zM978.8 260.6h1.3v1.3h-1.3zM987.7 270.2h1.0v1.0h-1.0zM968.6 263.0h1.4v1.4h-1.4zM987.5 262.3h0.8v0.8h-0.8zM974.2 267.3h1.3v1.3h-1.3zM982.1 259.9h1.0v1.0h-1.0zM974.9 277.3h1.5v1.5h-1.5zM975.9 262.2h1.2v1.2h-1.2zM978.2 262.9h0.9v0.9h-0.9zM991.6 269.2h1.2v1.2h-1.2zM972.7 270.4h1.0v1.0h-1.0zM990.5 277.1h1.5v1.5h-1.5zM978.5 279.6h1.1v1.1h-1.1zM976.3 285.8h1.0v1.0h-1.0zM978.4 282.5h1.5v1.5h-1.5zM977.8 268.0h0.9v0.9h-0.9zM990.6 276.9h1.3v1.3h-1.3zM983.0 279.9h1.5v1.5h-1.5zM991.2 276.9h1.5v1.5h-1.5zM974.2 266.0h1.4v1.4h-1.4zM988.9 267.7h1.3v1.3h-1.3zM967.4 264.4h1.6v1.6h-1.6zM973.6 264.0h0.9v0.9h-0.9zM969.3 273.8h1.3v1.3h-1.3zM971.7 273.7h1.0v1.0h-1.0zM978.9 261.7h1.4v1.4h-1.4zM982.5 282.4h0.9v0.9h-0.9zM983.1 280.8h1.0v1.0h-1.0zM983.7 271.6h1.2v1.2h-1.2zM990.8 280.8h0.9v0.9h-0.9zM984.2 266.4h1.1v1.1h-1.1zM988.7 279.9h0.9v0.9h-0.9zM973.6 263.5h1.0v1.0h-1.0zM971.6 262.8h0.9v0.9h-0.9zM991.0 265.7h1.4v1.4h-1.4zM986.8 268.9h0.9v0.9h-0.9zM965.9 279.0h1.3v1.3h-1.3zM989.1 281.2h1.4v1.4h-1.4zM967.3 275.9h1.5v1.5h-1.5zM967.2 279.1h1.3v1.3h-1.3zM982.1 259.5h0.9v0.9h-0.9zM983.3 283.6h1.1v1.1h-1.1zM978.9 273.3h1.2v1.2h-1.2zM988.6 272.9h1.0v1.0h-1.0zM970.9 281.3h0.8v0.8h-0.8zM984.2 282.5h1.1v1.1h-1.1zM977.2 267.9h0.9v0.9h-0.9zM990.1 266.2h1.3v1.3h-1.3zM973.8 269.0h0.9v0.9h-0.9zM967.3 277.2h1.2v1.2h-1.2zM974.8 273.0h1.6v1.6h-1.6zM979.6 282.3h1.4v1.4h-1.4zM987.6 270.0h1.2v1.2h-1.2zM984.6 264.1h0.9v0.9h-0.9zM980.8 281.5h0.8v0.8h-0.8zM992.1 278.5h1.5v1.5h-1.5zM982.9 265.7h1.1v1.1h-1.1zM982.2 271.7h1.1v1.1h-1.1zM970.5 282.8h1.3v1.3h-1.3zM993.7 272.5h1.3v1.3h-1.3zM989.1 267.3h1.0v1.0h-1.0zM971.2 272.6h1.5v1.5h-1.5zM980.5 268.5h1.3v1.3h-1.3zM970.9 262.6h0.9v0.9h-0.9zM974.7 270.6h1.1v1.1h-1.1zM973.2 279.8h1.1v1.1h-1.1zM974.0 272.5h1.2v1.2h-1.2zM990.2 278.7h0.8v0.8h-0.8zM978.1 273.1h1.4v1.4h-1.4zM991.1 268.4h1.2v1.2h-1.2zM966.3 276.0h0.9v0.9h-0.9zM972.6 281.2h0.9v0.9h-0.9zM970.4 275.3h0.9v0.9h-0.9zM970.6 267.8h0.9v0.9h-0.9zM972.0 271.5h1.3v1.3h-1.3zM973.7 284.5h1.3v1.3h-1.3zM987.7 273.1h1.4v1.4h-1.4zM972.2 284.2h1.5v1.5h-1.5zM990.6 267.1h1.1v1.1h-1.1zM974.6 273.6h1.0v1.0h-1.0zM978.0 286.4h1.4v1.4h-1.4zM970.1 263.4h1.1v1.1h-1.1zM973.3 266.1h0.8v0.8h-0.8zM965.1 271.0h1.2v1.2h-1.2zM986.6 267.6h1.0v1.0h-1.0zM984.3 281.3h1.0v1.0h-1.0zM985.5 278.3h1.6v1.6h-1.6zM980.8 263.4h1.0v1.0h-1.0zM970.3 273.2h1.3v1.3h-1.3zM976.7 284.6h1.4v1.4h-1.4zM977.7 279.9h1.3v1.3h-1.3zM966.4 266.8h1.5v1.5h-1.5zM968.8 275.5h1.4v1.4h-1.4zM974.4 270.6h1.1v1.1h-1.1zM988.2 281.2h1.4v1.4h-1.4zM976.7 270.4h1.1v1.1h-1.1zM991.3 274.4h1.4v1.4h-1.4zM982.9 285.1h0.8v0.8h-0.8zM987.9 284.4h1.0v1.0h-1.0zM970.4 261.3h1.4v1.4h-1.4zM969.6 275.7h1.1v1.1h-1.1zM986.5 284.0h1.2v1.2h-1.2zM979.9 262.7h1.0v1.0h-1.0zM978.7 278.2h1.4v1.4h-1.4zM969.7 273.0h1.6v1.6h-1.6zM973.1 279.7h1.0v1.0h-1.0zM977.7 280.4h1.2v1.2h-1.2zM970.0 278.0h1.5v1.5h-1.5zM972.1 282.4h1.2v1.2h-1.2zM990.0 269.2h1.5v1.5h-1.5zM974.8 278.1h1.0v1.0h-1.0zM981.1 268.4h1.0v1.0h-1.0zM981.2 269.9h1.4v1.4h-1.4zM973.5 277.4h1.6v1.6h-1.6zM983.4 267.7h0.9v0.9h-0.9zM975.2 271.6h1.6v1.6h-1.6zM975.1 280.5h0.8v0.8h-0.8zM967.8 273.8h0.9v0.9h-0.9zM975.7 262.8h1.5v1.5h-1.5zM991.3 266.2h1.2v1.2h-1.2zM972.1 282.8h1.1v1.1h-1.1zM971.8 275.1h0.9v0.9h-0.9zM988.5 280.2h1.5v1.5h-1.5zM986.7 272.1h1.0v1.0h-1.0zM983.2 275.5h1.5v1.5h-1.5zM973.8 280.5h1.0v1.0h-1.0zM977.0 266.8h1.6v1.6h-1.6zM993.3 275.1h1.1v1.1h-1.1zM969.0 276.7h1.0v1.0h-1.0zM988.3 267.6h1.2v1.2h-1.2zM987.5 264.2h1.5v1.5h-1.5zM985.0 278.6h1.0v1.0h-1.0zM971.3 272.4h1.5v1.5h-1.5zM981.4 282.1h1.1v1.1h-1.1zM973.8 284.5h1.2v1.2h-1.2zM981.5 264.5h1.5v1.5h-1.5zM983.8 264.8h1.5v1.5h-1.5zM985.4 269.9h1.2v1.2h-1.2zM983.9 267.8h1.5v1.5h-1.5zM974.5 285.8h1.1v1.1h-1.1zM992.2 268.2h1.1v1.1h-1.1zM990.8 273.9h1.3v1.3h-1.3zM974.9 286.8h1.1v1.1h-1.1zM972.0 271.7h1.4v1.4h-1.4zM973.4 271.7h1.6v1.6h-1.6zM978.0 278.5h1.4v1.4h-1.4zM967.2 279.5h1.1v1.1h-1.1zM967.0 268.8h1.5v1.5h-1.5zM981.6 277.3h1.2v1.2h-1.2zM986.6 284.0h1.1v1.1h-1.1zM976.3 276.4h1.0v1.0h-1.0zM974.0 278.9h1.0v1.0h-1.0zM976.5 285.5h0.9v0.9h-0.9zM966.9 272.6h0.8v0.8h-0.8zM984.5 261.1h1.0v1.0h-1.0zM982.8 274.5h1.5v1.5h-1.5zM990.3 276.1h1.3v1.3h-1.3zM973.5 264.6h1.2v1.2h-1.2zM966.3 275.9h0.9v0.9h-0.9zM977.8 283.5h1.1v1.1h-1.1zM971.8 266.9h1.6v1.6h-1.6zM982.2 287.0h0.8v0.8h-0.8zM980.9 268.6h1.0v1.0h-1.0zM966.3 279.5h0.9v0.9h-0.9zM965.7 272.2h1.2v1.2h-1.2zM976.4 258.2h1.4v1.4h-1.4zM979.0 281.6h1.2v1.2h-1.2zM979.0 258.1h1.5v1.5h-1.5zM981.2 261.5h1.4v1.4h-1.4zM988.3 263.3h0.9v0.9h-0.9zM980.4 282.5h1.6v1.6h-1.6zM973.7 285.4h1.0v1.0h-1.0zM975.3 259.5h1.6v1.6h-1.6zM968.6 268.0h0.9v0.9h-0.9zM983.1 267.4h0.9v0.9h-0.9zM986.0 264.7h1.2v1.2h-1.2zM984.2 286.4h1.3v1.3h-1.3zM985.2 266.0h1.2v1.2h-1.2zM974.5 272.7h0.8v0.8h-0.8zM971.6 268.0h1.5v1.5h-1.5zM980.0 260.8h1.3v1.3h-1.3zM979.6 284.4h1.3v1.3h-1.3zM978.5 283.2h0.9v0.9h-0.9zM974.4 264.3h1.0v1.0h-1.0zM975.7 260.0h1.0v1.0h-1.0zM990.5 273.5h1.6v1.6h-1.6zM990.5 280.0h1.3v1.3h-1.3zM978.5 271.4h1.1v1.1h-1.1zM993.1 276.9h1.6v1.6h-1.6zM976.3 261.8h1.4v1.4h-1.4zM989.1 283.9h1.1v1.1h-1.1zM977.5 273.7h0.9v0.9h-0.9zM984.9 270.0h1.2v1.2h-1.2zM977.1 260.3h1.2v1.2h-1.2zM974.1 260.2h1.0v1.0h-1.0zM970.5 280.5h1.4v1.4h-1.4zM976.6 271.9h1.0v1.0h-1.0zM970.3 283.9h1.3v1.3h-1.3zM977.5 284.2h1.0v1.0h-1.0zM991.2 270.4h1.5v1.5h-1.5zM974.8 276.4h1.4v1.4h-1.4z"/>
<circle cx="979" cy="273" r="15" fill="#000" opacity=".55"/>
</g></svg>
<!-- Basic combo -->
<div class="a" style="left:826px;top:281px;width:195px;height:17px;background:#232323"></div>
<div class="t" style="left:828px;top:285px;font-size:11px;color:#e4e4e4">Basic,</div>
<svg class="a" style="left:1005px;top:284px" width="12" height="10" viewBox="0 0 12 10"><path d="M1.8,3 L6,7.6 L10.2,3" fill="none" stroke="#eeeeee" stroke-width="1.9"/></svg>
<!-- Odstepy -->
<div class="a" style="left:825px;top:300px;width:197px;height:30px;background:#2e2e2e;border:1px solid #7a7a7a"></div>
<div class="a" style="left:826px;top:301px;width:16px;height:28px;background:#4b4b4b"></div>
<div class="a" style="left:842px;top:301px;width:1px;height:28px;background:#000"></div>
<div class="a" style="left:1011px;top:302px;width:9px;height:26px;background:#3b3b3b"></div>
<div class="t" style="left:826px;top:310px;font-size:11px;color:#e4e4e4">Odstępy</div>
<div class="t" style="left:985px;top:309px;font-size:12px;color:#e4e4e4">20,0</div>
<svg class="a" style="left:1008px;top:301px" width="13" height="28" viewBox="0 0 13 28"><path d="M3.8,8.6 L7.5,5 L11.2,8.6 M3.8,20.4 L7.5,24 L11.2,20.4" fill="none" stroke="#e0e0e0" stroke-width="2"/></svg>
<!-- brush buttons -->
<svg class="a" style="left:826px;top:330px" width="196" height="24" viewBox="826 330 196 24">
<g fill="#cfcfcf">
<rect x="834" y="336.3" width="7" height="1.6"/><rect x="834" y="339.8" width="3" height="1.6"/><rect x="834" y="343.2" width="2.5" height="1.6"/><rect x="834" y="346.6" width="10" height="1.6"/>
<path d="M845,335.5 L847,337.5 L839.5,345 L836.8,345.8 L837.5,343 Z"/>
</g>
<g fill="none" stroke="#bdbdbd" stroke-width="1.3">
<path d="M868.5,341 V347.5 H877 V338.5 L874.5,335.5 H871.5"/><path d="M866.5,338.5 H872 M869.2,335.7 V341.2" stroke-width="1.6"/>
<rect x="899.5" y="336.8" width="7.5" height="6"/><path d="M907.5,340.3 H909.8 V346.3 H902.5 V343.5"/>
</g>
<rect x="930" y="335" width="13" height="12.8" fill="url(#chk)"/>
<path d="M932.8,337.8 L940.2,345 M940.2,337.8 L932.8,345" stroke="#333" stroke-width="2"/>
<path d="M972.2,338.3 Q970.5,336.5 968.3,336.6 Q963.3,336.8 963.3,341.6 Q963.3,346.6 968.3,346.6 Q971.8,346.6 973,343.5" fill="none" stroke="#cfcfcf" stroke-width="2"/>
<path d="M969.5,339.8 H974.6 V334.7 Z" fill="#cfcfcf"/>
<path d="M1000,343 V335.8 H1005.5 L1008.8,339 V343" fill="none" stroke="url(#chk)" stroke-width="1.5"/>
<path d="M998.8,347.8 V341.5 L1001.5,343.5 H1010 V347.8 Z" fill="url(#chk)"/>
</svg>
<svg class="a" style="left:912px;top:354px" width="22" height="5" viewBox="0 0 22 5"><rect x="2" y="1.5" width="4" height="2" fill="#cfcfcf"/><rect x="9" y="1.5" width="4" height="2" fill="#cfcfcf"/><rect x="16" y="1.5" width="4" height="2" fill="#cfcfcf"/></svg>
<!-- layers tabs -->
<div class="a" style="left:822px;top:380px;width:203px;height:1px;background:#595959"></div>
<div class="a" style="left:888px;top:362px;width:106px;height:18px;background:#262626"></div>
<div class="a" style="left:940px;top:362px;width:1px;height:18px;background:#3a3a3a"></div>
<div class="a" style="left:822px;top:359px;width:66px;height:22px;background:#3c3c3c;border:1px solid #5a5a5a;border-bottom:none"></div>
<svg class="a" style="left:824px;top:361px" width="170" height="20" viewBox="824 361 170 20">
<g fill="#cfcfcf"><path d="M829,363 H838 L836,366 H827 Z M829,367.5 H838 L836,370.5 H827 Z M829,372 H838 L836,375 H827 Z"/></g>
<rect x="889.5" y="364.5" width="12" height="12" fill="none" stroke="#cfcfcf" stroke-width="1.1"/><rect x="891.5" y="366.5" width="2" height="8" fill="#777"/><rect x="894.5" y="366.5" width="2" height="8" fill="#999"/><rect x="897.5" y="366.5" width="2" height="8" fill="#bbb"/>
<g fill="none" stroke="#cfcfcf" stroke-width="1.6"><path d="M944.5,376 Q950,365 955.5,376"/></g><g fill="#cfcfcf"><rect x="943" y="367" width="3" height="2.5"/><rect x="953.5" y="367" width="3" height="2.5"/><rect x="946" y="367.8" width="7.5" height="1" opacity=".7"/></g>
</svg>
<div class="t" style="left:840px;top:365px;font-size:11px;color:#dcdcdc">Warstwy</div>
<div class="t" style="left:903px;top:365px;font-size:11px;color:#e4e4e4">Kanały</div>
<div class="t" style="left:957px;top:365px;font-size:11px;color:#e4e4e4;letter-spacing:-0.5px">Ścieżki</div>
<div class="a" style="left:1010px;top:365px;width:10px;height:10px;border:1px solid #d9d9d9;background:#333"></div>
<svg class="a" style="left:1010px;top:365px" width="10" height="10" viewBox="0 0 10 10"><path d="M2.2,5 L7.6,2 V8 Z" fill="#cfcfcf"/></svg>
<svg class="a" style="left:819px;top:377px" width="4" height="20" viewBox="0 0 4 20"><rect x="1" y="1" width="2" height="4" fill="#cfcfcf"/><rect x="1" y="8" width="2" height="4" fill="#cfcfcf"/><rect x="1" y="15" width="2" height="4" fill="#cfcfcf"/></svg>
<!-- mode combo -->
<div class="a" style="left:825px;top:383px;width:153px;height:27px;background:#2d2d2d;border:1px solid #1c1c1c;border-radius:4px"></div>
<div class="a" style="left:979px;top:383px;width:43px;height:27px;background:#2d2d2d;border:1px solid #1c1c1c;border-radius:4px"></div>
<div class="t" style="left:832px;top:392px;font-size:11px;color:#777">Tryb</div>
<div class="t" style="left:918px;top:392px;font-size:11px;color:#777">Zwykłe</div>
<svg class="a" style="left:957px;top:389px" width="16" height="14" viewBox="0 0 16 14"><path d="M2,4 L8,10 L14,4" fill="none" stroke="#e6e6e6" stroke-width="1.8"/></svg>
<svg class="a" style="left:1001px;top:389px" width="16" height="14" viewBox="0 0 16 14"><path d="M2,4 L8,10 L14,4" fill="none" stroke="#e6e6e6" stroke-width="1.8"/></svg>
<svg class="a" style="left:983px;top:389px" width="16" height="16" viewBox="0 0 16 16"><g fill="none" stroke="#cfcfcf" stroke-width="1.3" stroke-dasharray="1.3 .6"><path d="M6,3 Q12,2 12,8 Q12,13 7,13"/><path d="M3,5 L6,3 L6,7"/></g><circle cx="4.5" cy="12" r="1.4" fill="#cfcfcf"/></svg>
<!-- Krycie -->
<div class="a" style="left:825px;top:412px;width:184px;height:27px;background:#5c5c5c"></div>
<div class="a" style="left:1008px;top:412px;width:1.5px;height:27px;background:#000"></div>
<div class="a" style="left:1010px;top:412px;width:11px;height:27px;background:#3b3b3b"></div>
<svg class="a" style="left:1010px;top:412px" width="11" height="27" viewBox="0 0 11 27"><path d="M2,8 L5.5,4.5 L9,8 M2,18 L5.5,21.5 L9,18" fill="none" stroke="#6a6a6a" stroke-width="1.3"/></svg>
<div class="t" style="left:826px;top:421px;font-size:11px;color:#eeeeee">Krycie</div>
<div class="t" style="left:980px;top:421px;font-size:11px;color:#eeeeee">100,0</div>
<!-- Blokowanie -->
<div class="t" style="left:824px;top:449px;font-size:11px;color:#bdbdbd;letter-spacing:-0.2px">Blokowanie:</div>
<svg class="a" style="left:886px;top:445px" width="64" height="18" viewBox="886 445 64 18">
<path d="M900.8,447.3 L901.3,447.8 L894,456.5 L892.5,458.5 Q891,460 889.3,459.8 Q889.2,458 890.5,456.5 L892.5,454.8 Z" fill="url(#chk)"/>
<path d="M918.5,448.5 V458.5 M913.5,453.5 H923.5" stroke="url(#chk)" stroke-width="1.7"/><path d="M918.5,446.5 L921.3,449.6 H915.7 Z M918.5,460.5 L921.3,457.4 H915.7 Z M911.5,453.5 L914.6,450.7 V456.3 Z M925.5,453.5 L922.4,450.7 V456.3 Z" fill="url(#chk)"/>
<rect x="936" y="447" width="13.5" height="13.3" fill="url(#chk)"/>
</svg>
<!-- layers list -->
<div class="a" style="left:825px;top:465px;width:197px;height:224px;background:#303030;border-radius:2px"></div>
<!-- layer buttons -->
<svg class="a" style="left:826px;top:690px" width="196" height="24" viewBox="826 690 196 24">
<g fill="none" stroke="url(#chk)" stroke-width="1.5">
<path d="M832.5,699 V707 H841 V698.5 L838.5,695.8 H835.5"/><path d="M830.5,697.5 H835.5 M833,695 V700" stroke-width="1.8"/>
<path d="M927.2,696.5 H934.5 V703 H927.2 Z M934.5,700.5 H938 V707 H931 V703"/>
<path d="M956.7,700 V707 M953.5,700.5 H960 M951.5,703.5 Q952.5,707.5 956.7,707.5 Q961,707.5 962,703.5"/>
</g>
<path d="M956.7,695.5 L958.5,697.5 L956.7,699.5 L954.9,697.5 Z" fill="url(#chk)"/>
<path d="M853.8,695 H858.5 L859.5,696.5 H867.2 V708 H853.8 Z" fill="url(#chk)"/>
<path d="M861,700.5 V706 M858.3,703.2 H863.7" stroke="#333" stroke-width="1.6"/>
<path d="M878.8,704.5 L884.5,698.2 L890.2,704.5 M902.8,698.5 L908.4,704.8 L914,698.5" fill="none" stroke="#bdbdbd" stroke-width="1.7"/>
<path d="M975.5,695 H982 V700 Q982,701.8 978.8,701.8 Q975.5,701.8 975.5,700 Z M974.5,707.5 L978,702.5 H987.5 L984,707.5 Z" fill="url(#chk)"/>
<rect x="1001" y="695" width="13" height="12.8" fill="url(#chk)"/>
<path d="M1003.8,697.8 L1011.2,705 M1011.2,697.8 L1003.8,705" stroke="#333" stroke-width="2"/>
</svg>

<!-- drag ghost -->
<div class="a" style="left:66px;top:70px;width:104px;height:104px;background:rgba(184,222,244,.36);border:1px solid rgba(190,225,250,.55);border-radius:3px"></div>
<svg class="a" style="left:72px;top:114px;opacity:.72" width="85" height="49" viewBox="0 0 90 52" preserveAspectRatio="none"><use href="#thumb"/></svg>

</body></html>
